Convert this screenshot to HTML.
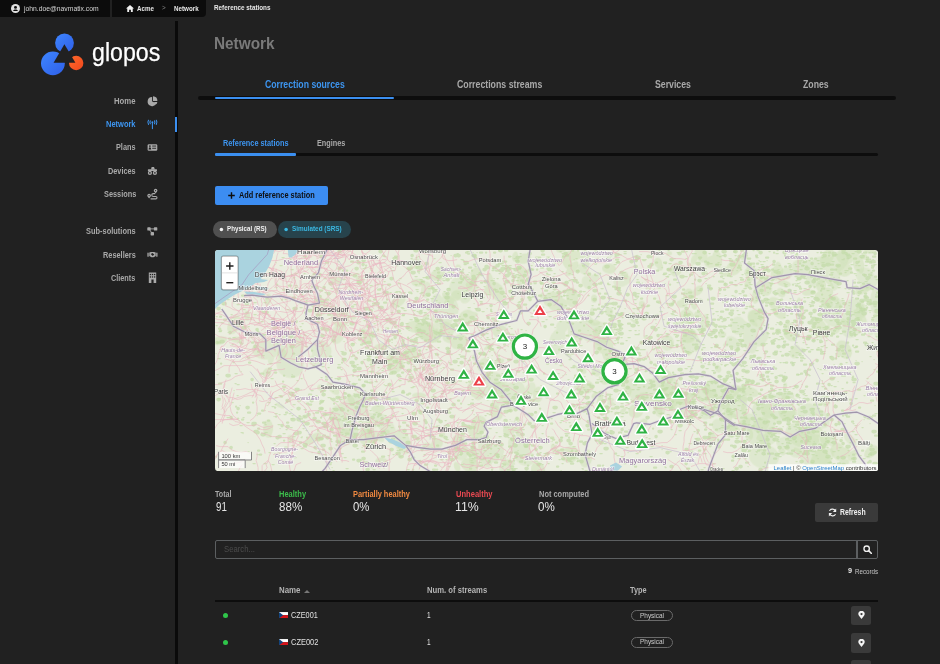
<!DOCTYPE html>
<html><head><meta charset="utf-8"><style>
html,body{margin:0;padding:0;}
body{width:940px;height:664px;overflow:hidden;position:relative;background:#212121;font-family:"Liberation Sans", sans-serif;}
.t{position:absolute;white-space:nowrap;line-height:1.2;}
.b{position:absolute;}
</style></head><body>
<div class="b" style="left:0px;top:0px;width:110px;height:17px;background:#0c0c0c;"></div>
<div class="b" style="left:112px;top:0px;width:94px;height:17px;background:#0c0c0c;border-radius:0 0 4px 0;"></div>
<svg class="b" style="left:11px;top:4px" width="9" height="9" viewBox="0 0 16 16"><circle cx="8" cy="8" r="8" fill="#e0e0e0"/><circle cx="8" cy="6" r="2.6" fill="#0c0c0c"/><path d="M3.6 12.6 C4.6 10.4 6.2 9.8 8 9.8 C9.8 9.8 11.4 10.4 12.4 12.6 Z" fill="#0c0c0c"/></svg>
<svg class="b" style="left:126px;top:4.5px" width="8" height="7" viewBox="0 0 16 14"><path d="M8 0 L16 7 L13.5 7 L13.5 14 L9.8 14 L9.8 9.5 L6.2 9.5 L6.2 14 L2.5 14 L2.5 7 L0 7 Z" fill="#f0f0f0"/></svg>
<div class="b" style="left:175px;top:21px;width:3px;height:643px;background:#0a0a0a;"></div>
<div class="b" style="left:175px;top:116.5px;width:2px;height:15.5px;background:#3b8ff0;"></div>
<svg class="b" style="left:30px;top:25px" width="140" height="60" viewBox="0 0 140 60">
<defs><linearGradient id="lg1" x1="0" y1="0" x2="1" y2="1"><stop offset="0" stop-color="#3e86ff"/><stop offset="1" stop-color="#2f5fe8"/></linearGradient>
<linearGradient id="lg2" x1="0" y1="0" x2="1" y2="1"><stop offset="0" stop-color="#ff6a2a"/><stop offset="1" stop-color="#f0481e"/></linearGradient></defs>
<circle cx="34.5" cy="18.0" r="9.4" fill="url(#lg1)"/>
<circle cx="22.9" cy="38.3" r="11.9" fill="url(#lg1)"/>
<circle cx="46.2" cy="38" r="7.2" fill="url(#lg2)"/>
<path d="M34.4 19.2 L23.6 37.8 L45.4 37.8 Z" fill="#212121"/>
</svg>
<svg class="b" style="left:140px;top:90px" width="25" height="200" viewBox="140 90 25 200">
<g fill="#a9a9a9">
<path d="M152.1 101.6 V96.9 A4.6 4.6 0 1 0 156.5 103.2 Z"/>
<path d="M153.0 96.2 A4.7 4.7 0 0 1 157.4 100.9 H153.0 Z"/>
<path d="M153.6 101.9 H157.3 A4.6 4.6 0 0 1 156.3 104.3 Z"/>
</g>
<g stroke="#3d95f0" stroke-width="1.05" fill="none" stroke-linecap="round">
<path d="M152.4 122.6 V128.6"/>
<path d="M150.3 120.9 Q149.4 122.3 150.3 123.7"/><path d="M154.5 120.9 Q155.4 122.3 154.5 123.7"/>
<path d="M148.5 120.2 Q147.1 122.3 148.5 124.4"/><path d="M156.3 120.2 Q157.7 122.3 156.3 124.4"/>
</g>
<circle cx="152.4" cy="122.3" r="0.95" fill="#3d95f0"/>
<rect x="147.6" y="144.2" width="9.7" height="6.6" rx="1.2" fill="#a9a9a9"/>
<g fill="#212121"><circle cx="149.9" cy="146.1" r="0.85"/><path d="M148.6 149.4 Q148.7 147.3 149.9 147.3 Q151.1 147.3 151.2 149.4 Z"/>
<rect x="152.2" y="145.6" width="3.9" height="0.9"/><rect x="152.2" y="147.8" width="3.9" height="0.9"/></g>
<g fill="#a9a9a9"><path d="M151.0 169.6 L151.6 167.0 H154.0 L154.9 169.6 Z"/><rect x="147.9" y="169.3" width="9.1" height="1.7" rx="0.5"/></g>
<g fill="#a9a9a9"><circle cx="149.9" cy="172.9" r="2.1"/><circle cx="154.9" cy="172.9" r="2.1"/></g><g fill="#212121"><circle cx="149.9" cy="172.9" r="0.8"/><circle cx="154.9" cy="172.9" r="0.8"/></g>
<g fill="#a9a9a9"><circle cx="155.6" cy="190.6" r="1.75"/><path d="M154.0 191.3 L155.6 193.5 L157.2 191.3 Z"/>
<circle cx="149.1" cy="195.6" r="1.75"/><path d="M147.5 196.3 L149.1 198.6 L150.7 196.3 Z"/></g>
<circle cx="155.6" cy="190.6" r="0.6" fill="#212121"/><circle cx="149.1" cy="195.6" r="0.6" fill="#212121"/>
<path d="M155.2 193.6 H153.2 A1.45 1.45 0 0 0 153.2 196.5 H155.8 A1.2 1.2 0 0 1 155.8 198.9 H150.6" fill="none" stroke="#a9a9a9" stroke-width="1.1"/>
<g fill="#a9a9a9"><rect x="147.3" y="227.2" width="3.4" height="3.4" rx="0.7"/><rect x="153.9" y="227.2" width="3.4" height="3.4" rx="0.7"/>
<rect x="150.6" y="232.0" width="3.4" height="3.4" rx="0.7"/></g>
<path d="M149 228.9 H155.6 M149 228.9 L152.3 233.7" stroke="#a9a9a9" stroke-width="0.9"/>
<g fill="#a9a9a9"><rect x="147.4" y="252.7" width="1.3" height="4.0"/><rect x="156.2" y="252.7" width="1.3" height="4.0"/>
<path d="M149.3 252.6 L151.0 251.9 H154.0 L155.7 252.6 V256.0 L153.6 257.3 H151.4 L149.3 256.0 Z"/></g>
<path d="M150.8 254.1 L152.5 253.1 L154.3 254.6 L152.6 255.9 Z" fill="#212121"/>
<path d="M148.8 272.5 H156.2 V283 H153.6 V279.6 H151.4 V283 H148.8 Z" fill="#a9a9a9"/>
<g fill="#212121"><rect x="149.8" y="273.9" width="1.3" height="1.3"/><rect x="151.9" y="273.9" width="1.3" height="1.3"/><rect x="154.0" y="273.9" width="1.3" height="1.3"/>
<rect x="149.8" y="276.3" width="1.3" height="1.3"/><rect x="151.9" y="276.3" width="1.3" height="1.3"/><rect x="154.0" y="276.3" width="1.3" height="1.3"/>
</g>
</svg>
<div class="b" style="left:198px;top:96px;width:697.5px;height:3.700000000000003px;background:#0d0d0d;border-radius:2px;"></div>
<div class="b" style="left:215px;top:96.5px;width:179px;height:2.5px;background:#3b8ff0;border-radius:1px;"></div>
<div class="b" style="left:215px;top:152.6px;width:663.3px;height:3.200000000000017px;background:#0d0d0d;border-radius:2px;"></div>
<div class="b" style="left:215px;top:153px;width:81px;height:2.5px;background:#3b8ff0;border-radius:1px;"></div>
<div class="b" style="left:215px;top:185.5px;width:113px;height:19.80000000000001px;background:#3c8df2;border-radius:2px;"></div>
<svg class="b" style="left:228px;top:192px" width="7" height="7" viewBox="0 0 10 10"><path d="M5 0.3 V9.7 M0.3 5 H9.7" stroke="#0e0e0e" stroke-width="2.0"/></svg>
<div class="b" style="left:213.2px;top:220.6px;width:63.80000000000001px;height:17.0px;background:#505050;border-radius:9px;"></div>
<div class="b" style="left:278.2px;top:220.6px;width:72.80000000000001px;height:17.0px;background:#27434c;border-radius:9px;"></div>
<svg class="b" style="left:210px;top:220px" width="90" height="20" viewBox="210 220 90 20"><circle cx="221.4" cy="229.4" r="1.75" fill="#f4f4f4"/><circle cx="286.1" cy="229.4" r="1.75" fill="#3bb8e2"/></svg>
<svg class="b" style="left:214.9px;top:250.4px" width="663.2" height="221.1" viewBox="214.9 250.4 663.2 221.1"><defs><clipPath id="mc"><rect x="214.9" y="250.4" width="663.2" height="221.1" rx="3"/></clipPath></defs><g clip-path="url(#mc)"><rect x="214.9" y="250.4" width="663.2" height="221.1" fill="#ebeee0"/><g fill="#cfe2b8" opacity="0.55"><ellipse cx="799" cy="311" rx="8" ry="3" transform="rotate(96 799 311)"/><ellipse cx="800" cy="305" rx="7" ry="3" transform="rotate(78 800 305)"/><ellipse cx="827" cy="304" rx="6" ry="5" transform="rotate(22 827 304)"/><ellipse cx="820" cy="329" rx="10" ry="7" transform="rotate(71 820 329)"/><ellipse cx="823" cy="299" rx="9" ry="5" transform="rotate(26 823 299)"/><ellipse cx="837" cy="312" rx="9" ry="4" transform="rotate(105 837 312)"/><ellipse cx="784" cy="284" rx="7" ry="3" transform="rotate(11 784 284)"/><ellipse cx="827" cy="331" rx="6" ry="3" transform="rotate(105 827 331)"/><ellipse cx="776" cy="305" rx="9" ry="6" transform="rotate(44 776 305)"/><ellipse cx="764" cy="288" rx="9" ry="7" transform="rotate(52 764 288)"/><ellipse cx="869" cy="249" rx="6" ry="5" transform="rotate(27 869 249)"/><ellipse cx="855" cy="250" rx="8" ry="6" transform="rotate(103 855 250)"/><ellipse cx="871" cy="241" rx="8" ry="5" transform="rotate(104 871 241)"/><ellipse cx="827" cy="258" rx="10" ry="6" transform="rotate(120 827 258)"/><ellipse cx="886" cy="259" rx="8" ry="7" transform="rotate(148 886 259)"/><ellipse cx="856" cy="264" rx="8" ry="3" transform="rotate(83 856 264)"/><ellipse cx="864" cy="257" rx="3" ry="3" transform="rotate(23 864 257)"/><ellipse cx="860" cy="265" rx="9" ry="4" transform="rotate(81 860 265)"/><ellipse cx="824" cy="240" rx="9" ry="7" transform="rotate(50 824 240)"/><ellipse cx="845" cy="257" rx="9" ry="8" transform="rotate(27 845 257)"/><ellipse cx="606" cy="410" rx="5" ry="3" transform="rotate(106 606 410)"/><ellipse cx="600" cy="401" rx="6" ry="3" transform="rotate(102 600 401)"/><ellipse cx="626" cy="393" rx="7" ry="5" transform="rotate(122 626 393)"/><ellipse cx="636" cy="411" rx="8" ry="7" transform="rotate(144 636 411)"/><ellipse cx="586" cy="409" rx="4" ry="3" transform="rotate(11 586 409)"/><ellipse cx="611" cy="404" rx="4" ry="2" transform="rotate(9 611 404)"/><ellipse cx="610" cy="400" rx="4" ry="2" transform="rotate(5 610 400)"/><ellipse cx="359" cy="282" rx="4" ry="2" transform="rotate(63 359 282)"/><ellipse cx="320" cy="307" rx="9" ry="8" transform="rotate(84 320 307)"/><ellipse cx="317" cy="301" rx="4" ry="2" transform="rotate(48 317 301)"/><ellipse cx="338" cy="291" rx="3" ry="3" transform="rotate(95 338 291)"/><ellipse cx="353" cy="318" rx="3" ry="2" transform="rotate(176 353 318)"/><ellipse cx="360" cy="279" rx="5" ry="3" transform="rotate(30 360 279)"/><ellipse cx="335" cy="278" rx="8" ry="5" transform="rotate(40 335 278)"/><ellipse cx="459" cy="236" rx="9" ry="7" transform="rotate(147 459 236)"/><ellipse cx="418" cy="283" rx="7" ry="4" transform="rotate(5 418 283)"/><ellipse cx="449" cy="303" rx="5" ry="4" transform="rotate(172 449 303)"/><ellipse cx="340" cy="318" rx="10" ry="9" transform="rotate(66 340 318)"/><ellipse cx="425" cy="317" rx="4" ry="2" transform="rotate(112 425 317)"/><ellipse cx="476" cy="273" rx="6" ry="5" transform="rotate(144 476 273)"/><ellipse cx="466" cy="318" rx="9" ry="7" transform="rotate(135 466 318)"/><ellipse cx="398" cy="302" rx="9" ry="5" transform="rotate(144 398 302)"/><ellipse cx="456" cy="296" rx="6" ry="5" transform="rotate(130 456 296)"/><ellipse cx="476" cy="277" rx="4" ry="3" transform="rotate(145 476 277)"/><ellipse cx="497" cy="292" rx="10" ry="7" transform="rotate(63 497 292)"/><ellipse cx="458" cy="268" rx="3" ry="3" transform="rotate(117 458 268)"/><ellipse cx="415" cy="264" rx="6" ry="5" transform="rotate(149 415 264)"/><ellipse cx="474" cy="281" rx="5" ry="3" transform="rotate(106 474 281)"/><ellipse cx="469" cy="286" rx="4" ry="3" transform="rotate(64 469 286)"/><ellipse cx="439" cy="275" rx="9" ry="6" transform="rotate(165 439 275)"/><ellipse cx="490" cy="280" rx="7" ry="3" transform="rotate(79 490 280)"/><ellipse cx="521" cy="281" rx="9" ry="4" transform="rotate(85 521 281)"/><ellipse cx="515" cy="257" rx="5" ry="3" transform="rotate(100 515 257)"/><ellipse cx="522" cy="272" rx="7" ry="4" transform="rotate(50 522 272)"/><ellipse cx="524" cy="259" rx="7" ry="5" transform="rotate(164 524 259)"/><ellipse cx="489" cy="289" rx="7" ry="4" transform="rotate(125 489 289)"/><ellipse cx="492" cy="287" rx="6" ry="6" transform="rotate(126 492 287)"/><ellipse cx="561" cy="250" rx="5" ry="3" transform="rotate(170 561 250)"/><ellipse cx="527" cy="272" rx="4" ry="2" transform="rotate(13 527 272)"/><ellipse cx="560" cy="305" rx="8" ry="6" transform="rotate(161 560 305)"/><ellipse cx="576" cy="316" rx="8" ry="4" transform="rotate(159 576 316)"/><ellipse cx="572" cy="298" rx="10" ry="6" transform="rotate(88 572 298)"/><ellipse cx="594" cy="299" rx="4" ry="3" transform="rotate(93 594 299)"/><ellipse cx="554" cy="307" rx="5" ry="4" transform="rotate(4 554 307)"/><ellipse cx="542" cy="296" rx="3" ry="2" transform="rotate(112 542 296)"/><ellipse cx="553" cy="300" rx="10" ry="8" transform="rotate(175 553 300)"/><ellipse cx="365" cy="432" rx="3" ry="3" transform="rotate(49 365 432)"/><ellipse cx="367" cy="438" rx="9" ry="8" transform="rotate(47 367 438)"/><ellipse cx="382" cy="463" rx="7" ry="5" transform="rotate(16 382 463)"/><ellipse cx="384" cy="433" rx="6" ry="3" transform="rotate(169 384 433)"/><ellipse cx="321" cy="388" rx="4" ry="3" transform="rotate(12 321 388)"/><ellipse cx="367" cy="400" rx="5" ry="4" transform="rotate(167 367 400)"/><ellipse cx="349" cy="433" rx="7" ry="3" transform="rotate(20 349 433)"/><ellipse cx="354" cy="427" rx="4" ry="2" transform="rotate(55 354 427)"/><ellipse cx="351" cy="400" rx="7" ry="3" transform="rotate(62 351 400)"/><ellipse cx="368" cy="422" rx="3" ry="2" transform="rotate(99 368 422)"/><ellipse cx="313" cy="439" rx="10" ry="4" transform="rotate(147 313 439)"/><ellipse cx="268" cy="429" rx="9" ry="5" transform="rotate(91 268 429)"/><ellipse cx="267" cy="373" rx="5" ry="4" transform="rotate(127 267 373)"/><ellipse cx="280" cy="406" rx="5" ry="2" transform="rotate(23 280 406)"/><ellipse cx="345" cy="433" rx="5" ry="2" transform="rotate(15 345 433)"/><ellipse cx="333" cy="389" rx="8" ry="4" transform="rotate(44 333 389)"/><ellipse cx="291" cy="439" rx="4" ry="3" transform="rotate(47 291 439)"/><ellipse cx="378" cy="409" rx="7" ry="4" transform="rotate(174 378 409)"/><ellipse cx="474" cy="358" rx="3" ry="2" transform="rotate(85 474 358)"/><ellipse cx="468" cy="345" rx="7" ry="3" transform="rotate(48 468 345)"/><ellipse cx="495" cy="353" rx="3" ry="1" transform="rotate(55 495 353)"/><ellipse cx="483" cy="365" rx="7" ry="5" transform="rotate(118 483 365)"/><ellipse cx="472" cy="315" rx="6" ry="3" transform="rotate(177 472 315)"/><ellipse cx="497" cy="364" rx="8" ry="3" transform="rotate(150 497 364)"/><ellipse cx="500" cy="332" rx="8" ry="7" transform="rotate(25 500 332)"/><ellipse cx="459" cy="342" rx="9" ry="7" transform="rotate(149 459 342)"/><ellipse cx="447" cy="329" rx="8" ry="6" transform="rotate(41 447 329)"/><ellipse cx="489" cy="347" rx="6" ry="2" transform="rotate(150 489 347)"/><ellipse cx="472" cy="389" rx="7" ry="5" transform="rotate(88 472 389)"/><ellipse cx="538" cy="395" rx="8" ry="5" transform="rotate(96 538 395)"/><ellipse cx="496" cy="391" rx="8" ry="4" transform="rotate(13 496 391)"/><ellipse cx="497" cy="414" rx="4" ry="3" transform="rotate(176 497 414)"/><ellipse cx="479" cy="395" rx="6" ry="5" transform="rotate(138 479 395)"/><ellipse cx="478" cy="383" rx="4" ry="2" transform="rotate(46 478 383)"/><ellipse cx="499" cy="385" rx="7" ry="3" transform="rotate(11 499 385)"/><ellipse cx="496" cy="413" rx="8" ry="6" transform="rotate(52 496 413)"/><ellipse cx="477" cy="394" rx="6" ry="3" transform="rotate(161 477 394)"/><ellipse cx="518" cy="427" rx="10" ry="4" transform="rotate(83 518 427)"/><ellipse cx="447" cy="297" rx="6" ry="3" transform="rotate(38 447 297)"/><ellipse cx="436" cy="336" rx="7" ry="3" transform="rotate(94 436 336)"/><ellipse cx="432" cy="337" rx="9" ry="6" transform="rotate(160 432 337)"/><ellipse cx="415" cy="327" rx="9" ry="6" transform="rotate(4 415 327)"/><ellipse cx="448" cy="340" rx="6" ry="3" transform="rotate(25 448 340)"/><ellipse cx="408" cy="353" rx="9" ry="4" transform="rotate(135 408 353)"/><ellipse cx="426" cy="332" rx="9" ry="7" transform="rotate(162 426 332)"/><ellipse cx="414" cy="357" rx="6" ry="5" transform="rotate(106 414 357)"/><ellipse cx="404" cy="355" rx="5" ry="2" transform="rotate(18 404 355)"/><ellipse cx="475" cy="434" rx="10" ry="5" transform="rotate(48 475 434)"/><ellipse cx="437" cy="444" rx="6" ry="5" transform="rotate(159 437 444)"/><ellipse cx="479" cy="425" rx="9" ry="8" transform="rotate(99 479 425)"/><ellipse cx="458" cy="440" rx="8" ry="5" transform="rotate(135 458 440)"/><ellipse cx="442" cy="435" rx="3" ry="3" transform="rotate(23 442 435)"/><ellipse cx="427" cy="447" rx="5" ry="4" transform="rotate(176 427 447)"/><ellipse cx="457" cy="467" rx="5" ry="3" transform="rotate(71 457 467)"/><ellipse cx="471" cy="453" rx="4" ry="4" transform="rotate(89 471 453)"/><ellipse cx="475" cy="477" rx="10" ry="6" transform="rotate(25 475 477)"/><ellipse cx="466" cy="451" rx="5" ry="2" transform="rotate(43 466 451)"/><ellipse cx="538" cy="471" rx="9" ry="7" transform="rotate(74 538 471)"/><ellipse cx="509" cy="463" rx="6" ry="3" transform="rotate(11 509 463)"/><ellipse cx="526" cy="486" rx="4" ry="3" transform="rotate(113 526 486)"/><ellipse cx="554" cy="449" rx="5" ry="3" transform="rotate(72 554 449)"/><ellipse cx="470" cy="465" rx="9" ry="7" transform="rotate(4 470 465)"/><ellipse cx="586" cy="459" rx="9" ry="6" transform="rotate(106 586 459)"/><ellipse cx="570" cy="455" rx="9" ry="8" transform="rotate(154 570 455)"/><ellipse cx="562" cy="453" rx="4" ry="2" transform="rotate(94 562 453)"/><ellipse cx="510" cy="429" rx="8" ry="6" transform="rotate(138 510 429)"/><ellipse cx="503" cy="459" rx="3" ry="3" transform="rotate(42 503 459)"/><ellipse cx="633" cy="320" rx="5" ry="2" transform="rotate(45 633 320)"/><ellipse cx="592" cy="312" rx="4" ry="2" transform="rotate(94 592 312)"/><ellipse cx="595" cy="323" rx="5" ry="3" transform="rotate(2 595 323)"/><ellipse cx="604" cy="346" rx="10" ry="7" transform="rotate(159 604 346)"/><ellipse cx="597" cy="332" rx="5" ry="4" transform="rotate(127 597 332)"/><ellipse cx="609" cy="333" rx="6" ry="5" transform="rotate(76 609 333)"/><ellipse cx="609" cy="352" rx="9" ry="5" transform="rotate(6 609 352)"/><ellipse cx="600" cy="343" rx="8" ry="4" transform="rotate(143 600 343)"/><ellipse cx="609" cy="312" rx="4" ry="4" transform="rotate(56 609 312)"/><ellipse cx="596" cy="372" rx="5" ry="4" transform="rotate(53 596 372)"/><ellipse cx="610" cy="376" rx="4" ry="2" transform="rotate(75 610 376)"/><ellipse cx="568" cy="355" rx="4" ry="2" transform="rotate(38 568 355)"/><ellipse cx="600" cy="379" rx="3" ry="1" transform="rotate(71 600 379)"/><ellipse cx="620" cy="365" rx="8" ry="7" transform="rotate(168 620 365)"/><ellipse cx="584" cy="387" rx="10" ry="7" transform="rotate(6 584 387)"/><ellipse cx="581" cy="370" rx="6" ry="3" transform="rotate(30 581 370)"/><ellipse cx="605" cy="380" rx="5" ry="5" transform="rotate(22 605 380)"/><ellipse cx="666" cy="393" rx="5" ry="4" transform="rotate(148 666 393)"/><ellipse cx="643" cy="397" rx="6" ry="4" transform="rotate(166 643 397)"/><ellipse cx="658" cy="406" rx="9" ry="4" transform="rotate(74 658 406)"/><ellipse cx="666" cy="376" rx="3" ry="1" transform="rotate(11 666 376)"/><ellipse cx="666" cy="391" rx="8" ry="7" transform="rotate(61 666 391)"/><ellipse cx="642" cy="425" rx="7" ry="4" transform="rotate(129 642 425)"/><ellipse cx="642" cy="404" rx="3" ry="2" transform="rotate(165 642 404)"/><ellipse cx="612" cy="374" rx="3" ry="2" transform="rotate(86 612 374)"/><ellipse cx="707" cy="387" rx="6" ry="3" transform="rotate(77 707 387)"/><ellipse cx="595" cy="396" rx="4" ry="3" transform="rotate(133 595 396)"/><ellipse cx="668" cy="376" rx="7" ry="4" transform="rotate(58 668 376)"/><ellipse cx="623" cy="411" rx="4" ry="2" transform="rotate(136 623 411)"/><ellipse cx="700" cy="399" rx="3" ry="2" transform="rotate(59 700 399)"/><ellipse cx="749" cy="392" rx="10" ry="5" transform="rotate(15 749 392)"/><ellipse cx="723" cy="403" rx="8" ry="5" transform="rotate(42 723 403)"/><ellipse cx="671" cy="403" rx="8" ry="6" transform="rotate(152 671 403)"/><ellipse cx="694" cy="390" rx="9" ry="5" transform="rotate(102 694 390)"/><ellipse cx="673" cy="409" rx="4" ry="2" transform="rotate(44 673 409)"/><ellipse cx="728" cy="415" rx="7" ry="4" transform="rotate(71 728 415)"/><ellipse cx="729" cy="394" rx="5" ry="4" transform="rotate(118 729 394)"/><ellipse cx="711" cy="395" rx="6" ry="5" transform="rotate(151 711 395)"/><ellipse cx="706" cy="393" rx="5" ry="2" transform="rotate(34 706 393)"/><ellipse cx="731" cy="392" rx="10" ry="6" transform="rotate(156 731 392)"/><ellipse cx="682" cy="398" rx="8" ry="7" transform="rotate(19 682 398)"/><ellipse cx="726" cy="386" rx="5" ry="3" transform="rotate(25 726 386)"/><ellipse cx="767" cy="413" rx="7" ry="5" transform="rotate(37 767 413)"/><ellipse cx="787" cy="401" rx="8" ry="4" transform="rotate(56 787 401)"/><ellipse cx="775" cy="431" rx="7" ry="3" transform="rotate(18 775 431)"/><ellipse cx="730" cy="414" rx="7" ry="3" transform="rotate(29 730 414)"/><ellipse cx="750" cy="383" rx="5" ry="3" transform="rotate(172 750 383)"/><ellipse cx="745" cy="422" rx="6" ry="3" transform="rotate(156 745 422)"/><ellipse cx="789" cy="400" rx="4" ry="3" transform="rotate(37 789 400)"/><ellipse cx="825" cy="401" rx="6" ry="5" transform="rotate(73 825 401)"/><ellipse cx="785" cy="387" rx="4" ry="2" transform="rotate(99 785 387)"/><ellipse cx="718" cy="369" rx="4" ry="3" transform="rotate(67 718 369)"/><ellipse cx="743" cy="400" rx="5" ry="3" transform="rotate(167 743 400)"/><ellipse cx="787" cy="413" rx="9" ry="8" transform="rotate(36 787 413)"/><ellipse cx="810" cy="431" rx="10" ry="6" transform="rotate(10 810 431)"/><ellipse cx="761" cy="425" rx="9" ry="7" transform="rotate(148 761 425)"/><ellipse cx="763" cy="448" rx="5" ry="3" transform="rotate(152 763 448)"/><ellipse cx="747" cy="423" rx="5" ry="3" transform="rotate(93 747 423)"/><ellipse cx="731" cy="434" rx="5" ry="4" transform="rotate(162 731 434)"/><ellipse cx="770" cy="434" rx="8" ry="3" transform="rotate(151 770 434)"/><ellipse cx="764" cy="441" rx="7" ry="5" transform="rotate(55 764 441)"/><ellipse cx="712" cy="438" rx="6" ry="4" transform="rotate(80 712 438)"/><ellipse cx="735" cy="431" rx="7" ry="5" transform="rotate(42 735 431)"/><ellipse cx="744" cy="409" rx="6" ry="3" transform="rotate(85 744 409)"/><ellipse cx="750" cy="434" rx="6" ry="3" transform="rotate(80 750 434)"/><ellipse cx="733" cy="430" rx="7" ry="3" transform="rotate(132 733 430)"/><ellipse cx="745" cy="416" rx="3" ry="2" transform="rotate(68 745 416)"/><ellipse cx="809" cy="439" rx="9" ry="8" transform="rotate(132 809 439)"/><ellipse cx="805" cy="435" rx="10" ry="6" transform="rotate(172 805 435)"/><ellipse cx="809" cy="437" rx="9" ry="7" transform="rotate(12 809 437)"/><ellipse cx="782" cy="452" rx="4" ry="3" transform="rotate(49 782 452)"/><ellipse cx="804" cy="435" rx="7" ry="6" transform="rotate(37 804 435)"/><ellipse cx="798" cy="451" rx="5" ry="2" transform="rotate(33 798 451)"/><ellipse cx="822" cy="458" rx="8" ry="7" transform="rotate(30 822 458)"/><ellipse cx="802" cy="436" rx="7" ry="5" transform="rotate(65 802 436)"/><ellipse cx="816" cy="432" rx="7" ry="6" transform="rotate(19 816 432)"/><ellipse cx="825" cy="439" rx="6" ry="5" transform="rotate(48 825 439)"/><ellipse cx="824" cy="439" rx="6" ry="4" transform="rotate(80 824 439)"/><ellipse cx="828" cy="462" rx="3" ry="3" transform="rotate(46 828 462)"/><ellipse cx="766" cy="407" rx="7" ry="5" transform="rotate(56 766 407)"/><ellipse cx="816" cy="440" rx="4" ry="3" transform="rotate(78 816 440)"/><ellipse cx="759" cy="437" rx="4" ry="2" transform="rotate(118 759 437)"/><ellipse cx="812" cy="440" rx="5" ry="2" transform="rotate(64 812 440)"/><ellipse cx="815" cy="460" rx="7" ry="4" transform="rotate(112 815 460)"/><ellipse cx="797" cy="441" rx="10" ry="5" transform="rotate(27 797 441)"/><ellipse cx="838" cy="452" rx="9" ry="7" transform="rotate(72 838 452)"/><ellipse cx="810" cy="442" rx="8" ry="5" transform="rotate(63 810 442)"/><ellipse cx="756" cy="319" rx="10" ry="7" transform="rotate(45 756 319)"/><ellipse cx="789" cy="336" rx="7" ry="4" transform="rotate(43 789 336)"/><ellipse cx="838" cy="355" rx="3" ry="2" transform="rotate(169 838 355)"/><ellipse cx="795" cy="352" rx="7" ry="5" transform="rotate(115 795 352)"/><ellipse cx="789" cy="326" rx="5" ry="3" transform="rotate(9 789 326)"/><ellipse cx="828" cy="313" rx="8" ry="3" transform="rotate(152 828 313)"/><ellipse cx="779" cy="313" rx="8" ry="5" transform="rotate(41 779 313)"/><ellipse cx="801" cy="351" rx="3" ry="2" transform="rotate(135 801 351)"/><ellipse cx="756" cy="296" rx="8" ry="4" transform="rotate(100 756 296)"/><ellipse cx="722" cy="357" rx="7" ry="4" transform="rotate(116 722 357)"/><ellipse cx="860" cy="317" rx="9" ry="4" transform="rotate(47 860 317)"/><ellipse cx="844" cy="350" rx="10" ry="7" transform="rotate(59 844 350)"/><ellipse cx="860" cy="309" rx="5" ry="4" transform="rotate(114 860 309)"/><ellipse cx="824" cy="295" rx="10" ry="6" transform="rotate(151 824 295)"/><ellipse cx="821" cy="286" rx="6" ry="5" transform="rotate(103 821 286)"/><ellipse cx="833" cy="332" rx="7" ry="3" transform="rotate(164 833 332)"/><ellipse cx="844" cy="323" rx="4" ry="3" transform="rotate(62 844 323)"/><ellipse cx="845" cy="323" rx="3" ry="2" transform="rotate(114 845 323)"/><ellipse cx="824" cy="292" rx="3" ry="2" transform="rotate(65 824 292)"/><ellipse cx="863" cy="290" rx="9" ry="4" transform="rotate(156 863 290)"/><ellipse cx="902" cy="298" rx="4" ry="2" transform="rotate(20 902 298)"/><ellipse cx="888" cy="276" rx="9" ry="6" transform="rotate(149 888 276)"/><ellipse cx="800" cy="261" rx="4" ry="2" transform="rotate(136 800 261)"/><ellipse cx="829" cy="283" rx="6" ry="2" transform="rotate(46 829 283)"/><ellipse cx="808" cy="293" rx="6" ry="3" transform="rotate(174 808 293)"/><ellipse cx="750" cy="269" rx="7" ry="3" transform="rotate(74 750 269)"/><ellipse cx="763" cy="280" rx="5" ry="4" transform="rotate(97 763 280)"/><ellipse cx="835" cy="299" rx="4" ry="3" transform="rotate(31 835 299)"/><ellipse cx="844" cy="270" rx="8" ry="7" transform="rotate(1 844 270)"/><ellipse cx="778" cy="271" rx="9" ry="4" transform="rotate(89 778 271)"/><ellipse cx="781" cy="293" rx="5" ry="4" transform="rotate(51 781 293)"/><ellipse cx="748" cy="283" rx="6" ry="3" transform="rotate(115 748 283)"/><ellipse cx="777" cy="273" rx="8" ry="6" transform="rotate(113 777 273)"/><ellipse cx="725" cy="272" rx="6" ry="5" transform="rotate(16 725 272)"/><ellipse cx="744" cy="258" rx="4" ry="2" transform="rotate(162 744 258)"/><ellipse cx="717" cy="260" rx="9" ry="5" transform="rotate(83 717 260)"/><ellipse cx="701" cy="255" rx="8" ry="6" transform="rotate(63 701 255)"/><ellipse cx="734" cy="268" rx="9" ry="7" transform="rotate(134 734 268)"/><ellipse cx="752" cy="274" rx="8" ry="6" transform="rotate(23 752 274)"/><ellipse cx="691" cy="267" rx="5" ry="2" transform="rotate(54 691 267)"/><ellipse cx="647" cy="287" rx="4" ry="2" transform="rotate(45 647 287)"/><ellipse cx="647" cy="339" rx="4" ry="2" transform="rotate(34 647 339)"/><ellipse cx="698" cy="315" rx="4" ry="3" transform="rotate(18 698 315)"/><ellipse cx="609" cy="354" rx="9" ry="7" transform="rotate(78 609 354)"/><ellipse cx="671" cy="344" rx="4" ry="2" transform="rotate(70 671 344)"/><ellipse cx="684" cy="324" rx="9" ry="6" transform="rotate(90 684 324)"/><ellipse cx="642" cy="305" rx="4" ry="3" transform="rotate(73 642 305)"/><ellipse cx="698" cy="291" rx="6" ry="4" transform="rotate(135 698 291)"/><ellipse cx="689" cy="336" rx="8" ry="7" transform="rotate(139 689 336)"/><ellipse cx="689" cy="297" rx="8" ry="6" transform="rotate(82 689 297)"/><ellipse cx="690" cy="353" rx="4" ry="2" transform="rotate(141 690 353)"/><ellipse cx="694" cy="305" rx="5" ry="3" transform="rotate(82 694 305)"/><ellipse cx="687" cy="317" rx="8" ry="7" transform="rotate(33 687 317)"/><ellipse cx="682" cy="304" rx="6" ry="4" transform="rotate(175 682 304)"/><ellipse cx="722" cy="335" rx="4" ry="3" transform="rotate(169 722 335)"/><ellipse cx="844" cy="454" rx="7" ry="5" transform="rotate(129 844 454)"/><ellipse cx="821" cy="454" rx="9" ry="6" transform="rotate(74 821 454)"/><ellipse cx="871" cy="452" rx="8" ry="5" transform="rotate(137 871 452)"/><ellipse cx="905" cy="479" rx="5" ry="2" transform="rotate(49 905 479)"/><ellipse cx="852" cy="456" rx="6" ry="4" transform="rotate(126 852 456)"/><ellipse cx="844" cy="463" rx="5" ry="4" transform="rotate(169 844 463)"/><ellipse cx="838" cy="454" rx="9" ry="5" transform="rotate(38 838 454)"/><ellipse cx="884" cy="470" rx="9" ry="6" transform="rotate(84 884 470)"/><ellipse cx="234" cy="325" rx="10" ry="6" transform="rotate(115 234 325)"/><ellipse cx="268" cy="300" rx="6" ry="3" transform="rotate(99 268 300)"/><ellipse cx="282" cy="354" rx="5" ry="5" transform="rotate(48 282 354)"/><ellipse cx="237" cy="340" rx="6" ry="3" transform="rotate(0 237 340)"/><ellipse cx="247" cy="316" rx="5" ry="3" transform="rotate(86 247 316)"/><ellipse cx="219" cy="341" rx="8" ry="4" transform="rotate(167 219 341)"/><ellipse cx="395" cy="365" rx="9" ry="8" transform="rotate(141 395 365)"/><ellipse cx="419" cy="396" rx="7" ry="3" transform="rotate(2 419 396)"/><ellipse cx="423" cy="362" rx="5" ry="2" transform="rotate(26 423 362)"/><ellipse cx="394" cy="401" rx="5" ry="3" transform="rotate(163 394 401)"/><ellipse cx="394" cy="359" rx="9" ry="7" transform="rotate(141 394 359)"/><ellipse cx="365" cy="337" rx="9" ry="7" transform="rotate(36 365 337)"/><ellipse cx="380" cy="349" rx="8" ry="5" transform="rotate(159 380 349)"/><ellipse cx="372" cy="365" rx="5" ry="2" transform="rotate(89 372 365)"/><ellipse cx="625" cy="276" rx="4" ry="3" transform="rotate(90 625 276)"/><ellipse cx="554" cy="263" rx="3" ry="2" transform="rotate(84 554 263)"/><ellipse cx="567" cy="261" rx="9" ry="5" transform="rotate(75 567 261)"/><ellipse cx="609" cy="269" rx="7" ry="5" transform="rotate(5 609 269)"/><ellipse cx="572" cy="256" rx="10" ry="5" transform="rotate(177 572 256)"/><ellipse cx="572" cy="269" rx="9" ry="4" transform="rotate(129 572 269)"/><ellipse cx="585" cy="260" rx="9" ry="5" transform="rotate(85 585 260)"/><ellipse cx="660" cy="267" rx="4" ry="3" transform="rotate(76 660 267)"/><ellipse cx="658" cy="263" rx="5" ry="4" transform="rotate(73 658 263)"/><ellipse cx="676" cy="270" rx="7" ry="6" transform="rotate(118 676 270)"/><ellipse cx="694" cy="260" rx="5" ry="3" transform="rotate(106 694 260)"/><ellipse cx="669" cy="254" rx="3" ry="2" transform="rotate(159 669 254)"/><ellipse cx="684" cy="269" rx="5" ry="2" transform="rotate(34 684 269)"/><ellipse cx="712" cy="262" rx="8" ry="6" transform="rotate(164 712 262)"/></g><g fill="#cbe0b2" opacity="0.38"><ellipse cx="639" cy="392" rx="12" ry="9" transform="rotate(107 639 392)"/><ellipse cx="654" cy="394" rx="13" ry="8" transform="rotate(137 654 394)"/><ellipse cx="670" cy="403" rx="6" ry="5" transform="rotate(165 670 403)"/><ellipse cx="649" cy="393" rx="14" ry="11" transform="rotate(101 649 393)"/><ellipse cx="659" cy="408" rx="10" ry="6" transform="rotate(78 659 408)"/><ellipse cx="631" cy="384" rx="7" ry="5" transform="rotate(7 631 384)"/><ellipse cx="687" cy="411" rx="12" ry="10" transform="rotate(80 687 411)"/><ellipse cx="680" cy="401" rx="12" ry="10" transform="rotate(177 680 401)"/><ellipse cx="640" cy="401" rx="7" ry="5" transform="rotate(38 640 401)"/><ellipse cx="662" cy="401" rx="6" ry="5" transform="rotate(22 662 401)"/><ellipse cx="668" cy="399" rx="15" ry="7" transform="rotate(3 668 399)"/><ellipse cx="657" cy="393" rx="13" ry="7" transform="rotate(9 657 393)"/><ellipse cx="665" cy="386" rx="15" ry="11" transform="rotate(15 665 386)"/><ellipse cx="638" cy="390" rx="11" ry="9" transform="rotate(46 638 390)"/><ellipse cx="691" cy="397" rx="6" ry="3" transform="rotate(117 691 397)"/><ellipse cx="765" cy="416" rx="9" ry="7" transform="rotate(30 765 416)"/><ellipse cx="782" cy="410" rx="7" ry="4" transform="rotate(103 782 410)"/><ellipse cx="718" cy="426" rx="7" ry="6" transform="rotate(65 718 426)"/><ellipse cx="734" cy="408" rx="10" ry="6" transform="rotate(142 734 408)"/><ellipse cx="809" cy="413" rx="12" ry="7" transform="rotate(11 809 413)"/><ellipse cx="806" cy="417" rx="14" ry="9" transform="rotate(109 806 417)"/><ellipse cx="816" cy="417" rx="12" ry="7" transform="rotate(77 816 417)"/><ellipse cx="782" cy="413" rx="13" ry="9" transform="rotate(161 782 413)"/><ellipse cx="769" cy="412" rx="6" ry="3" transform="rotate(76 769 412)"/><ellipse cx="713" cy="410" rx="15" ry="7" transform="rotate(150 713 410)"/><ellipse cx="783" cy="400" rx="12" ry="7" transform="rotate(153 783 400)"/><ellipse cx="776" cy="404" rx="15" ry="9" transform="rotate(15 776 404)"/><ellipse cx="709" cy="413" rx="8" ry="6" transform="rotate(168 709 413)"/><ellipse cx="764" cy="435" rx="13" ry="8" transform="rotate(37 764 435)"/><ellipse cx="759" cy="438" rx="14" ry="9" transform="rotate(16 759 438)"/><ellipse cx="778" cy="402" rx="8" ry="6" transform="rotate(161 778 402)"/><ellipse cx="787" cy="411" rx="11" ry="8" transform="rotate(34 787 411)"/><ellipse cx="767" cy="426" rx="13" ry="8" transform="rotate(102 767 426)"/><ellipse cx="730" cy="428" rx="7" ry="4" transform="rotate(179 730 428)"/><ellipse cx="750" cy="424" rx="12" ry="10" transform="rotate(28 750 424)"/><ellipse cx="737" cy="414" rx="11" ry="5" transform="rotate(6 737 414)"/><ellipse cx="820" cy="419" rx="11" ry="8" transform="rotate(47 820 419)"/><ellipse cx="766" cy="409" rx="15" ry="12" transform="rotate(147 766 409)"/><ellipse cx="782" cy="418" rx="6" ry="3" transform="rotate(33 782 418)"/><ellipse cx="796" cy="446" rx="12" ry="10" transform="rotate(82 796 446)"/><ellipse cx="831" cy="440" rx="7" ry="5" transform="rotate(72 831 440)"/><ellipse cx="827" cy="457" rx="9" ry="6" transform="rotate(115 827 457)"/><ellipse cx="819" cy="442" rx="10" ry="6" transform="rotate(29 819 442)"/><ellipse cx="850" cy="440" rx="8" ry="4" transform="rotate(46 850 440)"/><ellipse cx="764" cy="457" rx="15" ry="12" transform="rotate(8 764 457)"/><ellipse cx="797" cy="434" rx="12" ry="11" transform="rotate(10 797 434)"/><ellipse cx="811" cy="454" rx="15" ry="12" transform="rotate(54 811 454)"/><ellipse cx="762" cy="439" rx="7" ry="4" transform="rotate(46 762 439)"/><ellipse cx="806" cy="451" rx="8" ry="4" transform="rotate(26 806 451)"/><ellipse cx="789" cy="444" rx="13" ry="7" transform="rotate(6 789 444)"/><ellipse cx="803" cy="443" rx="15" ry="13" transform="rotate(160 803 443)"/><ellipse cx="727" cy="400" rx="7" ry="6" transform="rotate(152 727 400)"/><ellipse cx="712" cy="390" rx="9" ry="8" transform="rotate(86 712 390)"/><ellipse cx="716" cy="393" rx="8" ry="4" transform="rotate(128 716 393)"/><ellipse cx="715" cy="394" rx="15" ry="8" transform="rotate(74 715 394)"/><ellipse cx="724" cy="399" rx="14" ry="9" transform="rotate(30 724 399)"/><ellipse cx="711" cy="395" rx="15" ry="8" transform="rotate(176 711 395)"/><ellipse cx="740" cy="399" rx="13" ry="7" transform="rotate(86 740 399)"/><ellipse cx="718" cy="400" rx="8" ry="5" transform="rotate(178 718 400)"/><ellipse cx="888" cy="270" rx="7" ry="4" transform="rotate(161 888 270)"/><ellipse cx="865" cy="276" rx="9" ry="8" transform="rotate(3 865 276)"/><ellipse cx="830" cy="261" rx="7" ry="3" transform="rotate(150 830 261)"/><ellipse cx="801" cy="269" rx="10" ry="9" transform="rotate(39 801 269)"/><ellipse cx="805" cy="267" rx="8" ry="6" transform="rotate(128 805 267)"/><ellipse cx="824" cy="274" rx="7" ry="5" transform="rotate(89 824 274)"/><ellipse cx="817" cy="277" rx="12" ry="9" transform="rotate(146 817 277)"/><ellipse cx="803" cy="266" rx="7" ry="5" transform="rotate(73 803 266)"/><ellipse cx="818" cy="266" rx="14" ry="8" transform="rotate(152 818 266)"/><ellipse cx="843" cy="260" rx="6" ry="5" transform="rotate(86 843 260)"/><ellipse cx="836" cy="264" rx="8" ry="6" transform="rotate(66 836 264)"/><ellipse cx="835" cy="279" rx="12" ry="5" transform="rotate(94 835 279)"/><ellipse cx="786" cy="274" rx="7" ry="6" transform="rotate(147 786 274)"/><ellipse cx="838" cy="263" rx="13" ry="8" transform="rotate(135 838 263)"/><ellipse cx="883" cy="326" rx="16" ry="10" transform="rotate(92 883 326)"/><ellipse cx="829" cy="311" rx="6" ry="5" transform="rotate(40 829 311)"/><ellipse cx="853" cy="321" rx="9" ry="7" transform="rotate(5 853 321)"/><ellipse cx="872" cy="328" rx="8" ry="4" transform="rotate(108 872 328)"/><ellipse cx="831" cy="307" rx="13" ry="6" transform="rotate(157 831 307)"/><ellipse cx="849" cy="311" rx="7" ry="5" transform="rotate(90 849 311)"/><ellipse cx="848" cy="323" rx="10" ry="5" transform="rotate(107 848 323)"/><ellipse cx="856" cy="309" rx="12" ry="9" transform="rotate(30 856 309)"/><ellipse cx="869" cy="284" rx="10" ry="6" transform="rotate(151 869 284)"/><ellipse cx="833" cy="313" rx="15" ry="12" transform="rotate(61 833 313)"/><ellipse cx="851" cy="329" rx="10" ry="9" transform="rotate(145 851 329)"/><ellipse cx="877" cy="301" rx="14" ry="7" transform="rotate(93 877 301)"/><ellipse cx="530" cy="390" rx="8" ry="5" transform="rotate(114 530 390)"/><ellipse cx="496" cy="402" rx="7" ry="4" transform="rotate(91 496 402)"/><ellipse cx="511" cy="396" rx="16" ry="13" transform="rotate(169 511 396)"/><ellipse cx="492" cy="385" rx="15" ry="13" transform="rotate(6 492 385)"/><ellipse cx="500" cy="390" rx="13" ry="7" transform="rotate(98 500 390)"/><ellipse cx="519" cy="390" rx="9" ry="6" transform="rotate(78 519 390)"/><ellipse cx="514" cy="393" rx="9" ry="7" transform="rotate(22 514 393)"/><ellipse cx="482" cy="385" rx="11" ry="6" transform="rotate(84 482 385)"/><ellipse cx="477" cy="454" rx="7" ry="4" transform="rotate(53 477 454)"/><ellipse cx="473" cy="458" rx="8" ry="4" transform="rotate(98 473 458)"/><ellipse cx="519" cy="446" rx="12" ry="9" transform="rotate(36 519 446)"/><ellipse cx="486" cy="447" rx="11" ry="8" transform="rotate(84 486 447)"/><ellipse cx="486" cy="460" rx="8" ry="6" transform="rotate(69 486 460)"/><ellipse cx="491" cy="454" rx="10" ry="8" transform="rotate(43 491 454)"/><ellipse cx="460" cy="452" rx="9" ry="8" transform="rotate(53 460 452)"/><ellipse cx="498" cy="451" rx="7" ry="6" transform="rotate(79 498 451)"/><ellipse cx="525" cy="458" rx="10" ry="8" transform="rotate(20 525 458)"/><ellipse cx="508" cy="474" rx="13" ry="7" transform="rotate(61 508 474)"/><ellipse cx="347" cy="435" rx="12" ry="10" transform="rotate(148 347 435)"/><ellipse cx="340" cy="418" rx="13" ry="11" transform="rotate(86 340 418)"/><ellipse cx="358" cy="401" rx="15" ry="8" transform="rotate(157 358 401)"/><ellipse cx="370" cy="421" rx="12" ry="8" transform="rotate(173 370 421)"/><ellipse cx="347" cy="414" rx="14" ry="12" transform="rotate(109 347 414)"/><ellipse cx="348" cy="429" rx="11" ry="8" transform="rotate(53 348 429)"/><ellipse cx="346" cy="430" rx="10" ry="6" transform="rotate(142 346 430)"/><ellipse cx="361" cy="408" rx="10" ry="6" transform="rotate(55 361 408)"/><ellipse cx="319" cy="359" rx="12" ry="6" transform="rotate(166 319 359)"/><ellipse cx="290" cy="365" rx="14" ry="13" transform="rotate(37 290 365)"/><ellipse cx="271" cy="359" rx="6" ry="3" transform="rotate(102 271 359)"/><ellipse cx="266" cy="350" rx="14" ry="10" transform="rotate(180 266 350)"/><ellipse cx="284" cy="349" rx="13" ry="8" transform="rotate(64 284 349)"/><ellipse cx="292" cy="345" rx="15" ry="12" transform="rotate(95 292 345)"/><ellipse cx="319" cy="355" rx="10" ry="7" transform="rotate(103 319 355)"/><ellipse cx="338" cy="334" rx="11" ry="7" transform="rotate(112 338 334)"/><ellipse cx="321" cy="350" rx="11" ry="9" transform="rotate(31 321 350)"/><ellipse cx="428" cy="332" rx="14" ry="10" transform="rotate(20 428 332)"/><ellipse cx="463" cy="288" rx="14" ry="13" transform="rotate(160 463 288)"/><ellipse cx="437" cy="303" rx="9" ry="6" transform="rotate(91 437 303)"/><ellipse cx="449" cy="307" rx="12" ry="9" transform="rotate(64 449 307)"/><ellipse cx="466" cy="299" rx="6" ry="4" transform="rotate(142 466 299)"/><ellipse cx="437" cy="318" rx="6" ry="4" transform="rotate(152 437 318)"/><ellipse cx="426" cy="290" rx="8" ry="5" transform="rotate(100 426 290)"/><ellipse cx="443" cy="318" rx="11" ry="10" transform="rotate(103 443 318)"/><ellipse cx="439" cy="303" rx="8" ry="6" transform="rotate(19 439 303)"/><ellipse cx="577" cy="332" rx="11" ry="9" transform="rotate(110 577 332)"/><ellipse cx="572" cy="328" rx="6" ry="5" transform="rotate(58 572 328)"/><ellipse cx="567" cy="325" rx="8" ry="4" transform="rotate(18 567 325)"/><ellipse cx="586" cy="325" rx="9" ry="6" transform="rotate(69 586 325)"/><ellipse cx="600" cy="334" rx="12" ry="10" transform="rotate(79 600 334)"/><ellipse cx="562" cy="327" rx="6" ry="6" transform="rotate(154 562 327)"/><ellipse cx="557" cy="342" rx="14" ry="8" transform="rotate(108 557 342)"/><ellipse cx="587" cy="328" rx="15" ry="9" transform="rotate(70 587 328)"/><ellipse cx="738" cy="326" rx="9" ry="8" transform="rotate(87 738 326)"/><ellipse cx="743" cy="326" rx="8" ry="5" transform="rotate(34 743 326)"/><ellipse cx="752" cy="333" rx="12" ry="6" transform="rotate(96 752 333)"/><ellipse cx="729" cy="343" rx="7" ry="3" transform="rotate(149 729 343)"/><ellipse cx="733" cy="343" rx="8" ry="5" transform="rotate(43 733 343)"/><ellipse cx="762" cy="339" rx="9" ry="5" transform="rotate(127 762 339)"/><ellipse cx="750" cy="340" rx="14" ry="7" transform="rotate(80 750 340)"/><ellipse cx="754" cy="316" rx="8" ry="5" transform="rotate(130 754 316)"/><ellipse cx="667" cy="343" rx="8" ry="7" transform="rotate(91 667 343)"/><ellipse cx="692" cy="338" rx="7" ry="6" transform="rotate(47 692 338)"/><ellipse cx="703" cy="324" rx="10" ry="5" transform="rotate(109 703 324)"/><ellipse cx="696" cy="345" rx="7" ry="5" transform="rotate(98 696 345)"/><ellipse cx="687" cy="343" rx="10" ry="7" transform="rotate(102 687 343)"/><ellipse cx="593" cy="279" rx="7" ry="4" transform="rotate(153 593 279)"/><ellipse cx="587" cy="283" rx="7" ry="5" transform="rotate(65 587 283)"/><ellipse cx="583" cy="270" rx="7" ry="4" transform="rotate(41 583 270)"/><ellipse cx="622" cy="281" rx="9" ry="6" transform="rotate(164 622 281)"/><ellipse cx="385" cy="425" rx="15" ry="7" transform="rotate(50 385 425)"/><ellipse cx="402" cy="442" rx="13" ry="8" transform="rotate(74 402 442)"/><ellipse cx="367" cy="430" rx="8" ry="7" transform="rotate(63 367 430)"/><ellipse cx="373" cy="437" rx="7" ry="6" transform="rotate(132 373 437)"/><ellipse cx="379" cy="438" rx="6" ry="3" transform="rotate(36 379 438)"/></g><path d="M416 335h2M503 402h2M711 434h2M638 371h1M488 295h2M346 406h1M526 331h0M589 274h0M648 306h0M729 436h2M268 403h2M814 287h1M446 294h1M340 400h2M566 375h0M283 434h2M844 253h1M794 427h2M666 337h2M476 443h1M580 340h1M870 357h1M510 376h0M499 442h2M398 307h1M682 299h2M796 326h1M439 263h2M839 280h2M366 418h0M335 458h0M704 454h2M788 264h2M842 389h1M819 284h0M800 467h2M369 346h2M425 445h0M313 414h1M544 454h2M801 412h1M486 373h2M691 339h2M472 336h2M384 385h0M817 261h2M693 366h0M565 430h2M808 442h2M757 278h0M458 366h1M333 409h1M461 260h2M717 256h1M659 414h2M757 443h1M554 343h2M747 440h0M662 400h2M312 453h0M838 367h2M544 456h2M611 370h1M841 396h1M449 333h0M458 294h0M488 340h2M665 284h0M737 271h0M382 436h1M218 359h2M493 384h1M322 367h2M516 429h0M769 402h2M322 414h0M428 347h1M471 463h2M449 458h0M489 429h2M813 280h1M762 311h0M217 390h0M241 433h2M440 324h2M262 356h2M685 351h1M633 309h2M872 318h1M811 428h0M552 297h2M536 392h2M469 273h0M761 391h0M862 428h1M825 309h2M765 430h2M778 438h1M864 420h0M674 383h1M683 306h1M397 306h1M805 426h2M857 270h2M710 417h0M257 265h0M333 273h2M660 312h2M653 290h2M854 331h2M382 331h1M344 299h2M330 301h0M700 267h1M706 369h2M459 450h1M813 269h1M803 263h1M249 453h1M750 395h1M811 463h2M812 302h2M723 279h1M345 420h2M396 266h2M687 469h2M492 356h0M698 326h2M747 271h2M748 425h2M635 304h1M420 320h2M729 274h1M382 398h1M687 421h2M834 387h2M505 269h2M304 274h1M286 430h1M330 415h1M760 441h2M391 331h1M772 280h2M708 400h2M734 423h1M380 273h2M799 398h1M496 384h1M555 354h1M690 416h1M712 408h2M377 294h2M416 286h0M424 362h1M528 294h0M482 329h2M740 381h2M579 339h2M746 256h1M639 356h2M736 308h1M820 370h2M321 403h0M749 283h1M343 416h0M503 337h2M875 406h0M822 374h1M831 386h1M357 395h2M481 460h2M306 431h1M667 415h2M484 287h1M470 371h1M665 408h1M858 320h1M856 340h2M866 275h0M384 282h1M489 371h1M615 290h1M377 285h2M683 345h0M363 338h2M481 403h0M834 430h1M399 362h2M535 412h1M675 311h0M856 428h0M743 413h1M778 442h1M861 291h2M342 421h2M666 388h2M370 380h0M553 277h1M783 304h0M869 262h2M731 437h2M507 470h1M216 271h1M433 437h2M767 333h1M332 433h2M232 325h2M295 286h2M796 329h2M465 378h0M581 383h2M661 461h1M248 305h0M539 306h1M738 410h0M732 471h2M488 456h0M585 442h2M836 256h0M477 361h1M476 417h0M513 444h2M398 284h2M810 303h0M257 455h2M228 333h0M315 300h0M605 410h0M413 311h2M279 396h2M777 323h1M477 253h0M330 465h1M732 380h1M477 393h2M876 295h0M603 379h1M464 359h2M809 305h1M835 255h2M258 323h1M778 376h1M756 286h2M275 398h2M794 341h1M402 414h1M788 392h2M653 318h1M635 331h1M489 328h2M607 370h1M588 296h1M571 368h2M400 349h0M756 351h2M639 273h2M734 409h2M869 253h1M472 421h2M239 421h0M611 412h1M292 416h1M356 276h0M381 378h1M587 356h2M803 258h1M339 408h0M628 441h2M527 456h2M610 431h2M656 379h2M796 343h1M423 278h2M748 467h0M502 374h1M461 465h2M477 350h1M405 353h2M744 441h1M699 277h1M432 384h2M638 326h1M734 285h2M325 293h1M667 335h2M564 296h2M502 266h2M580 323h1M290 260h1M760 380h2M777 276h2M641 401h0M868 260h0M504 456h2M330 304h1M243 434h0M614 423h2M595 276h2M428 340h2M743 426h0M720 404h0M786 418h1M802 427h0M275 454h2M832 262h2M711 338h2M539 438h2M645 260h1M428 308h2M771 374h2M697 433h1M768 462h0M672 408h1M781 431h1M704 468h1M817 323h2M867 457h2M570 462h2M491 459h1M858 455h1M826 348h1M457 254h1M430 320h1M659 251h1M661 390h2M568 255h0M738 425h0M774 434h2M740 278h2M377 322h1M662 389h0M815 267h1M327 304h1M803 395h1M440 460h1M358 376h2M362 407h2M745 309h2M511 329h1M419 274h0M566 336h1M858 313h2M542 426h1M398 448h1M595 441h1M248 443h0M804 350h1M247 269h2M295 274h2M726 365h2M335 379h2M363 420h1M438 348h1M737 401h1M824 354h1M836 358h0M830 419h2M611 395h1M769 383h2M522 430h2M435 283h2M686 352h2M727 318h2M470 372h0M717 436h1M569 360h2M858 312h1M750 389h1M408 470h1M801 260h1M492 339h2M830 317h1M648 345h0M441 451h0M794 387h1M796 315h2M354 394h0M599 327h2M772 428h2M304 417h1M475 343h2M577 462h1M316 439h1M256 343h2M399 387h1M297 329h1M808 375h1M689 323h2M606 308h2M702 399h1M858 296h1M737 379h0M730 399h1M805 313h0M778 454h2M416 265h0M317 278h0M666 277h1M797 428h2M823 420h0M348 326h0M865 282h2M710 430h1M241 372h0M744 325h2M551 419h1M692 402h2M489 325h1M619 395h1M600 382h2M697 398h2M629 369h2M807 458h0M498 396h0M303 429h1M878 261h1M385 347h1M624 254h1M810 449h1M628 404h1M467 280h2M752 426h2M293 300h1M849 456h0M438 456h1M749 262h0M376 413h1M710 382h2M514 278h1M366 367h2M771 310h2M699 342h1M519 257h2M779 301h2M301 300h1M662 446h0M420 280h2M704 426h2M526 439h2M838 422h1M694 409h0M782 444h1M697 434h1M468 361h2M302 437h0M838 288h2M450 399h1M829 403h0M502 339h2M598 421h0M644 400h1M740 337h1M846 271h2M746 410h1M693 360h1M757 406h1M628 453h0M637 299h0M276 263h0M384 257h2M673 346h1M702 345h2M786 448h2M712 371h2M292 393h2M325 351h0M408 350h2M719 294h1M301 449h2M704 423h1M716 408h2M668 269h0M779 280h2M608 340h2M343 430h0M499 383h1M799 416h1M675 316h2M600 310h1M328 398h2M285 300h1M730 356h2M877 324h2M848 451h1M526 348h0M809 261h1M868 271h1M768 395h2M794 291h2M297 381h1M695 413h0M656 390h2M504 285h1M370 411h1M828 286h2M668 308h1M367 430h2M474 283h0M856 440h1M874 327h1M686 308h0M757 453h0M746 419h1M766 344h1M768 454h2M494 279h0M685 374h2M823 328h1M574 260h0M580 346h2M363 462h1M580 395h2M790 270h2M824 346h1M758 400h0M390 293h1M797 332h1M235 374h2M859 332h2M402 316h2M555 328h0M710 332h2M426 269h1M626 448h2M604 339h1M757 251h2M703 400h2M582 318h1M686 294h1M683 349h2M722 337h2M300 304h2M704 272h2M499 338h2M441 394h2M522 428h1M747 382h1M354 403h1M515 469h2M693 352h0M528 392h0M433 331h1M588 276h0M469 339h2M787 312h0M818 450h2M365 406h1M365 317h2M752 336h0M462 391h2M338 262h1M583 292h2M702 401h1M476 454h2M555 364h2M855 399h2M216 326h1M301 390h0M567 290h2M267 406h0M804 341h0M798 256h0M508 438h1M842 260h2M336 420h2M716 265h2M254 303h2M837 325h2M370 360h2M388 426h2M362 397h0M567 286h0M768 293h0M361 296h2M789 441h2M567 323h2M806 328h1M744 351h2M496 433h1M682 385h2M735 381h0M776 254h2M395 305h0M725 296h1M480 349h0M748 278h1M416 338h2M768 447h2M349 287h1M469 352h1M507 266h0M830 295h1M392 343h0M218 399h2M622 318h1M251 285h1M777 437h2M780 304h2M686 252h1M500 310h2M787 453h0M822 381h0M400 377h1M495 394h2M849 306h0M441 460h2M761 265h1M462 325h2M859 456h2M317 265h2M504 284h1M777 251h1M646 398h2M858 270h1M649 439h1M232 345h1M800 283h0M599 341h0M670 348h1M570 359h1M811 447h1M847 281h1M520 254h1M416 262h0M575 427h0M551 439h1M625 309h0M423 296h1M424 313h2M487 414h1M814 288h1M838 357h1M702 390h1M616 374h2M803 455h1M858 299h0M624 273h1M386 434h0M545 313h1M563 292h1M855 313h2M674 259h1M585 391h0M360 292h2M413 367h2M511 257h0M409 331h0M868 348h1M596 330h0M798 319h1M463 337h0M792 323h2M521 295h1M862 254h0M240 406h0M435 354h1M784 318h1M731 316h1M314 421h0M874 265h2M349 404h1M495 290h2M673 273h2M795 284h0M672 315h2M280 266h2M708 322h1M754 422h2M498 301h1M357 408h2M481 338h0M713 362h1M657 390h2M536 372h0M743 424h2M562 272h1M692 417h2M856 266h0M817 253h1M346 469h2M824 423h1M516 281h2M523 373h1M525 415h0M347 292h2M414 318h2M779 300h1M537 442h0M784 447h2M581 382h2M682 339h0M346 287h0M750 285h2M376 449h2M614 265h2M767 334h2M624 252h2M493 404h0M617 468h1M370 286h2M776 355h0M530 394h1M382 380h2M668 399h1M662 340h1M489 415h2M529 445h2M716 328h0M677 394h0M742 334h1M314 322h1M254 342h1M507 403h2M374 439h0M597 317h2M677 283h2M237 396h1M301 330h1M385 296h2M743 300h2M730 375h1M446 460h1M502 264h1M818 459h0M275 405h1M776 471h0M762 335h1M826 467h1M433 304h1M874 317h1M629 314h1M341 417h2M852 321h2M786 323h0M689 269h2M800 270h2M550 271h2M754 364h0M280 429h0M722 469h2M854 348h2M577 459h1M713 314h1M589 440h1M674 335h2M416 290h2M573 447h2M741 300h2M676 330h1M273 319h1M811 438h0M724 269h1M427 302h0M518 451h0M370 327h1M744 367h1M341 352h2M649 384h2M831 443h1M857 271h2M854 274h2M349 382h1M333 392h0M391 269h0M431 351h0M491 312h1M722 256h2M324 455h2M853 383h2M376 317h1M290 428h2M325 411h1M291 410h1M301 352h0M301 438h1M338 380h1M812 335h2M450 364h0M569 281h1M582 435h0M364 321h1M497 279h1M371 427h2M722 433h0M411 259h1M487 295h0M608 285h2M836 351h2M229 273h1M341 370h1M331 289h2M506 377h0M481 276h2M712 417h0M411 375h0M798 375h2M339 387h0M675 435h1M400 279h1M444 428h2M336 446h1M719 288h0M503 279h2M602 367h0M762 428h0M628 338h2M751 345h2M403 294h1M705 411h1M489 352h1M420 324h1M707 322h1M617 289h2M388 456h1M661 308h0M491 441h1M685 277h2M807 426h1M722 322h1M512 269h2M491 260h1M525 395h2M584 390h1M742 414h1M431 299h2M875 414h2M728 424h2M501 445h0M586 321h2M759 301h0M730 388h1M475 309h2M676 325h2M328 368h1M785 373h0M388 346h2M683 352h1M406 359h1M603 418h1M831 459h1M767 277h1M548 437h1M584 274h1M767 300h2M870 276h2M478 296h0M617 262h2M865 386h1M237 326h2M585 471h2M776 325h0M418 324h2M741 397h1M495 361h1M714 407h1M345 436h1M574 278h1M826 336h2M763 262h2M704 408h1M495 313h1M756 257h1M868 284h2M634 364h1M491 281h2M487 377h1M733 285h2M548 271h1M754 332h1M737 346h2M657 426h1M747 307h1M761 294h1M492 376h0M824 425h2M364 341h1M233 303h1M399 281h0M682 323h1M597 424h1M737 360h2M596 254h0M760 318h2M324 279h2M432 448h0M698 455h2M561 471h0M788 309h1M787 316h1M720 380h1M428 289h0M771 305h1M761 265h2M786 312h1M424 388h1M846 285h1M437 333h2M877 466h1M487 309h0M867 302h2M789 352h1M861 258h1M439 361h1M795 277h2M690 330h2M486 334h2M561 438h1M866 288h2M472 466h1M714 374h0M272 465h2M802 274h0M575 351h1M581 338h0M821 302h2M336 297h0M415 277h2M743 329h0M758 270h1M810 366h2M393 366h1M804 431h0M694 254h2M669 343h1M789 302h2M618 288h2M567 411h0M499 274h1M338 428h1M665 468h1M741 266h0M540 453h1M630 350h1M242 321h1M398 332h2M402 409h1M479 331h0M710 264h2M404 311h2M342 442h2M729 435h2M622 397h0M576 259h1M833 464h2M384 433h1M448 467h2M480 394h1M699 377h0M761 408h2M442 318h1M397 330h2M683 341h2M770 394h1M816 456h1M431 424h1M463 292h1M652 350h2M774 391h2M745 274h0M701 470h2M814 392h1M571 314h1M507 395h1M453 307h0M610 328h2M781 453h2M680 412h1M615 445h0M740 285h2M685 387h1M388 361h1M672 423h1M622 325h1M783 400h2M420 337h2M766 318h1M435 290h0M810 330h2M568 380h1M706 390h2M857 318h2M516 433h2M805 465h2M825 370h2M399 292h1M855 280h0M645 280h2M713 464h1M620 361h2M265 433h2M338 365h2M333 412h0M597 380h2M502 467h1M876 280h2M291 275h2M502 295h0M521 330h1M416 328h1M408 382h1M582 469h1M769 252h1M743 405h0M615 341h0M706 390h1M877 316h2M417 344h1M624 421h1M386 362h1M666 379h1M794 440h1M713 390h2M645 372h1M583 388h1M839 278h0M860 283h1M585 251h0M662 450h0M702 416h0M795 336h1M783 280h1M445 443h2M371 271h1M751 384h2M856 454h1M542 322h2M864 396h1M658 426h0M719 257h2M865 309h0M391 428h2M621 314h1M763 467h1M507 470h2M599 334h2M472 340h2M764 354h2M748 452h1M728 422h1M780 337h2M626 375h2M863 256h1M264 464h2M362 448h0M762 381h1M802 385h0M386 321h2M658 398h1M293 437h2M765 468h1M427 380h0M661 401h1M848 315h2M784 385h1M523 455h2M289 414h2M528 298h2M739 424h1M554 413h0M603 346h0M638 402h2M605 372h1M593 392h2M738 315h2M584 377h1M555 288h2M866 306h0M492 281h2M259 311h2M582 408h1M528 290h1M767 446h1M812 455h2M800 452h1M485 441h2M646 336h1M720 445h0M461 280h2M633 356h0M723 253h0M855 451h2M848 330h1M312 323h2M627 341h0M867 262h1M457 423h1M321 378h1M680 403h2M572 295h2M359 405h2M567 296h1M316 450h0M531 266h1M824 370h1M343 359h2M237 305h2M704 269h2M591 406h1M330 386h0M823 423h2M783 427h0M824 253h2M271 379h2M604 444h2M469 350h1M513 459h2M796 281h1M601 289h2M560 322h1M408 347h1M426 335h1M842 367h0M282 258h2M689 377h2M816 321h1M504 424h1M784 416h1M365 268h1M612 308h1M614 330h2M404 363h1M643 261h2M651 447h2M790 299h1M642 260h2M705 364h0M472 358h2M804 359h1M247 423h2M733 388h2M411 388h2M809 332h2M569 423h1M338 320h1M407 453h1M842 357h1M452 283h2M758 339h1M466 340h1M637 379h2M541 386h0M607 315h0M304 299h1M610 316h1M711 417h2M704 389h2M844 259h0M759 268h1M421 334h1M747 353h2M315 396h2M514 259h0M400 457h1M568 317h2M342 435h1M576 398h0M236 288h1M518 273h0M336 445h1M491 468h0M451 256h0M701 377h2M525 447h2M654 349h1M487 260h2M409 450h1M706 428h0M839 448h2M553 292h0M340 449h1M739 390h1M766 385h2M479 459h1M609 297h2M818 264h1M770 284h1M736 378h0M856 361h0M582 319h1M823 299h1M803 343h1M800 292h1M850 332h2M707 385h1M695 326h0M429 289h1M577 385h2M708 325h2M765 455h0M732 296h1M788 398h0M227 418h2M476 386h0M626 378h2M554 319h2M822 317h1M807 259h0M322 391h2M850 312h2M233 282h1M826 368h0M801 441h1M495 394h1M791 265h0M569 274h1M813 313h2M845 305h0M801 277h0M825 405h2M560 423h1M833 452h2M874 360h0M400 368h0M728 404h1M757 298h2M779 457h2M835 405h0M852 254h2M277 344h1M869 311h2M802 314h2M838 451h1M794 331h2M701 329h0M499 437h2M420 311h2M475 293h1M563 283h0M468 264h0M505 372h0M468 365h1M254 315h2M807 298h2M774 406h2M472 459h2M785 287h2M300 422h2M685 423h1M773 368h1M872 253h1M505 350h0M402 347h1M669 264h2M736 389h1M513 385h1M410 320h2M364 360h1M226 262h1M385 416h1M318 411h1M486 345h2M773 407h2M481 275h1M794 293h2M735 281h1M814 292h0M238 321h1M232 403h1M755 385h2M464 431h0M763 402h1M722 392h2M643 350h2M605 326h0M762 287h1M771 303h2M531 298h1M577 342h0M437 292h0M339 416h0M692 284h1M872 343h1M842 301h2M507 424h0M745 379h1M572 275h1M382 371h1M823 282h1M826 341h1M760 262h1M307 288h0M505 294h1M561 364h1M650 284h0M363 446h2M853 321h1M434 271h1M779 266h1M604 312h2M729 404h1M776 427h1M511 469h1M804 298h1M469 436h1M480 328h1M829 296h1M237 276h2M603 400h2M334 307h2M486 340h1M461 295h1M666 334h2M734 401h1M300 308h2M499 391h0M240 426h2M590 335h1M690 323h1M827 448h1M616 339h1M360 393h2M449 269h1M466 334h2M820 343h1M483 382h0M765 386h1M519 302h2M248 327h1M269 273h2M322 364h1M454 430h0M454 329h0M333 471h1M822 258h1M274 370h2M730 383h0M839 311h1M496 384h2M646 307h2M500 342h1M582 403h2M301 379h1M802 332h0M735 360h1M451 355h1M514 259h1M357 261h1M274 417h0M787 390h1M835 280h0M299 417h2M515 394h1M753 275h2M878 251h1M544 296h2M604 350h2M670 452h1M610 434h1M822 384h2M690 353h1M705 331h0M506 390h1M621 404h2M401 347h1M436 290h1M627 394h1M423 309h0M737 311h1M629 331h2M428 435h0M446 440h2M438 334h1M873 260h0M571 332h1M621 417h2M549 317h2M418 376h0M235 384h1M809 437h2M344 393h1M741 367h0M571 280h2M343 280h2M637 280h1M728 415h1M308 310h0M565 434h2M420 294h1M318 430h0M537 405h2M457 359h2M736 332h2M299 416h1M644 448h0M853 424h1M444 292h1M427 334h1M459 438h2M603 407h1M636 353h0M505 396h1M216 317h1M367 383h2M676 355h2M348 439h0M661 376h0M857 305h0M479 311h1M747 385h2M598 273h0M233 363h1M698 358h2M216 354h0M832 465h1M516 458h1M849 414h2M711 348h1M738 329h1M762 267h2M492 271h2M491 395h1M777 331h1M819 272h2M780 322h1M698 357h2M355 391h1M330 378h2M223 305h0M445 421h1M842 438h0M736 323h1M326 467h1M442 392h2M516 275h2M476 298h1M488 358h0M265 425h1M639 334h0M376 278h1M780 352h1M372 306h2M780 405h1M793 407h0M760 420h2M810 421h2M830 321h2M566 423h0M596 259h2M448 349h2M340 408h2M562 464h1M608 421h0M562 254h1M448 352h0M774 436h1M310 276h1M448 450h2M850 443h2M514 395h2M331 442h1M709 404h0M798 432h2M639 331h0M709 254h1M629 430h0M625 460h1M876 337h1M402 367h1M775 339h2M509 343h0M466 383h1M340 433h2M363 269h2M650 457h2M595 393h2M859 333h1M632 390h2M730 404h2M690 405h1M549 349h2M845 289h1M582 368h1M756 301h1M305 347h2M639 308h2M734 405h0M474 304h0M475 291h1M392 304h2M772 284h2M721 365h1M742 377h1M289 442h1M458 456h0M805 435h1M553 413h2M270 364h2M701 363h1M528 393h1M831 303h1M231 419h1M638 388h2M454 321h2M390 406h0M769 338h1M781 414h1M421 363h1M775 402h1M309 435h2M826 458h2M681 319h1M347 423h1M323 427h2M836 329h1M562 460h2M677 381h0M572 399h1M870 424h0M841 367h1M768 325h0M646 393h1M370 269h2M375 401h2M370 275h2M476 285h0M692 254h1M567 414h1M640 350h2M434 297h1M562 284h1M831 329h1M840 334h2M407 269h1M449 457h2M794 410h0M796 267h2M404 358h0M588 262h0M392 271h2M484 451h2M565 306h1M472 443h2M804 394h1M351 303h0M726 358h2M519 276h2M724 329h1M657 303h1M468 308h2M745 386h0M785 285h2M509 291h2M291 419h2M509 394h1M796 462h1M847 259h2M756 420h0M689 381h2M842 322h2M506 303h2M862 250h1M742 262h1M787 278h0M482 312h2M422 339h0M809 376h1M265 411h0M468 405h2M694 328h2M441 369h0M306 301h1M541 461h1M765 432h1M371 468h2M642 359h0M862 362h0M825 465h0M677 253h2M856 347h1M756 415h0M418 369h2M431 288h0M735 419h1M760 320h1M761 312h1M818 369h0M790 387h0M587 367h0M444 412h2M755 314h2M555 297h2M566 430h2M669 275h1M778 270h1M822 305h1M653 275h0M826 454h1M744 289h2M414 349h1M677 341h2M775 291h1M285 449h2M721 428h2M376 364h2M472 411h1M694 270h1M795 427h1M738 326h0M418 257h1M720 377h2M818 409h1M761 311h2M641 343h2M497 331h2M518 405h1M689 444h2M681 411h0M671 314h2M620 331h1M459 455h2M336 418h1M624 254h2M373 470h2M403 293h2M855 435h2M392 392h2M600 454h2M266 299h2M341 454h2M705 279h2M430 429h2M319 300h0M621 313h2M616 263h1M822 263h2M707 382h2M318 337h0M870 313h0M402 309h2M374 387h1M624 397h0M668 395h1M810 364h1M827 291h2M874 307h2M643 426h2M347 313h1M785 313h0M628 318h1M559 460h1M415 341h0M842 299h1M279 403h0M401 334h0M399 381h2M785 419h1M868 337h2M725 366h1M653 406h1M722 354h2M720 265h1M734 425h0M844 470h1M757 403h0M727 288h2M343 285h1M461 450h0M826 253h1M699 418h2M698 383h0M280 328h2M292 375h0M804 279h2M253 464h2M830 357h1M738 459h2M615 257h1M789 444h2M713 277h1M767 278h1M502 464h1M803 275h2M858 266h2M429 254h1M616 386h2M595 331h2M763 312h0M243 310h2M851 443h2M583 397h1M822 287h1M645 398h1M812 409h2M617 456h2M599 362h1M711 434h2M497 348h1M822 253h2M606 338h2M434 259h1M753 413h1M386 346h0M338 428h2M812 452h0M525 413h0M719 415h0M415 285h2M708 365h2M431 374h2M575 377h1M851 265h2M243 418h1M694 432h1M385 386h2M685 369h2M654 286h2M290 325h2M813 452h2M569 383h0M388 365h2M356 384h1M459 366h0M578 428h2M411 294h1M806 350h1M464 299h2M756 452h1M764 326h1M412 352h2M803 266h1M618 413h2M799 406h0M786 439h2M812 301h0M755 276h0M404 452h1M807 338h2M784 392h2M411 447h1M796 430h0M566 355h2M637 335h2M375 382h2M836 440h0M764 365h2M834 278h0M348 425h2M732 350h0M735 286h2M329 319h1M399 451h1M802 356h1M304 335h1M716 399h1M428 255h2M818 348h1M685 298h1M652 397h2M443 368h1M335 383h0M694 328h2M221 323h2M816 277h0M509 266h2M456 317h1M485 416h1M262 296h2M738 340h2M773 397h2M834 365h0M721 383h1M395 310h0M369 406h1M661 404h1M289 402h1M270 298h1M534 295h2M688 367h2M291 396h1M662 358h2M618 321h2M767 261h0M339 378h1M710 289h2M822 387h2M570 300h2M821 347h2M518 278h1M641 255h0M801 307h1M742 275h1M836 354h0M396 292h2M815 338h2M648 389h0M796 386h0M762 413h2M763 312h0M805 390h0M396 369h0M227 300h2M327 465h2M286 326h0M628 409h1M856 276h0M833 435h1M217 375h1M272 407h2M427 384h2M797 267h2M330 439h1M548 294h2M305 336h1M561 421h2M483 335h2M686 259h1M745 459h1M490 346h2M733 323h2M323 401h1M783 363h2M665 467h0M585 454h1M811 430h0M491 390h2M383 277h1M805 263h0M558 374h1M338 398h2M855 252h1M466 291h1M773 367h1M411 365h1M615 383h1M611 325h1M786 454h1M286 335h2M475 267h1M756 258h2M560 366h2M809 467h2M873 318h1M408 339h1M825 435h2M851 375h0M568 434h1M633 257h0M490 454h1M542 465h1M292 446h2M522 461h0M837 313h2M554 345h2M802 438h2M592 306h1M560 252h1M817 350h1M325 423h1M446 268h0M721 397h2M470 360h0M406 324h2M421 293h2M732 412h2M276 288h1M274 444h1M852 432h2M689 460h0M380 289h1M383 369h1M605 397h1M505 317h1M719 429h1M867 379h1M855 335h2M399 432h0M706 389h1M533 263h2M233 338h2M678 418h0M399 445h2M498 449h1M838 382h0M382 286h1M842 433h1M706 284h0M295 290h2M785 286h1M615 405h0M715 384h1M378 368h1M784 284h1M794 452h0M254 348h1M267 352h0M815 282h0M665 264h1M668 251h1M745 358h1M528 399h2M804 313h1M714 396h1M660 392h1M804 289h2M618 332h1M656 405h0M480 421h1M497 455h2M625 375h2M818 399h1M357 377h1M722 426h1M769 283h1M614 419h2M698 291h2M691 369h1M711 309h2M751 368h2M409 375h1M656 324h0M743 396h1M820 269h2M658 357h0M464 265h2M872 290h1M365 284h2M407 470h2M396 363h2M357 365h1M287 310h2M490 330h2M786 305h0M846 363h1M831 273h2M436 278h1M232 456h2M354 305h2M459 317h1M518 303h2M692 395h2M471 447h0M449 363h1M793 301h2M403 438h2M730 377h2M370 365h2M556 363h1M664 329h1M655 354h1M461 282h1M489 346h1M845 271h0M703 334h1M863 459h2M758 375h0M482 298h2M681 396h1M472 400h1M503 405h1M548 464h1M553 445h0M714 470h0M696 318h2M790 404h2M565 283h0M452 317h1M849 391h0M777 273h0M338 255h0M393 455h1M378 308h1M695 411h1M686 301h0M362 423h0M567 458h1M799 316h2M845 273h1M365 391h0M546 320h1M312 427h0M305 309h1M246 313h2M718 348h2M710 391h2M389 406h1M805 396h2M791 328h1M374 324h1M420 375h2M784 394h2M626 341h1M538 267h1M796 331h0M539 447h1M269 453h1M875 263h0M542 314h2M709 278h0M395 333h2M453 393h0M463 261h1M539 300h1M450 365h2M830 297h2M852 470h0M807 290h2M745 372h2M448 454h2M658 328h1M371 258h1M622 414h2M480 302h2M776 294h2M549 359h0M534 284h2M467 341h2M516 455h2M707 315h1M351 404h2M746 366h1M736 439h2M293 405h2M416 258h1M716 312h2M400 289h0M509 327h1M435 401h2M369 372h1M637 294h2M847 293h0M849 303h2M459 355h1M515 320h1M668 324h1M762 286h2M554 274h1M689 411h1M566 291h2M476 468h1M424 455h1M511 399h0M743 379h1M563 376h0M449 388h1M425 278h2M767 357h1M683 342h2M448 289h1M392 390h1M728 387h1M475 383h2M718 316h0M730 277h2M525 455h2M561 297h1M823 352h2M477 434h2M392 332h1M852 378h1M640 368h2M843 392h1M760 378h1M717 358h0M811 350h2M407 380h0M822 301h1M723 431h0M621 338h1M517 395h0M801 424h2M730 353h1M614 344h2M689 462h2M716 367h2M471 451h1M554 279h2M479 463h2M802 251h0M723 409h1M436 301h1M587 390h2M351 357h1M718 263h1M646 438h1M523 444h1M864 470h0M743 448h1M459 355h1M344 342h0M714 408h2M666 304h2M660 335h2M356 274h2M304 410h2M530 262h2M796 358h2M695 402h1M690 372h1M410 361h1M616 333h1M866 260h2M332 468h0M469 344h2M584 366h2M617 469h2M850 314h0M350 418h1M813 341h1M758 406h1M753 361h1M625 398h2M637 390h2M740 411h1M695 439h2M763 296h1M875 252h0M794 271h2M588 402h2M665 389h2M626 403h2M663 275h2M682 331h2M844 424h1M834 378h1M339 422h0M809 471h1M746 437h1M436 335h1M426 350h1M264 335h2M698 325h0M759 261h0M758 319h2M526 414h1M878 434h0M352 344h2M336 402h2M689 424h2M867 284h0M778 340h2M729 259h2M816 272h2M713 353h2M321 402h2M317 397h1M593 374h2M814 442h0M467 275h1M739 294h2M778 310h1M458 320h2M477 288h1M270 437h1M582 381h1M275 414h2M369 395h2M635 335h2M400 320h0M487 338h1M636 454h2M718 299h1M299 345h0M357 449h1M602 396h1M588 331h0M656 400h0M732 410h2M865 266h2M453 328h1M284 415h2M850 309h0M451 431h2M666 296h2M637 314h2M311 391h2M683 399h2M342 430h2M871 273h1M695 335h1M303 426h1M237 385h2M278 425h2M836 440h1M549 298h1M587 459h2M359 313h1M793 363h2M539 464h2M820 419h2M735 256h1M679 431h2M806 345h1M618 316h2M583 470h0M738 406h2M417 292h1M403 360h1M669 341h2M789 427h1M457 448h0M626 408h1M802 319h1M471 461h1M824 330h2M477 275h1M621 457h2M782 290h0M662 268h0M810 307h1M692 273h2M294 458h2M451 335h1M291 270h2M500 377h1M353 334h1M469 345h1M467 252h2M541 289h2M727 379h1M378 394h0M577 389h0M360 422h1M833 299h0M703 348h2M874 370h1M726 327h1M433 427h2M839 469h2M344 458h2M696 322h2M817 340h1M264 303h2M655 320h1M771 281h2M634 300h2M713 315h0M702 321h1M807 348h2M671 430h1M787 257h2M729 357h1M730 395h1M768 357h2M391 313h2M471 335h2M357 430h2M587 314h1M318 300h1M465 315h1M550 385h2M508 347h0M578 426h2M797 284h2M695 299h2M738 329h1M640 425h1M765 301h0M311 344h0M736 429h1M257 416h0M622 427h2M753 393h0M504 434h1M417 312h1M755 455h1M219 332h2M793 440h1M713 332h1M531 317h2M816 270h1M708 386h1M473 253h0M495 261h0M619 255h2M731 271h2M509 360h2M760 395h1M847 293h2M860 309h2M413 387h2M825 418h0M365 338h1M601 403h0M852 315h2M647 396h0M530 368h1M735 419h2M440 361h2M852 298h1M715 252h0M510 420h0M619 391h2M248 452h1M762 284h2M474 415h0M736 379h0M261 322h2M392 419h0M479 354h1M659 381h1M746 307h1M513 274h1M506 386h2M836 304h1M376 332h0M624 464h2M401 308h2M815 397h2M429 379h2M675 384h2M319 319h0M302 324h1M811 297h2M412 455h0M828 463h2M413 357h1M477 327h2M713 391h1M300 447h0M509 461h1M780 363h1M797 454h2M400 293h1M787 425h2M485 259h1M650 394h2M522 362h2M753 322h1M300 327h1M759 402h1M793 389h1M338 322h0M421 282h2M383 401h1M443 281h2M504 266h2M663 320h1M746 278h1M262 351h1M837 266h1M492 349h1M466 352h2M796 353h2M784 325h1M323 427h1M545 458h2M618 334h2M529 292h1M779 390h2M446 448h2M395 346h1M870 444h0M611 299h2M279 415h1M361 424h2M395 293h2M867 419h2M548 275h2M429 369h2M606 342h1M637 261h0M234 391h0M855 426h2M552 442h0M228 251h2M795 265h1M766 270h1M486 395h1M412 345h2M631 400h0M677 359h0M847 322h1M496 328h0M753 251h1M716 445h1M231 315h1M542 434h1M593 332h0M397 451h1M456 433h2M431 289h2" stroke="#c3dba9" stroke-width="1.4" stroke-linecap="round" opacity="0.7" fill="none"/><path d="M334 436h1M821 416h1M300 419h2M659 303h1M579 419h1M873 416h2M766 303h2M737 344h1M494 325h2M753 264h1M595 275h0M372 333h1M326 415h2M762 278h2M869 260h1M396 361h1M850 470h2M793 422h1M837 401h2M415 319h2M788 394h2M870 263h1M277 285h0M755 344h1M651 383h1M286 413h1M503 302h2M413 470h0M787 443h2M668 383h2M468 254h0M584 262h1M670 285h0M769 315h1M475 258h1M577 271h1M261 374h2M610 352h0M293 354h1M593 403h0M867 260h2M713 391h2M409 270h1M653 429h0M509 462h2M673 312h2M741 327h2M731 320h1M338 443h2M771 284h1M798 279h2M603 339h1M682 294h2M569 266h2M684 348h0M339 429h0M760 361h2M408 338h0M770 409h2M803 454h2M571 464h2M871 289h2M607 395h1M743 313h1M528 443h2M583 266h1M618 307h2M384 303h2M331 357h0M769 392h2M605 294h2M858 283h1M587 262h1M590 281h0M388 285h2M521 294h1M818 279h1M767 288h1M616 314h2M716 430h1M366 266h0M873 346h2M349 317h0M456 448h2M252 278h2M289 286h2M448 413h2M508 411h2M840 471h2M853 455h1M393 332h1M833 310h1M746 286h1M437 420h2M777 394h0M551 325h2M874 324h1M598 466h2M290 322h2M505 251h2M690 276h0M844 376h1M439 333h1M338 368h2M464 315h2M418 330h1M370 424h2M466 253h1M557 467h1M460 276h1M454 339h2M386 393h0M621 441h1M709 434h1M551 424h1M754 271h1M418 411h2M461 357h2M653 374h1M864 253h2M527 279h2M577 429h0M510 453h2M544 301h1M840 307h1M706 394h1M771 304h2M659 288h1M438 273h1M383 256h1M580 430h1M461 273h2M731 349h1M746 383h2M720 387h2M873 257h2M566 384h2M732 461h1M444 428h2M323 436h2M763 272h2M768 454h2M418 272h1M464 278h2M463 434h1M759 317h2M610 395h0M837 313h1M768 328h0M735 410h1M849 269h2M699 418h1M650 381h1M770 304h2M812 364h1M742 341h1M788 454h2M440 321h2M854 259h1M734 401h1M606 433h2M390 374h2M278 454h1M785 256h0M499 251h0M800 289h1M865 297h0M515 453h2M461 279h1M496 292h2M475 458h2M547 258h2M287 423h1M218 343h2M830 463h1M438 342h2M700 387h2M833 288h0M566 256h2M268 421h1M450 409h1M293 298h2M588 385h2M633 314h1M682 252h2M625 444h0M836 359h0M730 261h1M656 366h0M473 344h2M528 466h0M587 414h2M472 439h1M520 462h1M448 410h1M685 315h2M788 333h1M635 257h1M773 334h1M237 413h0M359 340h1M808 433h1M449 272h2M784 292h2M370 383h2M618 291h2M238 419h0M764 270h2M373 404h1M776 405h1M514 461h0M850 400h1M304 447h2M551 438h2M618 338h1M716 368h1M692 297h1M490 328h2M648 341h1M797 315h0M779 406h0M810 330h2M483 447h1M640 452h0M563 257h1M852 422h1M754 413h0M730 283h2M346 425h2M829 253h1M494 253h1M352 307h1M248 358h1M731 446h1M397 334h1M226 279h1M802 266h1M589 403h2M856 467h0M677 419h0M498 348h2M567 336h1M831 265h2M862 451h1M586 392h2M581 379h2M695 280h0M415 358h1M728 276h1M794 321h1M320 439h2M832 334h2M343 271h0M657 271h1M836 312h2M772 416h2M293 396h2M677 269h1M347 389h0M822 289h2M566 436h1M733 332h2M491 449h0M328 315h2M721 312h2M685 313h1M258 451h1M715 337h1M821 286h2M524 425h1M258 429h1M509 257h1M814 273h1M389 368h1M458 401h1M727 400h1M229 339h1M569 323h0M713 320h2M766 373h2M725 366h0M592 374h2M376 422h1M377 318h0M459 381h2M826 398h2M646 371h1M618 343h0M307 404h1M317 301h2M421 305h1M727 302h0M780 376h2M675 331h1M326 300h2M796 272h2M448 302h0M520 456h2M616 260h2M567 309h2M656 263h1M744 313h0M750 301h0M653 382h1M469 268h2M866 298h2M287 402h0M599 396h1M853 346h0M242 420h1M693 345h0M691 304h1M868 470h0M815 280h2M645 359h1M500 289h1M547 274h0M636 259h2M301 295h1M784 411h2M858 304h2M635 373h2M821 415h1M745 413h0M815 259h1M697 391h1M542 255h2M572 354h1M654 316h2M365 343h1M283 387h2M512 297h1M810 331h2M622 443h2M800 469h1M729 326h2M821 354h2M687 469h2M739 266h0M843 354h2M606 407h1M847 255h2M424 448h0M719 282h2M743 303h1M598 309h1M443 276h1M478 367h1M493 322h2M725 284h0M723 327h2M672 319h1M447 354h2M497 376h2M806 387h1M684 333h1M615 335h1M507 334h2M344 394h2M480 253h2M875 277h1M320 404h0M741 270h0M775 314h2M819 450h2M792 451h2M521 458h1M366 348h2M790 394h2M241 344h1M656 395h1M706 376h2M856 347h1M269 369h2M602 307h2M284 390h0M877 372h2M724 381h2M352 301h2M315 274h1M524 395h0M793 356h0M674 280h2M875 436h2M811 317h0M637 283h2M433 293h0M322 346h1M636 297h2M500 363h0M700 333h2M426 428h0M742 366h1M607 254h1M632 402h2M702 331h1M677 347h0M796 425h0M644 387h0M519 269h1M353 460h1M850 316h1M804 302h1M484 379h0M740 344h1M469 254h0M577 405h1M221 364h0M220 317h1M484 355h2M242 296h2M765 352h2M741 251h2M862 467h1M494 290h1M417 321h1M848 323h1M754 356h1M491 350h2M708 263h0M724 271h2M484 459h1M482 423h2M731 391h2M345 442h2M876 297h2M757 264h1M216 457h0M698 312h1M612 409h2M843 416h0M284 441h0M303 422h1M709 469h2M766 306h1M837 323h1M378 330h0M615 309h0M304 257h2M739 380h1M731 361h2M727 399h2M777 334h1M744 418h2M870 325h2M561 438h1M357 389h2M872 320h1M849 373h1M843 332h2M421 360h2M759 419h1M849 351h1M830 298h2M744 296h2M238 282h1M395 327h1M378 417h0M740 335h1M386 435h0M473 455h2M252 343h1M847 383h0M599 284h2M763 414h1M710 425h2M774 459h2M641 299h1M638 284h2M812 292h2M249 363h1M849 289h1M558 451h1M694 404h1M758 446h0M853 294h1M695 345h2M714 453h1M392 340h0M688 321h0M436 322h1M220 331h1M388 369h2M669 421h1M326 377h2M595 252h2M535 461h2M837 466h2M699 258h2M428 316h0M809 337h1M855 336h0M643 360h1M771 437h1M626 413h1M258 352h1M749 387h0M727 345h0M662 400h0M824 433h1M818 328h2M806 374h1M365 382h2M840 312h1M673 373h0M747 273h2M415 360h2M521 462h1M368 427h2M832 345h2M649 318h1M749 451h1M796 326h1M562 306h0M532 456h1M779 308h0M342 314h2M392 350h2M557 333h0M718 387h2M541 284h2M504 297h1M874 305h2M371 350h2M621 407h2M863 275h1M783 380h2M605 471h2M855 259h1M619 433h2M620 437h1M805 311h2M726 310h2M668 323h1M548 281h1M600 274h0M720 419h2M870 304h2M425 465h2M545 291h2M801 374h1M806 441h2M588 275h2M480 466h2M351 435h0M612 385h1M392 439h2M727 440h2M493 269h0M476 439h1M411 305h0M796 286h1M339 449h1M734 401h2M402 373h1M686 317h0M433 439h2M848 325h1M872 268h1M459 329h0M391 373h1M830 281h1M869 275h2M466 351h2M860 308h1M625 432h2M236 407h0M859 262h0M815 419h1M757 384h2M331 307h2M596 441h2M774 369h2M345 426h2M804 262h2M609 399h1M559 350h1M791 314h1M658 287h2M868 463h0M837 337h1M692 322h2M862 302h1M369 356h0M240 343h1M251 337h2M435 466h1M774 277h1M463 444h2M668 277h0M648 357h0M462 357h2M731 376h2M730 347h2M604 324h2M478 364h2M331 399h0M469 322h2M564 296h0M602 375h2M272 320h2M721 282h2M795 307h0M718 320h1M746 463h2M874 316h2M801 358h2M794 334h2M259 333h0M617 263h2M760 404h2M471 404h2M625 392h1M806 267h1M323 450h1M772 270h1M470 469h1M578 390h2M393 416h0M587 255h1M705 262h1M801 449h2M609 316h2M776 437h0M283 462h2M720 273h2M675 327h1M463 270h0M833 281h0M810 272h1M617 340h1M258 332h0M768 380h1M312 287h1M575 376h1M799 287h1M438 281h0M387 300h0M865 334h0M283 290h2M705 424h1M621 358h2M770 289h0M368 301h2M664 263h2M305 313h0M451 278h0M534 282h2M437 364h2M623 384h1M366 407h1M474 364h2M797 302h0M684 321h2M486 378h1M333 419h2M877 293h2M664 274h2M774 424h1M761 390h1M723 414h1M804 365h2M654 299h1M867 258h1M267 373h2M619 326h1M721 277h1M695 396h1M817 336h2M566 320h0M400 364h1M323 302h1M497 321h1M661 414h2M545 443h2M489 329h1M609 304h2M439 304h1M849 328h2M821 350h0M784 390h1M572 324h1M380 356h2M672 304h1M491 406h0M316 413h2M702 350h0M771 389h1M809 451h2M540 409h0M694 394h1M369 467h1M719 333h0M579 380h1M553 341h1M495 380h2M432 366h2M811 277h1M451 370h2M251 319h0M872 266h2M371 318h2M420 284h1M408 359h1M791 336h0M785 267h1M351 405h2M866 262h2M789 429h1M492 470h0M697 341h1M547 364h1M657 302h2M367 289h0M414 315h0M826 439h0M681 343h0M803 338h1M675 392h1M622 386h2M321 409h1M853 462h2M419 351h1M446 314h1M371 372h2M644 405h0M785 334h1M819 405h2M489 442h0M748 259h2M704 407h1M281 397h1M496 271h2M428 326h2M362 427h0M348 411h0M618 357h0M362 452h2M444 334h0M376 358h2M525 272h1M493 389h1M565 419h1M345 277h0M312 306h1M740 442h1M793 285h0M378 374h2M407 395h1M347 271h0M569 438h0M541 268h2M767 437h0M530 284h1M722 333h1M795 256h2M589 274h1M576 350h2M829 256h0M536 258h2M808 370h2M811 306h2M686 334h0M557 394h1M309 405h2M842 376h2M731 261h1M668 270h1M743 392h1M309 395h2M871 401h2M350 430h0M820 445h1M389 365h2M486 253h0M677 336h1M697 301h1M453 315h0M707 318h0M615 454h1M465 375h1M725 351h0M814 279h1M461 455h0M738 268h2M696 317h2M856 299h2M475 293h0M423 368h1M359 380h1M610 397h0M721 386h2M371 391h2M807 427h2M412 458h2M711 304h2M831 270h2M858 390h2M539 296h2M772 391h2M419 405h0M644 403h1M852 459h2M774 401h1M351 262h2M686 298h0M525 463h0M561 450h2M800 306h1M596 383h2M488 443h1M716 265h2M763 399h2M772 435h2M382 349h0M760 364h2M331 440h0M620 315h1M751 264h1M867 308h0M499 264h2M771 329h2M781 300h1M752 403h2M375 400h2M806 375h1M830 275h2M837 318h1M788 439h0M791 314h1M400 450h2M283 382h0M399 331h1M219 329h1M704 423h2M523 283h1M797 254h0M499 356h0M698 311h0M334 404h0M319 302h2M670 406h1M440 436h2M461 404h0M847 358h0M410 404h1M684 336h2M860 311h2M346 434h2M811 259h1M583 320h1M822 334h2M649 388h2M607 360h2M409 352h2M436 355h2M526 281h2M410 381h1M624 377h1M819 445h2M451 315h2M812 400h2M560 305h2M634 347h0M771 386h2M531 270h2M599 305h0M676 337h1M625 399h2M382 457h2M469 382h1M415 348h0M549 286h1M613 287h2M714 373h1M275 373h1M737 350h1M423 370h1M508 267h0M835 270h1M313 397h0M734 252h1M334 337h1M570 290h2M432 287h0M702 336h2M555 301h2M609 299h0M504 262h2M859 305h0M749 288h1M321 392h2M326 380h1M473 422h2M820 307h1M437 446h1M481 304h1M479 365h1M821 352h1M747 449h0M699 451h1M812 303h2M732 426h1M865 294h1M354 385h1M593 262h2M848 320h1M544 374h0M599 294h1M801 361h1M733 355h2M753 307h0M599 429h2M543 417h0M781 431h1M503 311h0M562 459h2M292 377h2M615 288h2M504 465h1M487 376h1M422 325h1M580 292h1M767 325h1M654 390h1M809 352h1M459 283h2M724 290h1M404 297h0M786 440h2M847 417h2M535 413h1M461 454h1M538 307h0M801 402h2M782 339h1M353 356h1M406 435h1M517 372h2M743 389h1M542 308h1M796 442h0M407 426h1M805 429h1M728 276h2M690 323h1M516 261h2M462 434h0M762 268h2M797 402h1M738 396h2M628 324h2M705 430h1M799 303h0M842 411h1M785 330h1M783 420h2M766 313h0M330 357h1M427 300h1M294 339h0M710 361h1M239 269h1M776 333h2M633 465h1M611 312h0M769 448h1M438 284h2M774 310h0M598 418h1M260 455h1M691 414h2M576 452h2M370 398h2M511 439h0M374 425h1M338 420h2M856 352h2M859 408h1M689 293h2M820 341h1M621 344h2M348 396h0M634 385h2M307 438h0M495 446h1M758 451h1M771 415h2M307 267h0M473 256h2M764 422h0M681 374h2M762 277h2M578 251h0M750 307h2M764 451h1M414 302h2M783 310h2M366 463h2M672 402h1M807 339h1M853 377h0M403 315h1M635 467h1M544 278h2M809 274h2M508 360h2M403 423h2M298 401h2M765 463h0M577 394h0M253 403h0M808 418h0M772 344h2M361 289h2M751 321h2M494 262h1M572 343h2M787 345h1M515 355h2M284 376h0M737 350h2M580 442h2M362 395h0M526 292h2M449 315h1M587 464h0M838 464h2M355 312h2M804 365h1M670 410h2M490 373h2M799 425h2M310 291h0M503 262h1M367 322h0M677 403h2M756 256h1M709 363h0M336 436h0M521 281h2M609 470h0M764 397h2M790 420h1M282 300h0M395 257h2M662 382h2M402 338h0M374 353h0M642 306h1M774 468h2M484 448h0M654 365h2M263 423h2M791 363h1M532 446h2M759 310h2M584 326h0M786 363h1M616 357h1M406 357h2M460 452h2M657 372h1M864 343h2M300 443h1M782 400h0M579 408h2M495 463h2M797 395h0M321 418h0M456 326h2M427 363h1M724 382h1M693 381h2M553 440h1M373 304h1M657 348h2M525 447h2M378 426h1M828 307h2M783 377h1M435 338h0M472 447h1M826 442h2M729 426h2M796 422h2M767 422h2M525 272h1M658 341h1M572 251h1M568 299h0M801 447h1M731 388h2M724 440h1M784 342h1M398 348h0M648 306h1M797 375h1M784 327h2M766 258h2M329 463h2M248 413h2M603 466h0M620 329h2M513 436h1M666 395h1M708 286h2M402 393h2M723 302h1M534 311h0M594 310h2M481 283h1M834 331h1M754 267h0M426 319h2M481 439h0M622 379h2M707 274h0M787 446h1M730 340h1M665 389h2M739 365h1M420 330h0M611 388h1M775 418h2M246 295h2M389 360h2M556 443h1M265 342h1M491 311h0M821 253h0M820 342h2M801 442h1M427 324h2M461 320h2M807 339h2M497 457h1M833 256h2M399 427h1M437 427h2M523 342h0M811 423h2M338 379h2M825 389h1M864 310h2M595 264h1M491 361h0M318 431h0M862 335h2M464 444h2M546 454h1M538 258h2M813 415h1M800 264h0M601 283h1M762 318h1M624 301h2M570 453h2M731 311h2M715 347h2M511 467h2M693 402h1M726 357h2M689 332h2M352 366h2M610 370h1M817 350h2M435 378h2M577 283h1M771 286h0M708 288h1M719 327h2M741 280h2M750 359h2M547 359h2M452 273h1M427 408h1M361 345h1M258 414h2M472 271h0M276 417h0M775 352h2M374 415h1M771 454h2M744 389h1M863 284h1M433 470h2M379 395h2M797 425h2M363 386h1M581 371h1M502 318h1M482 329h1M624 436h2M537 270h0M588 430h1M376 374h1M840 274h1M559 262h2M491 310h0M842 351h1M509 447h2M262 411h1M326 263h2M608 284h0M332 413h0M617 330h2M425 341h1M422 282h2M784 345h2M504 345h1M821 291h0M344 419h2M294 278h0M424 252h2M662 386h1M460 278h1M773 265h1M363 406h0M651 398h2M704 450h1M556 454h2M787 293h1M850 333h0M826 317h0M873 271h1M727 412h2M492 444h1M750 289h1M502 406h2M654 468h2M325 391h0M782 356h1M268 255h0M723 441h0M374 300h1M817 384h2M683 290h1M482 364h1M774 310h1M724 390h2M219 384h2M606 355h1M822 295h0M549 288h2M816 319h2M784 379h2M741 418h1M775 310h0M590 404h2M708 300h0M270 252h0M639 318h2M350 351h1M349 422h1M320 291h2M506 267h2M732 392h1M353 376h0M690 275h2M664 285h0M517 454h1M312 351h0M458 348h1M790 454h2M667 396h1M831 336h1M358 353h0M693 400h2M814 405h2M393 353h2M572 451h0M492 319h2M224 320h2M386 329h2M748 280h1M428 296h1M663 285h0M474 265h1M524 305h2M700 259h0M816 432h2M820 412h2M463 280h0M838 303h0M774 253h0M784 469h2M487 440h1M854 283h1M521 293h1M342 363h0M661 418h2M778 333h2M363 344h2M808 426h2M415 362h1M409 394h1M562 313h1M847 343h1M810 365h1M820 350h0M285 448h2M355 389h1M641 284h1M767 377h1M409 293h2M437 470h0M509 372h0M578 461h1M691 452h1M765 447h2M718 440h0M869 455h2M378 290h2M823 335h2M529 405h2M759 394h1M636 320h1M275 408h0M851 273h1M579 331h1" stroke="#c3dba9" stroke-width="2.4" stroke-linecap="round" opacity="0.7" fill="none"/><path d="M730 314h2M246 304h1M836 328h0M776 455h2M707 323h1M341 410h2M644 317h0M805 372h1M486 267h1M689 418h2M588 422h0M384 293h1M290 255h0M447 280h1M385 353h1M402 324h0M354 446h2M412 256h0M668 270h2M363 386h1M515 270h2M768 271h1M411 341h1M772 342h1M293 299h0M389 320h1M590 322h1M516 457h0M503 392h0M430 436h2M807 437h0M379 415h1M839 324h1M374 443h0M747 381h2M568 460h2M669 407h2M484 270h1M761 291h1M808 338h1M817 361h0M238 322h2M408 371h2M749 400h2M853 292h0M387 421h1M707 326h1M811 449h2M453 405h1M257 296h2M317 422h2M505 412h2M603 334h2M674 355h1M832 299h2M352 345h1M501 445h1M572 458h2M673 297h2M510 411h1M363 265h0M356 269h1M655 330h1M369 356h1M873 388h1M878 351h1M230 333h0M306 304h0M685 394h2M494 268h1M439 278h0M526 469h1M848 319h1M812 413h1M851 404h0M500 271h2M587 426h1M719 442h1M812 462h1M508 269h2M698 329h1M794 417h0M613 325h2M736 364h1M814 426h2M389 385h1M397 454h2M314 419h1M498 457h0M311 401h1M237 356h2M692 412h0M529 424h1M726 390h1M322 446h2M351 363h2M224 295h0M372 418h1M502 397h0M344 398h1M736 442h2M733 365h1M780 324h1M620 315h2M456 450h1M743 430h1M461 441h1M511 340h1M594 300h1M714 331h2M568 441h1M507 426h2M700 301h1M736 351h1M553 283h1M531 290h1M300 399h1M491 306h0M692 333h1M671 260h1M768 445h1M422 332h2M786 333h1M549 305h1M871 446h0M869 418h2M843 253h0M739 257h1M680 379h1M838 350h1M725 285h1M734 447h1M719 377h1M728 410h2M314 367h0M712 383h0M470 428h1M394 259h2M217 343h0M541 283h0M695 415h1M335 410h2M715 326h1M412 273h2M651 363h0M447 383h1M843 444h0M774 341h0M349 440h1M626 370h0M295 322h1M726 428h2M255 347h1M477 310h2M415 370h1M542 251h1M370 335h0M460 339h1M463 393h1M865 276h0M452 430h1M736 292h0M496 455h1M784 253h1M390 442h2M743 371h1M459 346h2M828 442h0M651 265h1M320 439h2M616 414h1M721 331h0M775 440h2M809 323h2M649 267h1M745 346h0M507 271h1M350 291h1M539 440h1M279 437h1M789 291h1M554 289h1M393 373h2M802 318h2M262 435h2M744 442h1M218 309h1M800 403h2M368 356h2M673 388h2M702 332h0M825 425h0M710 446h0M790 267h0M512 440h2M857 306h2M330 449h1M714 365h0M777 273h2M748 325h0M827 457h2M796 387h1M667 453h1M716 337h0M631 262h1M410 378h2M833 254h2M661 358h2M703 413h1M876 312h1M415 340h1M575 379h1M796 322h0M806 283h2M778 347h1M671 394h2M829 385h0M500 251h1M844 304h1M426 264h1M800 429h0M481 368h0M591 387h2M743 256h2M315 448h0M298 409h1M610 422h1M372 398h1M788 331h1M574 281h2M577 382h2M742 448h1M448 338h1M674 376h1M420 462h0M814 311h1M795 308h1M415 251h2M515 388h2M473 256h2M657 316h0M385 293h2M764 403h0M440 334h2M413 414h2M591 314h2M856 364h2M614 327h1M833 436h2M565 254h1M701 384h0M874 464h2M373 336h2M513 379h2M471 297h2M614 466h2M433 398h2M339 269h1M401 367h2M752 419h2M637 257h0M306 424h2M859 293h1M403 344h0M787 398h1M519 308h1M318 440h1M686 450h1M408 269h1M363 261h1M801 462h1M838 328h2M636 261h0M375 440h1M856 324h2M770 397h2M538 455h1M226 352h0M636 370h1M802 408h2M337 398h2M730 398h2M304 445h2M836 425h0M576 336h2M354 438h1M506 276h2M447 426h1M373 445h1M600 443h2M438 277h2M225 443h0M800 355h0M319 453h0M593 429h2M711 410h2M724 404h0M661 354h2M606 305h1M325 427h2M513 281h0M471 318h2M794 401h1M537 261h2M226 293h2M806 454h2M489 379h0M638 309h0M752 382h1M636 349h2M376 304h2M871 450h2M852 322h2M786 448h2M530 270h1M330 284h2M423 321h1M774 354h2M626 382h1M658 336h0M866 345h1M449 453h0M438 320h2M308 253h2M317 323h1M394 335h2M826 336h1M670 305h2M363 459h1M848 257h2M594 285h2M802 418h1M416 321h2M309 311h2M485 437h2M435 312h1M455 256h1M701 360h2M498 360h1M803 351h1M759 312h1M691 377h2M680 404h0M743 363h2M788 424h1M601 414h2M716 346h1M788 419h0M787 258h1M333 341h1M767 371h2M510 292h1M836 321h2M613 304h1M461 363h1M783 412h2M825 445h0M337 442h1M446 298h2M732 403h2M298 433h2M740 467h1M558 311h1M548 454h0M811 410h2M321 257h2M776 382h1M363 406h0M432 391h2M363 400h1M499 261h0M324 415h1M709 335h2M522 300h0M489 361h2M368 317h0M231 418h0M284 325h1M698 431h0M832 393h1M686 330h2M838 284h2M417 439h1M606 412h2M460 272h1M687 321h2M774 418h1M409 269h2M580 393h2M854 459h1M290 394h2M728 373h1M677 346h0M723 252h2M294 309h2M731 363h0M545 327h0M433 289h0M416 299h1M712 324h1M797 396h1M806 269h2M853 380h2M743 425h2M584 444h1M637 354h2M659 432h2M343 360h2M504 426h2M601 313h1M598 434h2M801 392h2M815 273h1M420 267h1M473 277h1M702 367h1M620 334h2M624 373h2M367 315h1M699 327h2M422 306h1M602 402h2M328 294h1M798 279h2M374 394h2M816 320h2M514 446h2M635 267h1M856 320h2M737 374h0M615 304h1M813 327h1M607 408h1M704 253h1M265 313h2M517 258h1M505 436h2M703 274h1M736 469h1M370 311h1M724 320h1M414 424h2M437 269h1M356 408h1M471 283h0M853 326h1M751 357h0M846 415h0M686 309h1M217 257h2M874 303h2M358 369h2M853 288h0M727 397h1M356 440h0M566 283h1M454 325h2M310 361h1M497 266h1M706 399h1M518 268h2M593 368h2M546 420h2M481 433h1M287 427h1M690 424h0M810 314h1M367 470h1M835 282h2M417 268h2M807 441h0M732 265h2M407 328h1M296 390h2M807 339h2M445 438h1M872 262h2M502 269h2M696 348h2M391 279h1M708 264h0M832 359h1M784 331h0M532 427h2M735 298h0M377 405h2M570 444h1M456 458h0M787 322h1M318 275h2M619 322h0M666 362h1M470 456h0M669 422h2M760 470h1M571 427h2M380 252h1M638 360h2M296 289h0M263 312h2M608 259h1M317 316h2M763 380h1M465 316h1M492 405h0M420 313h1M725 256h0M531 401h2M533 296h2M823 266h1M744 422h0M813 324h2M368 327h1M540 448h1M675 324h1M620 327h0M354 367h1M618 294h2M473 279h2M398 312h1M434 291h1M846 254h0M587 254h2M777 331h2M652 328h2M424 323h2M757 294h1M729 306h2M253 424h2M724 380h2M826 328h1M382 433h2M580 286h1M724 421h1M710 434h0M354 276h1M403 392h0M729 356h2M815 333h2M643 319h2M664 390h1M812 293h2M812 264h0M835 407h1M291 337h0M827 265h2M554 408h2M414 342h2M512 286h2M761 302h2M738 363h0M802 277h2M518 306h1M464 371h1M731 414h0M656 437h0M606 330h1M662 383h1M359 397h0M518 268h2M487 445h2M381 424h1M572 406h2M699 281h1M577 272h1M221 342h2M343 354h2M813 282h1M839 424h0M804 412h2M696 349h0M480 354h2M262 336h1M816 270h1M435 333h1M488 329h0M801 420h2M596 353h1M617 289h2M600 393h2M634 295h1M466 324h2M733 457h1M744 445h0M610 320h2M610 351h1M828 415h0M658 354h1M637 397h1M448 290h1M690 403h2M763 454h1M807 400h1M841 365h0M531 366h0M740 341h2M855 288h2M392 334h2M651 373h1M722 391h1M752 428h1M611 255h0M474 428h0M822 447h2M581 462h1M757 298h2M505 421h1M466 427h1M868 304h2M427 295h2M761 376h2M870 462h0M323 424h2M430 375h1M801 308h1M824 256h1M529 254h1M452 326h2M298 419h0M528 415h2M762 312h2M668 405h2M709 412h0M316 288h1M351 324h2M392 408h1M715 382h2M792 403h1M601 332h1M808 439h2M743 386h2M292 420h2M745 254h1M274 328h2M583 411h2M686 464h0M786 355h2M418 331h2M687 353h1M794 339h0M837 266h2M827 314h1M252 380h0M319 297h1M831 420h1M611 433h2M504 304h2M703 354h2M368 360h1M388 341h1M614 384h2M731 265h2M843 465h1M697 440h2M355 435h2M737 381h2M854 330h1M569 311h2M793 438h2M488 375h1M331 419h2M868 301h2M831 358h1M322 329h2M646 314h1M488 318h0M381 437h1M788 309h2M801 323h1M703 389h2M720 290h0M833 443h2M394 323h1M511 336h2M456 331h1M671 467h1M847 314h0M422 403h1M800 316h2M620 399h1M654 413h0M716 396h0M784 331h1M642 398h1M779 394h1M781 394h0M612 317h2M810 287h0M498 444h0M679 426h2M463 426h2M483 354h1M763 333h0M650 338h1M405 353h2M287 401h1M815 299h2M413 437h2M763 314h0M853 324h2M515 410h1M465 263h2M391 450h1M716 251h1M416 401h1M354 428h2M492 393h1M517 262h1M797 336h1M404 346h1M605 449h2M447 349h1M320 409h2M577 345h1M223 304h2M365 446h2M680 263h1M627 388h1M369 432h2M536 450h0M362 332h1M627 295h1M411 360h0M416 321h2M358 461h2M687 420h0M594 291h2M764 423h2M843 251h1M357 403h1M574 303h2M453 307h1M795 257h1M704 438h2M782 293h2M863 313h1M743 451h2M291 334h2M422 450h0M468 454h0M616 408h2M721 420h2M867 279h1M401 355h2M530 300h0M389 366h2M523 381h2M425 421h0M295 434h2M697 264h2M647 418h1M579 371h2M803 351h1M401 325h1M522 435h1M243 328h2M864 310h0M394 362h2M291 347h2M488 448h0M743 292h0M398 376h1M819 320h2M426 423h0M257 433h1M462 349h2M752 331h2M663 379h0M802 432h0M748 265h2M574 367h0M800 419h2M321 402h1M489 462h0M350 275h0M358 283h2M626 379h0M482 335h1M472 448h2M758 359h2M408 363h1M713 333h1M708 438h1M679 370h2M218 400h1M775 272h2M674 302h0M779 430h2M695 389h2M831 379h2M791 252h2M804 400h1M632 326h2M742 346h1M665 378h2M605 419h2M428 309h1M458 256h1M876 311h1M542 458h1M778 423h2M767 440h1M869 302h1M622 430h0M506 282h2M792 348h0M546 397h2M733 425h1M863 314h2M282 426h0M761 278h0M463 424h0M420 413h2M331 430h1M487 399h1M857 263h0M703 373h1M774 262h0M404 431h1M725 301h2M865 300h1M480 274h0M811 422h0M238 409h0M454 362h2M506 390h2M362 363h0M448 338h2M818 332h2M779 448h1M506 403h2M349 396h0M606 267h2M558 293h2M854 334h0M788 421h1M689 315h0M448 352h1M317 439h2M467 427h2M429 347h2M420 269h1M308 415h1M634 294h1M851 335h1M515 405h2M529 298h0M702 330h2M776 378h0M755 292h1M517 419h0M395 338h0M602 298h2M865 417h0M742 390h1M795 306h1M710 289h1M656 409h0M365 426h2M758 432h0M858 252h2M875 453h0M471 284h1M861 257h2M774 293h0M617 353h2M396 335h1M775 294h1M638 258h1M721 318h0M515 362h2M574 292h1M512 405h1M440 422h1M632 356h0M846 393h0M842 430h1M739 390h1M247 408h1M766 280h1M861 301h2M409 460h1M651 257h0M668 324h0M396 334h1M387 399h2M655 285h2M528 324h1M531 415h1M539 311h0M641 402h2M327 438h1M701 290h0M545 299h1M621 273h1M358 263h1M537 307h1M816 300h2M525 446h2M656 375h1M875 254h0M474 320h2M356 359h0M442 268h0M277 438h1M453 383h1M469 394h1M751 300h1M838 458h0M419 355h1M865 297h1M489 348h1M862 310h1M760 329h1M619 325h2M451 460h2M518 287h2M510 299h2M513 398h1M538 465h1M833 438h1M847 447h2M705 392h2M255 432h2M391 323h2M620 395h2M868 278h1M767 268h0M784 378h2M400 457h2M813 432h1M227 376h2M841 347h2M813 319h2M355 396h1M253 425h1M680 360h2M520 313h1M765 300h2M564 292h1M738 349h0M681 277h2M473 444h1M579 296h0M447 294h1M333 400h1M685 316h2M783 347h1M786 308h0M842 458h2M513 470h1M485 282h2M760 253h1M599 349h1M696 378h1M746 372h2M769 433h1M714 404h1M354 371h1M805 452h2M574 303h1M339 252h1M875 384h2M587 404h1M679 254h1M403 341h0M783 381h1M753 357h1M586 398h2M440 336h0M560 441h1M548 269h2M615 391h2M813 341h1M392 358h0M565 285h1M806 443h0M808 337h2M368 343h2M589 288h0M609 325h1M353 295h0M455 321h2M231 448h0M353 385h1M524 276h1M322 336h1M624 376h2M324 288h0M757 404h2M690 297h1M359 296h2M530 380h2M652 386h2M506 324h0M691 322h2M304 417h2M380 308h2M648 257h1M774 440h1M323 395h1M382 419h0M413 350h2M819 315h2M737 436h2M793 365h0M731 399h1M804 402h0M798 404h0M298 420h1M876 312h2M513 277h2M407 443h2M314 275h2M486 268h2M735 252h1M749 399h2M830 280h1M365 309h2M441 331h0M718 447h1M847 313h2M364 464h2M762 345h2M824 452h2M641 343h2M501 293h2M326 330h2M871 454h2M509 274h1M812 321h0M494 284h0M748 326h1M737 260h1M735 401h0M427 278h2M257 330h0M815 421h0M758 409h1M706 414h2M841 441h0M738 398h1M387 320h0M827 305h1M814 445h1M445 427h1M637 323h0M712 299h2M727 377h1M451 417h2M247 288h1M873 432h2M616 255h2" stroke="#c3dba9" stroke-width="3.6" stroke-linecap="round" opacity="0.7" fill="none"/><path d="M311 253l3 2 3 2 0 4M311 253l-4 1 -3 2 -2 2 -3 2M311 253l-3 4 -2 4 -2 5 -3 5 -4 3 -3 1 -3 2 -3 5 -2 2M311 253l4 0 4 1 4 1 4 1 4 0 3 0 4 1M311 253l-4 -3 -4 -2 -3 -2M364 257l-1 -3 -1 -3 -2 -4 0 -5 0 -4 2 -4 1 -6 0 -6M364 257l-2 -4 -1 -4 0 -3 0 -4 0 -4 -1 -4M364 257l-5 0 -5 -1 -5 -1 -5 1 -3 2 -4 1 -4 0M270 275l3 -4 1 -5 2 -5 1 -5 1 -3M270 275l-3 1 -4 0 -4 1 -5 -1 -3 -1 -4 -1M270 275l3 0 3 1 4 0 6 1 6 -1 5 0 4 3M270 275l1 -4 2 -4 3 -3M310 277l-5 2 -3 -1 -4 -1 -4 -3M310 277l6 1 6 -1 4 1 5 1 3 -1M340 274l4 1 3 -1 4 0M340 274l-3 -2 -4 1 -2 2M340 274l-3 2 -2 5 0 4 2 4 3 3 3 5 1 3M340 274l4 3 3 1 4 1 3 1 4 1 3 -1 4 0M376 276l-1 5 0 4 0 4 0 6 1 5 2 4 1 4 -1 3M376 276l-3 -3 -2 -3 -1 -4 -1 -4M376 276l2 -3 2 -2 0 -3 -1 -6 1 -3 2 -3 3 -4 2 -3 4 -3M253 288l-1 -5 0 -4 0 -6 -2 -5 -1 -3 -2 -4 -1 -3M253 288l-2 -4 -3 -4 -4 -2 -4 -3 -3 -4 -5 -2 -5 1M299 291l2 -5 0 -5 2 -6M299 291l-1 -3 -2 -3 -1 -5M299 291l1 -3 0 -5 0 -3 -1 -6 -1 -6 -2 -4 -3 -5 -2 -2 -3 -2M299 291l2 -5 3 -2 5 0M299 291l4 -3 3 -3 3 -2 3 -4M242 300l0 4 -1 5 -3 4 -4 4 -4 2M242 300l1 3 0 4 -1 3 1 3 -1 4 2 4 1 4 0 4M242 300l3 -2 4 -1 3 -3 0 -5 2 -3M332 309l-1 -3 -2 -3 -5 -3 -5 0 -4 -1 -5 0 -4 0 -6 2M332 309l1 4 1 4 0 3M332 309l1 -5 3 -4 3 -3 2 -3 2 -3 2 -3 1 -6M332 309l2 5 2 4 1 4 -3 2 -3 2 -3 1M363 314l-1 -3 -1 -4 0 -5 -2 -5 -1 -6M363 314l2 4 3 3 1 3 0 3 0 4 -2 5 -2 4M363 314l1 3 2 4 1 4 5 2 4 1M363 314l4 3 3 1 3 -1 3 0 4 -4 4 -4M314 318l3 -4 2 -3 3 -2 3 -2 4 -2 3 -4 3 -3 3 -1M314 318l3 0 3 2 3 3 4 3 3 2M314 318l-1 -3 1 -6 0 -5 1 -4 0 -6 0 -3 -1 -4 -3 -5M314 318l5 3 3 1 4 2 4 4 3 3 5 3 4 2 3 1 5 1M340 319l-3 -1 -5 0 -5 2 -3 1 -4 2 -6 0M340 319l-3 1 -4 3 -1 3 -2 3 -1 6 -1 3 -1 3 0 5M340 319l2 4 2 2 3 4 3 4 2 4 5 2 4 1 4 4M340 319l6 1 3 1 4 2 5 1 3 2 3 0M340 319l-2 4 -1 6 -1 6 -1 5 -3 2 -3 4 -3 1M340 319l4 0 4 -1 3 -1 5 -2 4 -1M238 322l3 -4 4 -1 4 1 4 0 5 1 5 1M238 322l2 5 2 4 -1 4 1 4M238 322l4 -3 3 -3 3 -3 1 -4 2 -5M238 322l3 5 1 4 1 5 0 4 0 4 -4 4 -3 2M238 322l-3 2 -4 2 -3 -1 -5 -1 -3 -1 -4 0 -4 -1 -4 -2M432 251l-2 2 -2 5 0 3 0 6 1 3 1 4 1 5 0 5M432 251l0 4 1 5 -1 3 -2 5 -1 4M406 263l-3 -1 -4 -1 -5 2 -5 -1 -2 -3 -3 -4 -2 -4 -2 -5 -4 -5M406 263l-4 -2 -5 0 -4 3 -5 2 -4 1 -4 1M490 260l0 -6 -1 -5 -1 -6 -1 -3 -1 -4 -1 -3M490 260l0 6 -1 5 -1 4 0 6 2 5 3 4 1 5 -1 5M551 279l-3 2 -4 3 -2 5 1 5 2 3M551 279l5 -2 3 -1 5 -2 3 -1M551 286l3 -2 4 0 4 -1 4 3 4 3 5 2 5 3 3 2M551 286l-3 -3 -3 -2 -4 0 -5 1 -4 0 -4 3 -4 4 -2 3 -1 5M551 286l5 3 3 2 0 4 0 4 -2 4 -3 3M522 287l1 5 -1 4 0 3 0 5 0 5 0 4 1 6 2 4 4 3M522 287l-3 -2 -5 0 -5 -2 -3 -3 -3 -4M522 287l-1 3 -4 5 -3 2 -4 3 -2 4 0 5M524 293l3 -3 2 -4 0 -5 4 -4 4 -1 4 -3 6 -1M524 293l0 6 -1 3 -2 3 -1 3 -3 2 -3 2 -5 1 -6 0 -4 0M400 296l-3 3 -3 3 -1 4 0 4 -1 5M400 296l-5 2 -3 5 -1 4 -2 2 -4 2 -3 0 -4 0 -4 1M400 296l-3 4 -4 3 -4 4 -4 4 -3 3 -2 3M400 296l-3 -1 -4 -1 -6 1 -3 2 -2 4M400 296l-5 -1 -6 -1 -5 3 -4 0 -5 0M472 294l2 4 2 3 2 3 0 4M472 294l-4 -4 -3 -2 -4 -1 -3 1M472 294l2 -4 1 -4 0 -5 2 -3 2 -3 3 -1 4 1 4 -1M486 324l-3 4 -3 5 -2 3 -4 3 -4 4M486 324l4 4 2 5 0 4 1 3M486 324l-4 -2 -5 -1 -5 1 -5 2 -5 0M657 254l5 -1 4 1 4 3 4 2 6 0 6 1M657 254l-4 -2 -2 -3 -2 -4 -2 -5 -1 -3M657 254l-3 0 -1 5 0 3 -2 5 -1 5 1 5 2 5 2 4 2 3M657 254l-5 -1 -5 -1 -5 0 -3 0M689 268l4 4 3 2 4 4 4 -1 3 -2 4 -3 3 -1 4 0M689 268l-3 -1 -5 -1 -5 -2 -4 2 -3 5M689 268l-1 -3 0 -6 -1 -3 -2 -4 -2 -3 -2 -3 -3 -3 0 -5M616 278l-4 -1 -3 -1 -3 -1 -4 2 -4 3 -3 3 -3 2M616 278l3 0 3 0 5 1M616 278l4 -5 5 -3 5 -2 4 -1M694 301l-4 3 -1 4 -3 3 1 4M694 301l1 -4 0 -5 0 -3 0 -5M694 301l3 5 3 5 3 4 3 4 -1 4 3 5 4 4M642 316l-3 1 -4 -2 -3 -3 -3 -5 -4 -5M642 316l0 -5 3 -4 2 -2M642 316l-3 -5 -3 -5 -5 -2 -2 -2 -5 -1 -4 0 -4 -1 -3 -1 -6 -1M642 316l0 -4 1 -5 1 -4M642 316l1 -5 2 -6 2 -2 0 -5 2 -5 1 -4 2 -4 4 -2M722 270l-4 2 -4 3 -2 2 -3 2 -5 4 -3 4M757 274l2 -3 4 -2 3 -1 3 -1 4 -3M757 274l5 0 5 2 5 1 4 1 5 2 5 -1 4 -1M798 328l-1 -4 0 -4 -1 -5 1 -3 3 -4 1 -5 1 -4M822 333l1 4 2 5 0 5 0 4 -1 5 -1 4M822 333l3 4 3 3 3 2 3 3 3 3 0 5 -1 6M822 333l-3 0 -5 -2 -6 -1 -6 -2 -5 -1 -4 -3M882 348l-1 -4 -2 -3 -4 -1 -3 -2 -3 -2 -3 -1M882 348l-2 5 0 6 0 4 -2 3 -3 4 -2 4 -3 2 -3 3M882 348l-5 4 0 3 2 5 2 5 2 5 0 6 1 5 0 5M251 334l3 4 2 3 2 4 0 3 1 5 3 2 2 4M251 334l4 -1 3 0 5 1 5 -2 3 -2 3 -3 2 -3M251 334l-2 4 -1 5 -2 5 -3 2 -4 1 -4 -1M352 334l2 -4 1 -4 1 -4 3 -5 -1 -4M352 334l-4 0 -4 1 -5 0 -3 0 -3 1 -5 2 -5 1M352 334l2 -3 2 -5 1 -5M352 334l4 1 5 -1 4 0 6 0 4 1 5 2 5 3 2 2M380 353l-6 0 -3 -2 -2 -2 -2 -3 -2 -3 -3 -3 -2 -4 -1 -4M380 353l-1 -5 0 -4 -2 -4 -2 -4 -2 -3M380 353l-5 -2 -3 -4 0 -4 -2 -5 -4 -5 -4 -1 -3 -1 -5 -2 -5 -1M380 353l0 5 -2 5 -4 3 -5 2 -2 3 -3 0 -4 1 -3 0 -4 1M380 353l-2 6 -3 5 -1 3 0 5 1 5 1 3 1 3M380 362l4 -3 5 1 3 -2 4 -2 2 -2 1 -6 0 -4 -2 -2M380 362l2 -6 1 -5 0 -3 2 -5 0 -5 -2 -6 -1 -5M374 376l5 -2 3 -1 4 -2 5 -1 4 -2 2 -3 3 -4 4 -5 4 -3M262 385l1 -5 -3 -4 -1 -3 -2 -4M262 385l-4 2 -3 2 -1 5 -2 4M262 385l4 2 4 0 3 0 5 -2 4 -1 5 2 3 2 5 3 2 3M262 385l2 -3 2 -5 2 -3 3 -3 4 0 3 -1 4 0 3 -1M337 387l3 4 3 4 1 6 1 3 2 4M337 387l-5 -1 -3 2 -5 2 -4 3M337 387l-3 0 -4 -3 -3 -2 -5 -1M221 392l1 4 1 4 0 3 -1 4 2 4 1 4 -2 5 -1 4M221 392l4 3 4 3 4 0 4 2 4 -1 3 -2 5 -1 5 0M221 392l2 -2 1 -5 2 -5M221 392l-4 3 -5 2 -5 3 -5 -1 -4 -1 -3 -1 -4 -1 -6 -1 -4 -2M373 394l2 -5 2 -3 4 -4 3 -4 2 -3M426 361l3 -5 1 -3 0 -5 0 -5 0 -5 0 -6 -1 -3 1 -4M426 361l-3 4 -2 3 -4 1M426 361l-1 3 1 4 0 4 0 6 1 4 2 3 -1 6M426 361l-2 -4 -2 -5 2 -4 1 -3 3 -3 2 -3 0 -4M426 361l2 2 2 4 3 5 0 4 0 5 -1 3 -1 3 -2 5 -3 4M440 379l-5 0 -3 1 -4 3 -3 5 -2 4M440 379l2 3 1 4 2 4 1 4 1 5 3 1 5 -2 3 -2M440 379l-3 4 -4 4 -2 3 -2 2 -1 4 0 3 -2 5 -1 3M434 400l0 4 -2 3 -2 5M434 400l3 5 2 5 0 5 -3 5 -1 3 -2 6 -2 3M434 400l-4 1 -3 0 -4 0M434 400l4 -2 3 -3 3 -2 3 -2 3 -1 4 1 3 1M656 342l2 3 3 4 2 5M656 342l3 2 5 1 4 2 3 1 3 0 5 -1 4 -2M656 342l4 -4 4 -1 5 -2 3 -3 3 -2 5 2 5 1 4 2M656 342l-3 3 -1 5 -3 4 -3 3 -5 2 -5 2M656 342l4 -4 4 -4 2 -3M574 351l2 -3 4 -4 0 -4M574 351l3 5 3 4 1 3 2 5 3 1 3 2 3 5M622 354l-6 0 -5 0 -3 0M622 354l2 4 4 3 3 1 5 0M622 354l1 3 3 4 2 3M622 354l-5 2 -5 2 -3 2M622 354l-3 1 -4 2 -4 3 -4 2 -4 1 -4 -1 -3 -1M504 367l-4 -3 -2 -4 -2 -4 -2 -4M504 367l-5 3 -4 1 -6 -1 -6 -1 -3 -4 -3 -3M504 367l5 3 4 0 5 -2 5 0 4 -2 3 -2 4 -4 5 -3M504 367l2 3 3 1 5 -1 3 1 3 0 4 -2 3 -2M504 367l-2 -2 -2 -2 -2 -4 -1 -5 2 -4 5 -3 5 -2M830 393l-4 -4 -3 -5 -1 -3M830 393l4 3 -1 3 0 6 0 6 1 3 3 4 2 4M830 393l6 -1 3 0 3 0 5 -1 5 1 5 -2 4 -3 5 -1 3 -4M830 399l-2 5 -2 3 -1 6M723 402l1 -5 4 -4 1 -3M723 402l-6 1 -4 2 -5 1 -4 -2 -4 -2 -3 -2 -1 -3M359 418l1 -6 0 -5 2 -3 4 -3 4 -2 5 -1 5 -1 5 0 4 1M359 418l-4 -2 -1 -3 -1 -3 -3 -1 -4 -4M359 425l3 1 3 0 4 1M359 425l3 4 3 4 1 6 0 4 -1 4 0 5M359 425l5 -1 3 0 3 1 5 0 5 -1 4 -2M359 425l-3 -2 -4 3 -4 1 -4 1 -3 1 -6 0 -3 -2 -3 -2 -3 -1M352 442l2 -2 5 -1 3 -3 4 -2 5 -1 3 -1 3 0 4 0 4 0M376 447l-1 -4 -2 -5 -2 -5 0 -3 0 -3M376 447l0 -4 1 -4 1 -5 3 -4 3 -2 3 -3 2 -4 3 -3M327 458l0 6 -1 5 1 4 1 4M435 412l4 0 4 1 4 2M435 412l4 2 3 -1 5 -2 3 -3 5 0 4 1 3 -1M435 412l1 -6 2 -5 4 -3 1 -4 2 -5 0 -6 -2 -3 -3 -5M412 418l2 4 4 3 3 1 2 3 1 5 1 3M412 418l-1 4 -1 5 1 4 0 4 0 6 0 6 1 5M412 418l-2 -3 -2 -4 -2 -2 -5 -1 -5 0 -4 1 -4 0 -4 2 -4 4M452 429l-4 1 -3 2 -6 0 -5 0 -5 -1 -4 -2 -4 -2 -3 0M452 429l1 -5 4 -3 2 -3M452 429l-5 0 -4 -1 -5 0 -4 0 -5 2 -4 1 -4 1 -5 -1 -3 -1M452 429l4 -1 5 -1 6 0 3 2M489 442l-5 1 -3 -1 -3 -1 -6 -2 -4 -3 -4 -3M489 442l4 2 5 1 5 4 3 2 4 4M489 442l-3 2 -4 3 -1 4 0 5 -1 4 -1 4 -1 3M524 398l-4 -2 -3 -3 -3 -2 -3 -2 -3 -2 -6 -1M524 398l4 2 4 2 4 -3 5 -1 3 -1 4 1 3 1 4 2M524 398l0 5 -2 5 1 4 2 5 3 4 2 3M524 404l-1 5 0 6 -1 4 0 4 -2 3 0 3 2 3 1 4M524 404l0 6 -3 4 -1 6 0 5 1 3 0 3M524 404l-4 0 -6 1 -4 -1 -3 -1 -5 0 -5 0 -3 -4 -3 -5M574 416l-4 3 -3 2 -4 1M574 416l0 -5 2 -3 2 -3 4 -4 3 -4 1 -4 4 -3 3 -1M574 416l1 4 -1 3 1 3 0 3 0 3 -1 5 -1 5M696 407l-5 1 -4 1 -5 0 -4 1 -4 0 -6 1 -5 -2 -5 0 -5 -1M610 424l-5 3 -5 1 -4 3 -3 4 2 5 3 5M610 424l-3 2 -3 2 -3 2 -1 5 0 3 -1 4M610 424l-4 -3 -4 -1 -4 -2 -3 -1 -2 -2M610 424l-3 5 -2 4 0 4 -2 3 -3 5 -3 3 -2 5M684 421l0 -3 1 -6 2 -5 2 -3 2 -4 4 -4 4 -4M607 437l2 6 2 5 3 4 0 6 1 5 -1 4 -2 3M607 437l-3 -3 -3 -2 -4 -3 -2 -2 -6 -2M641 442l5 2 4 1 6 -1 6 -1 5 0 4 -3 3 -4 2 -5 1 -5M641 442l3 -5 3 -3 2 -5 2 -3M704 443l-1 5 1 3 -1 5 1 4 2 5 4 1M704 443l-3 -5 -2 -4 -3 -5 -4 -4 -2 -2 -5 -3 -4 -3M704 443l3 -3 5 -2 4 0M704 443l1 4 2 4 3 4 2 5 0 4 1 5 4 4 3 3M580 454l-1 -4 -1 -5 0 -4 2 -6M580 454l5 2 3 1 3 1 4 2M580 454l-6 -1 -3 0 -5 0 -6 0 -6 1 -3 -1 -3 1M736 433l-6 0 -5 3 -2 2 0 5 -2 4 -2 3 -3 3 -2 3 -2 4M832 434l-1 -3 -1 -4 2 -6 -2 -5 -2 -4 0 -5 -2 -5 0 -4M832 434l3 4 1 4 1 3 0 5M832 434l2 -2 5 0 3 0 4 1 3 0 4 -2 3 -4 2 -3 4 -4M864 443l-3 -5 -3 -4 -2 -4 1 -3 3 -3M741 456l2 2 2 2 3 3 2 3M741 456l-1 3 -2 3 -2 4 -3 2M716 469l0 5 0 4 1 3 1 4 0 3 0 6M716 469l-4 -3 -4 -4 -2 -4 -1 -5 -2 -5 -2 -5M716 469l0 4 -1 4 -3 2 -3 3 -3 4 -4 4M406 314l6 1 5 1 5 1 4 -2 4 -3 3 -3 2 -3 4 -2M406 314l-4 0 -6 0 -4 1 -6 1 -3 2 -2 3 -1 6M647 339l-5 3 -3 3 -2 3 -4 4 -1 3 0 4 1 5 1 5M647 339l4 3 3 2 2 5 2 5 3 5M647 339l3 -3 2 -3 3 -5 3 -4 2 -4 2 -4 3 -2M573 294l0 -5 0 -3 -1 -4 -4 -4 -4 -4 -5 -4M512 384l2 -5 2 -4 1 -3 2 -4 4 0M503 280l1 -5 2 -4 0 -3 0 -3 -2 -5 0 -4M503 280l2 5 1 5 0 4 3 4 2 5 4 2 4 2M731 276l1 -5 3 -4 2 -4 2 -5 1 -3 2 -4 1 -3M877 402l-1 -5 -1 -4 -1 -4 -2 -3 -3 -2 -3 -3M669 281l-1 5 1 4 0 4 2 5 3 2 3 5 2 3 1 6 1 4M449 400l-5 -3 -5 0 -5 2 -5 3 -3 1 -3 2M449 400l3 2 3 4 3 4M555 451l5 2 3 4 3 3 1 3M555 451l5 3 3 1 4 -1M735 263l-5 -2 -5 0 -4 -1M300 274l-3 -4 -1 -5 -1 -5 0 -3 1 -5 2 -5 2 -3 -3 -4M300 274l3 -2 3 0 3 -3M300 274l1 -3 3 -5 1 -3 0 -6 -1 -4 -3 -4 -3 -2 -4 -3M369 435l1 -4 2 -5 -1 -4 -3 -5 -2 -5 0 -4 2 -3 3 -4 2 -4M515 265l5 0 4 3 3 4 1 5 2 4 -1 3 -2 3 -3 3 -2 4M515 265l1 3 2 4 4 4 3 4 1 4 -1 6 -1 4M291 392l3 4 4 3 4 2 2 2 4 3 3 5 3 3 0 3M358 292l0 4 4 4 3 3 4 3M358 292l-3 -2 -5 -3 -2 -4 -3 -4 -3 -1 -5 -1M358 292l-4 3 -5 1 -3 -1 -3 -1 -5 -3 -5 -3 -3 -3 -2 -3M587 343l3 -3 4 -2 6 0 3 1 3 1 5 -1 6 -1M672 470l1 -3 4 -4 3 -2M672 470l-5 3 -3 0 -4 0 -5 0 -4 3 -5 4M777 387l-4 -1 -5 -2 -3 -2 -3 -5 -1 -4 -2 -3 -4 -1M571 320l2 -3 1 -3 1 -3 2 -5 0 -3 3 -5M258 429l4 1 4 0 3 -1 4 -2M841 318l2 -5 1 -4 1 -4 2 -4 1 -3 1 -4M680 463l3 2 4 4 3 4 4 5 2 3 5 2 3 1 4 2 1 3M589 294l-3 4 -3 4 -4 3 -5 3 -4 2 -4 2 -3 3 -5 1 -5 2M283 359l4 0 3 0 5 1 5 -1 6 1 4 3 3 3 1 3M281 458l2 4 4 2 5 -2M566 373l-3 -2 -4 -1 -3 0M566 373l-3 4 -5 3 -2 3M312 272l0 -5 1 -3 4 -4 2 -2M312 272l5 2 4 1 3 2 4 4 4 1 3 2 5 1 4 0 5 -1M312 272l-3 -5 -1 -5 1 -3 3 -5 1 -5M397 353l4 -3 5 -3 5 -1 6 0M606 401l-4 1 -2 2 -3 2 -2 4 -3 3M319 428l4 -1 3 -3 3 -1 4 -3 4 -2M488 398l-3 -3 -4 -4 -6 0 -3 0 -5 0 -3 1 -4 -2 -4 0 -5 0M488 398l4 -2 5 0 5 2 6 -1M488 398l-3 -2 -2 -3 -3 -3 -3 -5 -2 -5 -2 -2 -2 -5 -3 -3M752 308l3 2 5 3 4 1 4 0 4 0 4 -2 4 -2 5 -1M752 308l-1 -4 2 -6 -3 -4M570 372l-3 -4 -3 -1 -2 -4 -2 -3 -5 -3 -5 0 -3 1M835 431l3 1 5 0 4 1 3 2 3 4 2 4M685 401l0 -5 -2 -3 -2 -4M685 401l-4 -4 -3 -3 -2 -3 -1 -4 1 -3 1 -4 5 -4M685 401l1 5 0 3 4 5 4 2 3 2 4 1M345 419l0 -3 -1 -3 -4 -4 -2 -3 -4 -4M844 411l4 -1 4 1 4 -1M844 411l4 -1 4 -3 4 -2 3 -2 4 0 4 1 5 -1M258 285l-4 -1 -4 1 -6 -1M258 285l-2 -5 -1 -5 0 -5 3 -4M258 285l-1 -4 -2 -5 1 -5M840 457l5 -2 4 -3 4 -4 4 -1M527 420l-2 4 -1 3 -4 3 -4 1 -4 -1 -4 0M220 260l-3 4 -1 4 -3 5M220 260l5 0 5 -1 6 2M383 438l4 -3 3 -1 4 -1 4 -2 4 -1 5 0 5 0M693 434l-2 5 -1 5 -1 3 0 3 0 4 1 4M594 414l3 -1 3 -3 3 -5 3 -4 0 -5 0 -4M641 277l3 2 3 1 4 2 4 2 2 2 5 1 4 3 2 6M641 277l4 3 3 3 3 3 3 2 2 4 3 5 1 4 1 4 3 4M228 439l-2 3 -3 5 -2 4 -4 4 -1 3 -3 4 -1 5 0 4M352 255l-6 2 -5 1 -3 1 -3 -1M352 255l1 -6 -1 -3 -4 -2 -4 -4 -3 -5M352 255l3 2 3 4 2 3 0 4 3 3 2 3M816 414l4 4 3 2 2 5 5 2 3 1 2 2 4 1 5 0 4 0M667 278l-4 3 -3 1 -4 2 -3 0 -5 1 -3 -1M503 444l-5 -2 -5 -1 -5 1 -6 1 -6 0 -4 1 -3 0M358 311l2 -3 2 -5 2 -6 1 -4 -1 -5 0 -4 -2 -5 1 -3M358 311l-1 -3 -1 -5 -5 -3 -5 -1M358 311l3 -2 4 -1 6 -1 4 -1 5 1 3 3 4 0M688 425l0 -4 -1 -5 -1 -6 0 -3 1 -4 -1 -6 0 -5 3 -5 2 -2M243 375l-5 1 -3 1 -4 3 -3 1 -3 1 -3 1 -4 2 -4 0 -5 -1M243 375l-3 -3 -1 -3 -3 -4 -3 -4 -3 -3M544 458l-3 -2 -3 -2 -2 -4 -2 -3 -2 -5 0 -4 1 -5 3 -5 2 -4M544 458l2 -4 3 -2 3 -2 4 -2 3 -2 1 -3M220 422l2 -4 2 -5 1 -5 3 -5 2 -5 0 -3 1 -3 1 -4M220 422l-3 3 -3 5 -3 4 -4 2 -2 4 -2 3 -2 2M220 422l5 -2 6 0 4 0 3 0M555 421l3 5 4 4 3 2 6 1 5 1 5 2 5 0 4 1M271 452l-2 5 -1 5 -2 3 1 3 -2 3 -4 4 -3 2M512 360l0 -3 0 -6 2 -5 2 -5 2 -3 0 -5 0 -4M512 360l-5 -1 -3 -1 -4 -2M512 360l-4 2 -3 2 -4 1 -4 2 -4 1M408 465l3 -1 4 0 5 0 4 -1 4 -2 5 -2 4 -2M763 345l0 5 2 4 0 4 -2 3 -1 3 -2 5 -2 5 -1 3M312 431l0 3 -2 3 -4 4 -4 2 -5 3 -2 2 -3 0 -4 3M774 466l5 3 5 2 3 2 3 1 5 1M774 466l-3 2 -4 0 -5 2 -5 2 -5 0 -3 1 -5 2 -2 2 -4 3M855 386l-2 4 0 5 -1 4 -1 4 -1 4 -4 3M290 464l1 -4 1 -5 0 -3 1 -5 0 -5 -1 -3 2 -6M317 325l-2 -4 -3 -5 1 -5 2 -3 1 -3 2 -5 1 -6 3 -3M317 325l-5 0 -3 -1 -2 -2 -3 -1 -5 1M420 373l3 3 3 4 4 3 3 1 5 3 4 2 3 4M420 373l-2 5 1 5 0 4M420 373l2 3 1 5 2 5M807 376l0 -3 1 -3 2 -4 3 -4 3 -3M807 376l-2 4 -2 3 -2 5 -2 3M436 380l4 3 3 2 4 1 4 -1 3 -1 5 1 5 3 4 0 4 -1M436 380l-3 -1 -3 -2 -3 -5 1 -6 -4 -4 -1 -4 -3 -5 -1 -3M436 380l5 1 5 0 4 -1M283 254l2 -5 2 -5 3 -3 0 -5 1 -5 2 -3 1 -5 1 -3 1 -4M283 254l3 0 4 1 5 -2 6 -2 4 -2 4 -1 4 1M639 365l-1 3 0 4 -1 4M639 365l-2 -4 -3 -2 -4 -1 -6 2 -3 0M242 465l-2 3 -2 4 -2 2 -1 4 -2 3 -2 3M377 350l3 4 3 4 0 5 3 5M285 340l3 3 3 2 5 1M285 340l1 4 1 5 0 4 -3 5 -5 3 -3 2 -4 1 -5 1M496 319l-2 3 -2 3 -2 5 -4 3 -4 3M496 319l0 3 -1 4 3 4M496 319l0 -4 2 -4 1 -3 1 -5 3 -3 6 -1 5 0M711 361l4 -4 4 -3 3 -3 3 -5 1 -5M711 361l-5 0 -3 0 -6 0 -6 -1 -5 0M522 459l4 -4 3 -1 3 -3 3 -2 4 -4M522 459l5 -2 4 -4 4 -4 1 -5 1 -4 -1 -4 -1 -5 0 -6 1 -4M524 440l-2 -3 -2 -4 -3 -1M798 273l-5 1 -4 3 -3 2 -5 2 -3 2 -4 1M798 273l0 -4 0 -4 0 -3 0 -3M238 420l-5 -4 -2 -4 -1 -5 0 -4 -2 -4 -3 -4 -2 -3 1 -4 1 -4M238 420l4 4 5 2 5 0 5 -1 4 2 3 1 3 -1 3 0 3 -1M238 420l-5 -1 -6 1 -5 0 -4 0 -4 0 -4 1 -6 2 -2 3M692 252l0 -4 1 -3 1 -3M692 252l-2 3 -2 4 -1 3 1 4 4 4 2 5 1 3 0 3 -1 4M478 457l4 2 3 0 6 0 4 1 5 0 3 1 3 0M478 457l3 0 4 1 6 0 4 -2M802 329l1 6 1 3 1 3 1 4M802 329l-1 -5 0 -5 2 -5 0 -5M875 364l5 2 3 -1 6 -1 4 0M683 451l0 -4 1 -5 0 -4 1 -6 3 -4 2 -4M683 451l5 0 3 -1 4 -1 4 -2 4 -1M500 449l-2 3 -4 4 -3 3 -3 5 -3 1 -2 3 -4 2M515 456l-1 3 -3 5 -2 3 -4 3 -3 4 0 6 2 5M515 456l3 1 5 1 6 1 4 3 5 3 2 3 2 4 4 3M250 454l-4 -2 -5 1 -5 -1 -5 -2 -3 -3 -5 0 -3 0 -4 -1M746 428l-3 -1 -4 -4 -2 -6 0 -4 -1 -4M746 428l-3 1 -1 6 0 4 0 4M769 392l-4 2 -3 2 -4 2 -3 2 -4 3 -2 4 -1 6 -5 3M769 392l5 -2 3 -2 6 0 5 0 4 -1 4 -2 2 -2 4 -2M529 337l-2 4 -3 4 -2 4 -1 5 -1 4 -1 4 0 5M529 337l3 -2 1 -5 3 -4 2 -3 0 -5 -2 -3 -6 -2 -3 -3 -1 -3M569 399l2 -4 2 -3 5 -4 2 -3 1 -3M638 453l4 -3 3 -2 4 -2 6 0 5 1 4 0 5 1 5 1 3 0M638 453l-3 -2 -4 0 -4 0 -4 0M512 288l-2 -4 -3 -4 -3 -5 -3 -2 -3 -3 -3 -2 -4 -2 -5 -4 -3 -1M512 288l1 -4 1 -5 -1 -3 -2 -5 -3 -4M614 273l3 4 0 4 0 4 0 5 3 4 4 4 2 5 1 4 3 3M559 266l-3 -5 -2 -4 -2 -4 -1 -3M559 266l2 -2 3 -5 2 -3 4 -2 2 -5 1 -4 1 -3M335 453l3 -2 3 -3 4 -2 4 -2 3 -3 4 -2 3 -1 3 -4M335 453l1 4 2 2 4 2 4 0 3 1M608 262l4 -2 3 -2 5 0M608 262l-4 1 -5 0 -5 -1M333 340l-2 -4 -1 -4 1 -4 1 -5 2 -5 1 -3 1 -5M667 294l5 0 3 -2 4 -4 5 -2 3 -4 2 -4 2 -3 0 -5 -1 -6M667 294l-1 3 0 4 2 6 3 2 3 2 4 3M624 313l-1 3 -4 2 -4 2 -5 2 -2 2 -4 4 -1 3M364 428l-4 4 -3 4 -1 4M432 389l-3 -2 -3 -5 -4 -3 -1 -3M750 441l-2 2 -4 2 -4 3 -3 3 -5 2 -5 0 -4 -1M576 281l-2 -3 -1 -6 -2 -3 0 -5 -1 -4 0 -4M367 410l1 4 1 5 3 5 1 3 0 4 1 3 -1 5 -3 5M367 410l-4 4 -4 2 -5 1 -5 -1 -4 -3M340 436l-3 -1 -3 -1 -4 -2 -5 -2 -4 -1 -5 -2 -3 -1 -4 1M340 436l-4 -3 0 -4 -2 -4 -2 -4M574 418l-5 -3 -3 -3 -3 -4 -2 -5 -3 -2 -3 0 -6 -1M745 282l-5 1 -3 2 -6 0 -3 2 -4 1 -3 0 -2 2 -1 4 0 5M745 282l1 -3 4 -3 5 1 3 2 2 2 3 2 2 5 0 4M704 334l-5 1 -5 -1 -6 -1 -3 0 -5 0 -6 0 -5 -2M615 346l-3 -4 -4 -4 -3 -2M305 305l-1 -4 -3 -5 -1 -3 1 -5M305 305l-1 4 -2 5 -4 4 -3 2 -4 3 -4 1 -4 0 -6 0 -5 1M667 362l0 4 -2 3 -2 4M368 375l-1 -6 -2 -4 -2 -4M368 375l-4 0 -3 1 -6 0 -3 -1 -5 1 -4 1 -6 0M671 429l0 -5 -1 -6 0 -3M671 429l2 -4 3 -5 3 -3 4 0 4 0 4 -1 4 -2 5 -3M681 293l4 3 4 3 3 3 4 3M323 325l-1 -3 -2 -4 -2 -4 0 -4M323 325l5 2 3 2 2 3 2 5M774 413l-2 -5 -2 -5 -3 -3 -3 -3 -3 -3M345 291l3 -4 2 -3 4 -3 5 0 3 0M345 291l-4 3 -3 2 -4 4 -2 4M345 291l5 2 6 -1 4 -2 5 -2 2 -2 3 -2 2 -4 3 -3M290 392l-5 3 -4 2 -4 1 -3 1 -6 0M640 259l1 4 2 5 1 3 2 3 1 3 1 4 0 4 -2 4M640 259l-3 1 -5 0 -5 -1 -5 -3 -5 -2 -4 -2 -3 -4 1 -4M640 259l-4 -2 -4 1 -5 2 -5 2 -2 2 -3 4 -2 2M650 361l-1 -3 -2 -3 0 -3M718 436l-3 -2 -3 -3 -5 -3 -3 -5 -4 -2 -3 -2 -4 -3 -3 -3 -3 -3M718 436l3 -1 4 -2 5 0 4 0 3 -2M718 436l-3 4 -4 3 -4 3 -2 4 -2 3 -2 3 -2 3 -1 5M356 295l0 3 1 4 1 5 0 5M236 390l4 0 5 -1 4 1 4 0 3 0 3 1 5 1 4 1M624 450l1 5 -2 4 -3 3 -2 4 -1 4 -1 5 0 5 1 5M305 347l1 -5 1 -5 4 -3 3 -3 3 -2 5 -3 2 -2 4 -2M305 347l-4 -4 -6 -2 -5 -2M431 376l-4 2 -4 1 -2 5 2 3 3 5 2 4M431 376l-3 -5 0 -3 2 -4 2 -4 0 -5 -1 -6 0 -4M537 471l4 -1 3 -1 3 -5 0 -5 1 -5 3 -4 4 -3 2 -2M633 273l-2 4 -1 3 0 4 0 6 2 4 1 6 1 4M639 396l-2 4 -1 6 -2 4 0 6 -2 5 0 4 -1 5 -2 5 -1 4M639 396l-4 3 -3 3 -3 3 -4 1M639 396l5 -1 4 0 3 1 5 2 3 1 6 1 5 -1 4 -2M225 313l-4 -1 -5 2 -2 3M784 291l4 2 5 1 4 1 4 -2 3 -2 6 -2M668 313l-5 2 -5 2 -4 2 -2 4 -4 2 -3 3 -1 3 0 6M279 297l3 4 3 3 4 4 2 3 2 3 2 2M366 397l-5 3 -5 3 -3 2 -6 -1 -4 -1M366 397l-5 -3 -4 -2 -4 -4 -3 -2 -1 -4 -2 -4 -3 -4M797 436l-5 -1 -6 -2 -4 -2 -5 -2 -5 0M340 458l1 -3 -1 -4 1 -5 2 -3 2 -3 4 -1 4 -3M340 458l-1 -5 -3 -3 -2 -2M295 314l-3 4 -2 4 -1 3 -3 5 -3 3 -4 3 -3 5M295 314l1 -4 1 -3 -1 -3 -1 -3 -1 -6 -2 -5 2 -5 1 -3 -1 -6M295 314l-5 -3 -5 -2 -4 -3 -4 -3 -4 -3 -3 -2 -4 -4 -4 -2 -3 -2M525 354l4 0 3 -2 3 -2 4 -2 4 0 4 1 5 2M525 354l2 4 3 5 2 2 3 1 4 4 3 2 5 3 3 1M586 273l3 4 3 4 3 3 2 5 1 5 2 4 0 4 0 3M586 273l3 -5 3 -3 3 -2 3 -5M586 324l2 2 4 3 4 4M569 404l6 1 5 0 5 -1 3 0 5 2 2 4 5 3 2 3M569 404l-3 -4 -3 -4 -2 -3 -3 -3M429 389l-5 -2 -5 -2 -4 -4 -2 -5 -2 -3 -4 -2 -4 -2 -4 -1M429 389l2 -4 0 -3 2 -4 3 -2 4 -3 3 -3 4 -4 2 -5M845 470l-5 3 -3 2 -2 3 -3 3M613 254l1 -5 2 -4 2 -2 4 -2 3 -2 6 -1M613 254l4 -2 5 -4 3 -1M413 403l-4 -1 -3 0 -5 -1 -4 1 -3 3 -6 0 -5 -2 -1 -5M370 273l-2 3 -1 6 0 5 2 4 1 3 0 3 -2 3 -4 3M370 273l2 5 2 3 4 3M441 452l-1 5 2 4 4 4M441 452l3 0 3 0 4 0 5 0 3 -1 5 1 5 -1M521 357l1 6 0 5 2 4 3 4 1 5 1 6 -2 4 -4 3M521 357l-2 -4 -2 -3 -4 -4 -4 -4 -2 -3M521 357l5 0 5 1 3 1 2 3 2 3 1 3 3 4 4 3M684 354l-2 -6 -1 -6 0 -5 1 -4 3 -4 4 -2 5 -3 5 -3 3 -3M270 374l-3 4 -1 3 -4 4 -4 4 -1 3 -1 3 -1 3M589 458l-4 -3 -6 -2 -3 -4 -5 0 -3 -1 -4 0 -5 -2 -4 2 -5 2M515 331l2 5 1 5 1 5 2 5 2 5 1 3 1 3 2 3 1 3M447 424l4 -1 4 -1 4 -2 6 0 3 1 5 1M447 424l-4 4 -4 3 -3 2M702 463l-1 -4 -2 -3 -1 -4M305 256l-5 0 -4 1 -3 1 -3 1 -5 0 -4 1 -4 1 -6 0 -5 -2M305 256l3 -1 4 -3 4 -2 4 -2 5 -3M305 256l1 3 2 4 3 4 4 4 2 4 -1 4 1 6 2 6M617 378l6 0 4 0 5 -2 3 -2 3 -3 4 -1 4 0 5 -2 5 1M617 378l-3 -5 0 -4 1 -6 0 -3 1 -4M580 404l-2 -4 0 -4 1 -3 2 -4 2 -5 3 -4M580 404l-1 5 1 6 2 4 3 2 4 3 4 4 2 3M346 306l-1 -3 -2 -3 -2 -4 -2 -3 -3 -2 -3 -5 -3 -5M572 309l-5 1 -5 0 -4 1 -3 0 -4 1 -6 1 -4 3 -3 0 -3 -1M572 309l3 -3 4 -2 3 -4 2 -4 4 -4 5 -4 3 -1M607 339l-3 0 -5 0 -4 -2 -4 -1 -6 -1 -4 -1 -3 2 -3 -1M584 366l5 -2 3 0 3 0M584 366l5 -4 2 -4 3 -4 0 -3 0 -6 0 -3M584 366l-1 -3 -4 -4 -3 -3 -4 -4M338 269l5 -1 3 -1 4 -1 4 -3 3 -2 4 -2M463 262l5 0 5 -2 6 -1 4 0 3 1 4 0 3 0M430 344l3 3 4 3 3 2 3 1 5 2 5 -1 4 -2 3 -3M430 344l-1 4 2 5 1 6 2 3 2 4M430 344l1 -3 1 -5 0 -3 -1 -3 1 -4 0 -4 -1 -4 -1 -6M764 321l0 -3 0 -5 -1 -5M764 321l-2 3 -1 3 -2 3 -1 3 -1 3 -2 4 -4 4 -2 3M268 461l-4 3 -2 2 0 5 0 5 1 4M268 461l2 3 1 4 1 5 1 4 1 3 4 2 3 1 3 1 4 2M838 294l-5 2 -5 4 -3 4M395 271l-3 0 -4 1 -4 -3M395 271l1 -5 1 -3 1 -4 0 -5 1 -4 1 -4 2 -3 1 -3 -2 -4M843 326l6 1 4 1 3 2 5 2M405 360l4 -1 3 -1 4 -1 4 -1 5 -2 5 -2 4 -2 4 0M405 360l-5 0 -3 -1 -4 -1M426 382l3 -3 2 -5 -1 -4 -2 -4M426 382l-4 -4 -2 -4 0 -4 0 -4 0 -3 -1 -4M426 382l2 -4 3 -3 3 -1 3 -2 0 -4 1 -5 3 -5 3 -2 5 -2M500 467l3 2 3 3 3 3 3 2M500 467l-4 1 -5 0 -4 1 -3 -1 -4 -1 -6 -1 -5 -1 -3 0 -3 -1M735 358l3 0 3 -1 3 -3 3 -3 2 -4 1 -4M735 358l-4 -2 -2 -2 -5 -2 -3 -2 -3 -2 -2 -2 -3 -2M472 388l3 -4 2 -5 2 -3 3 -2 3 -2M472 388l5 -3 5 -2 3 -2 3 -4 1 -3 3 -5M472 388l-3 2 -4 2 -2 2 -2 3M493 385l3 5 0 5 -1 4 -1 5 -2 6 -1 4 1 3 -1 5 0 3M673 386l-5 -3 -2 -5 0 -5 -2 -3 -1 -4 0 -4 -1 -6 -2 -4 -3 -3M601 469l-3 1 -5 3 -3 2 -2 6M834 379l-4 0 -3 2 -3 2M452 447l-1 3 -1 4 -1 3 0 5 -1 5 -1 4M452 447l0 5 2 3 3 4M374 274l-2 -4 -2 -3 -2 -5 0 -3 -2 -4 -5 -3M374 274l1 5 1 4 -1 5 0 5 1 5 1 5M229 258l1 3 1 5 0 4M229 258l-1 3 -3 4 -2 2 -3 -1 -3 -3M229 258l1 5 1 4 2 4M744 386l4 -1 3 0 4 1 5 1 5 -1 5 -3M778 399l5 1 4 2 4 2 3 3 2 4M609 425l-3 -5 0 -6 2 -4 3 -4 -1 -6M570 288l-3 1 -3 3 -4 2 -4 3M570 288l-4 -3 -4 -1 -5 -2 -5 -3 -4 -2 -3 -1 -3 -2 -3 -2M419 406l-2 4 -1 4 -1 3M419 406l0 4 3 2 2 6 0 4 0 3 -1 5 -2 5 1 6 1 3M433 453l-4 3 -2 3 -5 2 -3 3 -5 2M433 453l6 -2 6 0 3 2 5 2 3 4 2 4 4 4 6 1 5 -2M433 453l2 -4 -1 -3 0 -4 0 -5 -3 -5 -1 -4 -2 -4M689 412l3 -1 6 0 5 0 5 0 4 -1 3 2 3 4 5 3M406 452l3 -2 4 -3 2 -5 -2 -5 -1 -4 0 -5 -2 -5 0 -3 1 -5M406 452l5 2 2 4 3 3 3 0 5 2 3 3 1 4M406 452l4 -3 2 -2 3 -1 6 0M342 463l0 -5 -2 -4 0 -5 -2 -4 -1 -3 0 -6M511 447l-3 4 -2 4 -2 3 -3 5 -1 5M511 447l1 5 -1 3 -1 4 0 5 0 3 0 4M808 463l0 -3 -1 -5 0 -4 -1 -4 -1 -5 -3 -4 -4 -4M808 463l-2 -3 -3 -3 -3 -1 -3 -2 -3 -2M399 256l-2 -3 -2 -3 0 -4 0 -5 -1 -6 -2 -5 1 -4 1 -5M399 256l0 4 1 4 4 3 4 3 2 4 1 3 2 4M507 329l-3 3 -3 4 -3 3 -4 4 -3 2 -2 5 -3 5 -1 3M507 329l1 3 2 3 1 4M594 339l5 -3 4 -2 3 -1M281 354l2 -4 2 -2 2 -4 2 -5 0 -5 0 -5 0 -3 0 -5M797 419l3 4 2 3 2 4 2 6 1 5 -1 4 -1 5 -2 5 -5 4M363 307l2 4 1 5 3 4 1 3 0 3 1 3 0 4M363 307l1 5 1 4 1 3M363 307l0 -4 0 -4 0 -5 0 -3M348 308l3 1 5 0 5 3 5 1M423 457l3 -3 5 -2 4 -1 6 -1 5 -2 4 -1 4 -1 6 -1 3 1M423 457l4 -2 4 0 5 1 4 0M547 416l-2 3 -4 5 -3 3 -3 4 -3 4 -2 3 0 6 -1 4 2 5M547 416l1 5 0 5 -2 5 0 4 1 3 3 4M547 416l1 -6 1 -5 1 -4 4 -2 4 -3 1 -3 2 -3 3 -4M510 432l3 5 1 3 -1 5 -1 3 -1 3 -2 4 -2 3M510 432l2 -3 4 -2 3 -1 3 -3M815 339l-5 -1 -3 -1 -4 0 -4 0 -5 -3 -3 -1 -6 -2M815 339l4 -4 4 -3 4 0 5 -3 3 -1 5 -2M541 327l-1 -4 -4 -3 -4 0 -3 0M716 464l-5 1 -6 -1 -6 0 -3 1 -5 2M552 429l2 2 2 4 3 4 1 4 0 3 -5 4 -2 3M668 460l3 2 3 2 4 2 3 5 1 3 4 3 5 1M410 379l3 4 3 3 2 4 0 6 1 4M486 316l4 4 3 4 3 2 4 3 3 3 2 3 1 5M486 316l5 -2 5 -1 5 0 5 2 3 2M486 316l6 0 4 -1 3 0 4 0 5 1M706 389l0 4 1 3 2 5 1 3 2 5 -1 5 -1 5M706 389l-5 1 -6 0 -4 0 -3 0 -6 -1 -5 -1 -3 2M443 259l5 2 4 0 5 -1M443 259l-1 -6 -2 -3 -4 -4M362 446l5 2 4 3 3 3 3 3 2 4 2 5 3 3M259 401l3 1 5 -1 4 -4 2 -4 4 -2 4 -2 4 -1 3 1M243 366l4 -1 5 1 4 4 2 2 3 4 3 2 4 1 4 -3 2 -4M243 366l-4 0 -6 0 -4 0 -5 0 -5 3 -4 2 -5 1M328 254l4 -1 2 -3 1 -4M328 254l0 -6 -2 -4 -1 -3 0 -4 -1 -3 -2 -3M476 399l3 -3 4 -3 2 -4 3 -3M480 404l-3 0 -3 1 -3 2M480 404l-4 2 -4 2 -6 2 -5 1 -3 -1M480 404l6 2 6 2 4 1 4 4 5 1M248 359l-1 -3 -3 -2 -4 -4 -4 -5 -3 -1 -4 -1M248 359l3 -1 4 -1 4 -1 4 -2M297 302l-3 -2 -3 -2 -5 -1 -4 -2 -4 -1 -4 -2 -3 -1 -4 0 -3 1M297 302l4 0 5 0 3 0 4 1 3 4 4 3 4 0 6 1 5 2M297 302l1 -4 3 -5 4 -4 3 -3M342 256l3 -1 4 -3 2 -2 1 -3 0 -5 -1 -4 2 -4 2 -4M342 256l-4 -2 -5 -2 -5 -2 -3 -3 -4 -5 -5 -2 -5 -1 -4 -2 -5 1M342 256l4 -4 4 -3 3 -2 4 -2 4 -1 5 2 3 1 5 3M409 456l4 -3 4 -2 6 0 4 0 6 -1M409 456l0 6 -2 5 -1 6 -3 5 -5 2 -5 -2 -3 -1M255 391l1 3 1 4 -1 4 1 5 0 5 -1 3 -2 3 -4 3M255 391l-5 2 -4 2 -5 2 -3 1 -3 1 -3 1M326 357l-2 -5 -1 -4 -3 -5 -3 -5 -3 -3 0 -6 -2 -5 -2 -3M326 357l0 6 -1 4 2 4 2 3M392 410l-3 -5 -2 -3 0 -4 1 -3 3 -4 2 -3 -1 -5 -1 -3M392 410l0 4 -1 3 -2 4 -1 3 -1 4 -2 2 -3 3 -4 3 -2 4M346 351l-1 -3 0 -4 4 -2 3 -2 3 -2 3 -4 3 -4 3 -3 4 -4M383 322l3 0 5 1 3 -1 3 -2M383 322l5 -3 5 -3 2 -3 1 -4 1 -4 1 -5 3 -5 2 -4M383 322l-5 3 -5 2 -3 2 -3 2 -1 4M285 404l5 -3 3 -1 6 0M285 404l2 -3 4 -3 2 -3 3 -3 3 -1 6 -1 3 -3 5 -2M298 431l0 6 -2 4 -2 5 -1 4 -1 4 -2 4 -1 6 1 6 2 4M298 431l-4 0 -3 -1 -3 -1 -4 -3 -2 -4 -3 -3 -2 -3 -3 -3 -6 -1M424 300l-3 1 -3 1 -5 -1 -4 0 -3 2M424 300l-3 2 -5 1 -5 -3 -3 -1 -2 -3 -2 -3 -3 -5 -1 -4M424 300l3 2 4 2 3 1 6 1 6 -1 6 0 3 2 4 3M373 266l-3 1 -5 2 -3 4 -1 4 -3 2M373 266l5 -2 4 -4 4 0M373 266l5 -2 3 0 4 -1M441 411l-2 -4 0 -5 1 -3 1 -3 1 -3 4 -4 5 -3 3 -2M301 463l-5 2 -1 3 -1 3 -2 2 -2 6 -5 2 -5 2 -3 -2 -4 -2M449 451l6 -2 3 0 5 0 5 2 4 2 5 3 3 3M449 451l1 -3 2 -4 2 -4 2 -5 0 -5 2 -5 3 -4 6 0 6 2M449 451l-1 4 1 4 -1 3 -1 4 -1 5 1 3 4 4M458 451l5 -3 2 -2 5 -1M458 451l-1 -5 0 -5 1 -4 0 -4 -3 -4 -1 -3 0 -4 0 -3 1 -4M430 436l-5 1 -3 2 -3 3 -3 4 -2 4 -3 5 -3 2M430 436l2 3 1 4 1 3 0 4 -1 4 -1 4 -2 4 -3 2M380 469l-3 -2 -4 -3 -4 1 -3 -1 -4 -2M372 256l-5 3 -3 0 -4 -1 -5 -3 -4 -3 -4 -1M372 256l-1 5 1 4 -1 5 1 5 2 6 4 3 5 1 4 0 3 2M372 256l1 3 1 5 -1 4 -1 5 -2 5 -1 3 -4 3 -3 3 -1 3M464 367l1 -5 0 -3 1 -5 0 -4 1 -5 2 -5 2 -3M464 367l3 -3 2 -4 2 -4M463 421l5 -3 4 -4 2 -5M463 421l5 1 5 1 5 0 3 -1 3 0M463 421l5 1 4 -2 3 -2 4 -4M429 445l-4 3 -5 0 -3 -1 -6 -1 -3 3 -3 3 -2 4M429 445l-3 -4 -4 -4 -3 -2 -3 -2 -4 -4M429 445l-5 0 -5 0 -3 -1M325 428l-3 0 -6 2 -4 2 -3 5 -2 3M325 428l2 -3 3 -3 3 -3 2 -4M417 271l5 -1 5 -2 4 -2 4 -2 3 -3 3 -3 3 -5 1 -3M443 326l1 3 1 3 2 3 3 5 1 5 -1 5 0 6 1 4 0 5M221 410l3 -3 2 -4 -2 -5M430 405l0 -6 -3 -4 -3 -5 -3 -3 -3 -5 -1 -3 -1 -4 -2 -4M430 405l-3 -5 -3 -2 -5 -1 -5 1 -4 1M374 375l4 -3 4 -4 4 -2 3 -1 5 -1M299 263l4 2 5 2 5 1 3 0 4 0 4 1 5 2 5 1M299 263l4 0 4 0 4 1 3 1 6 -2 3 -1 5 -2 4 -1M299 263l-2 -3 -1 -4 -1 -5 -2 -4 1 -4 2 -5 2 -4M384 292l4 3 1 4 1 4 1 5 0 4 1 4M384 292l-3 2 -6 1 -3 1 -3 1 -4 3M384 292l3 -2 5 -3 5 -2M412 379l-2 -2 -3 -4 -3 -2 -3 -5 -1 -4 0 -5 0 -6M412 379l-6 1 -4 -1 -4 -1M318 434l-2 5 2 5 4 4 3 3 1 4 0 4 0 4M222 451l4 2 5 2 3 1M222 451l-4 3 -2 3 -3 2 -4 4M373 420l-3 -2 -5 -2 -3 -1 -5 -3 -6 -2 -3 -2 -3 -3 -4 -2 -2 -4M373 420l3 2 5 2 4 0 4 -1 4 0M477 380l4 -1 3 -2 2 -3 4 -4 6 -1 6 0 5 1 5 2M273 295l3 0 3 -1 5 2 5 1 4 1 4 1 4 2M273 295l-2 5 -3 4 -2 4 0 6 -2 5 -2 3 -3 2 -5 2M333 312l4 4 4 4 3 5M333 312l-3 -2 -4 0 -4 -1 -5 -2 -2 -2 -2 -2M271 391l-1 4 0 5 -4 4 -1 4 -1 4M464 444l-4 3 -3 5 -3 2 -2 3 -4 3 -3 3 -1 4 -2 2 -3 5M464 444l2 3 3 3 5 1 4 -1 3 0 4 -2 5 -3M464 444l-4 1 -6 0 -4 -2 -3 1M338 254l-2 4 -4 2 -2 5 -4 5 -3 4 -3 4 -1 4 -2 3 -4 4M338 254l5 -3 3 -1 3 -4M382 466l2 -3 3 -2 5 -2 3 -3 3 -2M418 382l2 -3 1 -3 1 -3 1 -4 3 -4 2 -4 2 -5M418 382l2 -6 1 -3 4 -3 2 -3 4 -4 3 -3M418 382l-3 1 -4 -1 -5 -2 -5 -1 -3 1 -4 5 -4 3 -1 3M440 332l4 -1 5 -2 5 1 3 1 5 3 6 0 4 0 4 -2M400 336l0 4 2 6 1 3M400 336l-1 4 -1 3 -3 5M400 336l3 5 2 5 2 3 3 2 3 5M258 349l3 2 4 0 5 2 3 4M258 349l-5 0 -3 1 -5 3 -4 3 -4 1 -3 3 -3 4 -2 4 0 5M258 349l-5 2 -5 2 -4 0 -6 0 -6 -1 -5 -2 -4 -1 -4 1M326 255l2 -4 1 -6 -1 -5 -2 -3 1 -3 -2 -5M326 255l-1 4 -3 4 -1 5M265 365l-3 -1 -5 -2 -4 -1 -6 -1 -6 2 -5 0 -3 0 -5 -2 -4 -1M426 434l-5 -3 -4 -2 -5 0 -4 -2 -2 -3M426 434l5 -1 4 -1 5 -2 4 0M363 461l0 5 0 3 1 4M246 338l-6 0 -4 1 -4 1 -5 2 -3 4 -4 2M246 338l-5 1 -3 1 -3 0 -6 -1 -5 -1 -5 -1 -5 -3M246 338l-5 -1 -4 -4 -2 -2 -3 -3M291 328l3 -4 0 -3 -2 -3M339 438l1 -5 0 -4 -1 -4 -1 -3 -2 -5 -3 -3 -4 -1 -5 2 -3 2M339 438l0 -3 -1 -4 -2 -2 -4 -1 -3 -1 -2 -4 -3 -5 -2 -2 -2 -4M419 252l5 2 5 1 4 2M419 252l0 4 1 3 4 4 1 3 1 3 2 4 1 3 1 3M310 390l1 -3 4 -3 4 -4 4 0M310 390l-3 -5 -1 -3 -2 -3 -1 -5M310 390l6 -1 5 -1 4 0 4 -1M234 289l-4 4 -4 4 -1 5 1 4M234 289l0 6 -1 5 -1 3 0 4 4 3 4 3M234 289l0 -3 -3 -5 -4 -4 -4 0 -5 -1 -5 0 -3 1 -4 4 -4 2M251 384l1 5 2 3 3 3 4 1 3 5M461 443l-5 2 -2 4 -3 5 -2 4M461 443l-3 1 -5 2 -4 3 -3 3M461 443l-3 -1 -6 0 -5 1 -4 -1 -4 -2 -3 -1M348 341l-1 -3 -3 -3 -2 -3 -2 -5 -2 -3 -1 -3 -2 -2M348 341l0 3 0 4 3 5 3 3 4 3M241 423l2 2 4 3 3 2 5 3 3 4 2 3 2 5 2 4 1 5M241 423l-6 -1 -3 -3 -2 -3 -5 0 -5 -1 -5 -1 -4 3 -5 2 -3 1M241 423l-3 2 -5 1 -4 -2M451 370l5 1 5 1 4 -1 6 2 4 1 4 1 3 2 3 4M451 370l-3 -2 -2 -5 -5 -3 -3 -3 -1 -4M339 300l4 -4 5 -3 6 -1 4 -1 4 -2M339 300l0 4 0 5 2 4 2 4 0 6 -2 4 -2 3 -2 6 -2 3M354 301l3 1 1 3 3 5 2 3M354 301l1 -5 0 -3 -2 -5 -3 -3 -2 -5 -2 -3 -1 -3M354 301l-3 4 -4 3 -2 5 -1 5 -1 4 0 4 -1 4 -2 5M273 393l-2 5 -1 4 -2 4M369 293l-1 6 -1 6 2 4 2 4 2 4 0 4M369 293l1 -5 5 -2 3 -1 2 -2 3 -4 5 -3M369 293l-3 -2 -4 -1 -4 0 -3 -1 -4 -3 -2 -3 0 -6 2 -5 2 -3M441 334l3 0 5 1 3 1 3 1M281 321l0 3 -2 4 -3 2 -3 2 -3 3 -3 2M281 321l-5 0 -3 -2 -5 -2M281 321l4 5 5 3 3 0 3 3 3 3 2 4M305 413l1 -3 -2 -3 -4 -3 -4 -4 -3 -4 -4 -2 -1 -3M305 413l3 -1 4 -1 4 0 5 1 5 1 6 0 4 1 4 1M234 393l-1 4 -1 3 -1 5 -4 4 -2 4M328 432l-1 -4 -4 -4 -5 -2 -4 -1 -3 -1 -3 -3M328 432l5 0 5 2 4 2 5 2 3 0M328 432l-1 -5 0 -5 3 -5 0 -5 0 -4M417 349l3 -2 5 0 3 0 3 1 2 3M417 349l0 3 1 5 2 3 4 2 3 2 4 4 2 3 1 4 -2 5M279 337l5 -2 5 -1 3 0 3 0 4 4 4 0 5 1 4 0M279 337l3 -3 1 -5 2 -4 3 -3 3 -1 3 -4 2 -3M279 337l-1 -3 -1 -3 1 -5 0 -3 -2 -3 -2 -2 -3 0 -4 -4 -3 -4M446 432l-5 1 -3 1 -5 2 -6 0 -6 0 -5 3 -4 2M446 432l4 -1 4 2 5 2 3 1 4 1 4 2 5 2M446 432l-4 -1 -4 0 -4 4 -4 0 -3 1 -4 2 -5 1 -3 1M284 394l2 -2 3 -2 4 -3 3 -3 3 -4 1 -4 2 -4M272 310l4 1 5 1 5 1 5 -1 5 -2M257 453l0 4 -1 4 1 3 1 4 0 4M442 468l-4 -3 -5 -2 -3 -1 -6 0 -6 0 -4 3 -1 4 -2 4 -2 5M442 468l3 -2 5 -3 5 -3 2 -4 2 -4 0 -3 1 -5 1 -5 0 -3M216 269l-5 0 -5 1 -4 2 -5 2 -3 2 -4 1 -4 0M216 269l-5 1 -3 1 -3 1M216 269l3 4 4 2 5 3 4 4 5 3 4 -1M478 306l5 -1 4 -2 3 -4 0 -5 -1 -5 -1 -4 -1 -5 0 -4 1 -5M478 306l4 -2 3 0 5 0 5 1 2 -2 4 -1 3 -2 3 -3M478 306l0 -3 -3 -4 -1 -5 2 -3 3 -1 5 0M477 461l4 -4 3 -4 3 -3 4 -3 1 -3 0 -3 3 -5M477 461l0 5 0 4 0 5 1 6 0 6 0 4 -1 4 -3 4M477 461l0 -5 -1 -3 -1 -3 -1 -4 1 -5 -1 -5 0 -5 1 -5 3 -5M361 295l6 -1 4 -1 3 -2 4 -4M361 295l2 4 4 4 3 3 4 3M384 382l-3 3 -5 4 -2 4 0 5 2 4M433 395l4 -2 5 -2 5 -1 3 1 5 2 4 0M433 395l2 3 2 5 -2 3 0 6 1 4M392 320l2 3 3 3 3 2 4 2M392 320l-4 0 -4 0 -3 0 -5 1 -4 2 -5 2 -3 4M289 344l5 1 3 -1 5 -2 5 1 3 1 4 0 5 0 4 -2 5 -2M289 344l4 -4 2 -3 3 -2 3 -1 3 -1 5 -2 5 0 5 1 5 -3M289 344l3 4 1 6 -2 4M476 326l2 3 3 4 3 5 3 4 2 2M476 326l-5 0 -3 0 -4 0 -3 0 -3 -3M476 326l1 -3 1 -5 -2 -3M345 301l-4 -3 -4 -4 -4 -2 -5 -1 -3 -1 -4 -2 -4 -2 -4 -1 -3 -1M345 301l-1 -4 1 -6 2 -5 0 -6 -1 -4 -2 -4 0 -3M345 301l3 -1 5 -2 4 -2 2 -4 3 -3M405 385l-3 0 -4 2 -5 2 -3 0M405 385l0 -4 1 -4 2 -3 3 -5 0 -5 -1 -4 -4 -4 -4 -2 -3 -3M386 418l4 -2 5 -3 4 -1M386 418l3 0 5 -1 4 0 5 -1 4 -1 5 -3 3 -2 2 -3 0 -6M386 418l-5 3 -3 2 -6 1 -3 0 -4 1 -5 0 -6 -1M465 338l4 1 3 0 4 1 3 2 2 5 2 5 -2 3 -2 3 -4 4M397 414l-4 4 -5 4 -2 2 -3 2M288 439l4 -3 2 -3 4 -3 2 -3 2 -3 4 -2 5 -2 5 0M401 315l-3 -2 -2 -3 -3 -2 -2 -4 -3 -5M443 284l-4 -4 -3 -2 -3 -2 -3 -1 -2 -3 -3 -3 -2 -4 -2 -3M443 284l-6 1 -4 1 -5 1 -3 4 -4 4 -2 5 -1 3M311 289l2 3 1 4 1 3M311 289l-4 1 -6 1 -5 1 -4 -2 -3 -1 -3 -2 -4 0 -5 -1 -3 2M311 289l3 -3 3 -2 4 -2 4 -4 3 -4M245 459l-3 3 -4 1 -3 1 -3 1M341 399l2 -5 1 -3 2 -6 1 -3 0 -5 -1 -4 -2 -3 -3 -3M475 364l2 -4 0 -4 -2 -4 -1 -4 -3 -4 1 -5 2 -6 1 -6M475 364l-3 4 -1 4 -4 4 -4 2 -5 3 -3 4 -4 4 -3 5M316 347l3 -3 2 -2 4 -5 1 -3 0 -3 -3 -5M430 311l5 2 5 3 2 5 2 4 2 5M430 311l5 2 6 -1 4 1 4 1 6 1 4 4 2 4 0 4M430 311l3 4 2 3 5 3M288 438l0 6 0 5 -1 3 -5 1 -5 1 -4 1M288 438l4 4 4 2 5 3 3 2 5 3 5 1 5 1 5 1M288 438l-4 0 -3 0 -5 -1 -4 0 -5 -2 -6 -2M228 322l-6 -2 -4 0 -3 -1 -5 -1 -6 -1 -3 -1M228 322l5 0 5 -2 4 0 5 0 5 0 3 1M400 317l-4 5 -3 4 -2 5 0 3 -2 3 -1 3 1 5M400 317l-1 5 -1 5 0 6 0 4M400 317l-4 1 -4 2 -4 2 -4 3 -3 3M456 274l6 -1 3 2 4 4 5 3 4 0 3 -1 5 1M456 274l-4 -4 -3 -4 -3 -5 -2 -5 -2 -4M327 269l-5 -1 -4 -1 -6 1 -5 0 -5 1 -5 3 -3 2 -4 2 -5 1M327 269l0 3 4 4 2 2 3 3 5 2 3 2M239 333l1 6 -1 3 -2 2M239 333l2 5 1 3 -2 6 1 4M390 450l-3 -1 -5 -2 -3 -2 -4 -2M390 450l0 4 -1 4 1 4 -1 3 0 6 0 5 -1 4 -2 3 -2 4M340 307l2 4 3 5 0 3M351 353l3 0 4 -2 4 -2 5 -3 5 1 5 2M351 353l-1 3 -1 3 -3 4M276 350l-4 0 -6 0 -4 0M477 286l-4 0 -5 2 -4 1 -6 0M477 286l-4 -1 -3 -1 -4 -3 -3 -5 -3 -3 -4 -4 -2 -3 -1 -5 0 -5M477 286l3 3 3 2 3 3 2 5M423 381l-2 -4 -2 -4 -2 -2 -2 -4 -3 -3 -3 -2 -5 -3 -5 -2M423 381l-3 -4 -3 -3 -2 -2M264 352l-3 2 -5 2 -5 0 -5 1 -4 2 -2 2M264 352l-4 -1 -4 -1 -5 0 -5 -1 -5 -1 -5 -2 -4 -2M264 352l0 -3 -5 -2 -3 -4 -4 -4 -3 -5 -2 -4 -3 -4 -2 -4M475 449l-5 -3 -5 0 -6 0M475 449l0 -3 -2 -4 -4 -4 -2 -3M475 449l3 1 4 4 3 4 1 3 2 3 3 2 2 3M472 393l-3 -2 -5 -1 -4 -1 -5 0 -3 2 -2 2 -5 2M472 393l5 2 3 1 3 2M385 278l-2 -3 -3 -5 -3 -3 -3 -5 -3 -3 -3 -2M385 278l-4 1 -4 0 -5 -2 -5 -2 -3 1 -6 1M397 421l3 0 3 0 3 0 6 1 3 0 5 0M397 421l-2 -5 -2 -5 -2 -3 -3 -3 -3 -4 -1 -3 0 -5 3 -5 2 -4M330 439l-3 -1 -5 -1 -3 1 -4 3 -2 2 -4 2M330 439l-5 -3 -5 -3 -2 -3 -2 -3 -3 -5 -2 -2 -3 -4 1 -5M472 405l-3 3 -3 2 -4 3M472 405l4 3 4 2 5 1 5 1 3 2M412 434l-6 0 -3 0 -3 -3 -1 -4 0 -5 -1 -3M412 434l-1 -4 0 -5 2 -3 1 -4M476 413l2 3 1 5 0 3 -1 4 -1 4 -3 3M476 413l6 0 5 -2 5 0 5 1 4 1 4 4M276 447l2 -2 3 -2 5 0 5 0 4 -2M473 383l-2 -4 0 -6 -1 -5 -1 -3 -3 -4M473 383l2 -2 -1 -4 -1 -6 -2 -3 0 -6M473 383l-5 4 0 5 -2 3 -2 4 -2 4M222 346l-2 5 -2 4 0 3 -2 5 -2 3 -1 5 -2 4 -4 3 -5 4M335 274l-3 3 -3 2 -3 4 -2 3M275 381l2 5 3 2 3 4 5 3 2 5 1 5 3 3M467 341l5 -3 3 0 4 4 4 3 5 0 3 1M467 341l-1 4 -3 4 -2 4M388 378l-2 -5 -1 -4 -2 -4 -2 -5 -1 -6M451 464l-6 -1 -6 0 -6 -2 -5 1M451 464l-2 4 -1 3 -4 4 -2 5 0 4 -1 5 -2 4 0 5M451 464l1 -4 1 -5 1 -4 0 -5 0 -6 0 -3M281 363l-3 0 -4 1 -4 4 -2 2 -1 3 -1 5 -1 4M408 340l0 4 -1 4 -4 3 -2 2M408 340l-5 -2 -4 -2 -5 -1 -4 2 -3 0 -5 -2 -5 -1M408 340l4 -3 3 -2 3 -2 5 0 5 3 3 2M376 400l0 -4 -2 -5 -1 -3 -1 -4 0 -3 -1 -5 1 -5 0 -3M450 423l2 5 -1 6 0 3 2 3 2 3 2 3 2 2 2 3 3 1M304 443l-5 -1 -4 -1 -5 -2M304 443l4 3 6 2 4 1 4 1 4 2 3 2 4 5 4 3M442 363l4 3 2 6 -1 4 0 5 0 4 -2 3M442 363l-2 3 -3 1 -5 2 -4 2 -4 3 -4 2 -4 3 -5 3M419 470l1 -3 2 -4 3 -2 4 0 5 1 3 1 3 2M425 286l-5 -3 -4 -2 -4 1 -5 3M425 286l0 5 -2 6 -3 3 -3 1 -3 2 -4 2M477 335l3 4 3 2 3 1 5 3 3 0 5 1 4 3 3 3M333 419l1 6 3 4 1 4 1 3 2 3 -1 4 -1 3 0 4 0 3M333 419l0 4 -1 3 -1 3 -1 4 0 4 0 6 1 4 0 4 0 4M303 332l-3 3 -3 2 -4 3 -3 2 -6 1 -5 3 -4 2 -3 1M303 332l2 4 4 4 3 4 5 2 3 1 4 -1 3 -3M303 332l1 3 -1 5 -1 4 -1 6 0 4 1 5 1 5M282 272l-1 3 2 4 0 6 1 6 0 5M282 272l-5 -2 -4 -1 -5 -1M332 332l3 1 5 1 4 2 5 2 4 1 2 2M332 332l1 4 2 5 0 3 1 6 3 5 3 3 2 5 2 2 3 2M261 255l-3 -2 -4 -3 -4 -2 -6 0 -5 -2 -4 0 -4 -1 -5 2 -3 5M261 255l1 -4 1 -3 0 -4 1 -3 -1 -6 -3 -2M261 255l-5 -3 -4 -1 -5 -2M262 256l-1 -5 -1 -5 -1 -5 -1 -5 -1 -3 -4 -3 -3 -2 -3 -4 -3 -2M262 256l1 3 2 6 4 3 5 3 4 2 1 4 2 3M284 280l1 -4 1 -4 2 -3 0 -3 0 -6 2 -3 2 -6M284 280l-3 -1 -2 -2 -3 -5 0 -3M381 318l2 -3 2 -4 2 -3 1 -5M381 318l-4 -2 -4 -1 -6 -1 -4 1 -5 -2 -6 -1M392 333l5 2 3 1 5 3 4 2 5 1 3 1 4 0 5 -1M392 333l-2 3 -3 5 -2 4 -4 3 -3 4 1 6 0 5M311 285l-2 3 -1 5 2 4 3 4 3 3M284 319l-4 1 -4 2 -5 2 -4 2 -3 3 -3 2M284 319l5 -4 4 -2 2 -5 3 -3M284 319l-2 3 -3 5 -3 3 -2 3 -3 3 -4 3 -3 2M251 342l-5 -2 -2 -3 -3 -2M251 342l-4 3 -4 2 -3 1 -5 -1 -5 -1M380 261l-5 -1 -4 1 -5 2 -4 0 -6 0 -5 -1M380 261l1 5 1 4 0 4M327 275l-5 0 -6 -1 -3 -2M327 275l5 -2 4 -3 1 -3 0 -5 1 -4 0 -3 1 -4M327 275l3 2 3 1 4 -1 4 -1 5 1 4 -1 5 -1M261 342l-3 -2 -3 -2 -2 -4 -2 -2 -3 -4 -4 -3 -3 -2 -6 0 -6 -1M261 342l3 0 5 -2 4 -2 3 -2M261 342l2 -2 3 -4 2 -3 5 -1 4 -1 3 -2M293 311l1 4 2 5 -1 3 0 3 0 5 2 5M293 311l3 1 4 0 4 -1 2 -2 1 -4M369 308l2 4 3 4 3 4 4 4 3 5 3 5 0 6 -1 5M369 308l3 -1 3 -3 4 -4 3 -3 3 -5 1 -5M369 308l2 4 3 3 1 3 2 4 1 6 0 4M291 266l0 6 1 6 0 3 -2 4 1 4 3 5 4 3 6 0 4 1M291 266l4 -4 2 -5 1 -5M291 266l4 -2 3 -5 5 0 4 0 5 -2M271 316l-5 -2 -4 0 -5 2M286 345l-2 -4 -2 -4 -2 -4 -2 -5 -2 -5M286 345l-3 -3 -2 -3 -4 -4 -2 -5 -2 -6 1 -3 0 -3 2 -6M384 294l-2 -5 0 -4 1 -6 1 -4 -2 -5 -1 -4 -1 -3M384 294l-3 2 -6 2 -4 -1 -4 -1 -3 -2 -5 -3 -3 -4 -4 -3M302 297l3 -1 4 -1 4 2 6 1 3 1 4 4 3 3 2 5 2 4M247 290l4 3 3 5 3 3 1 4 2 4 0 3 -1 4 0 5M345 255l-3 1 -3 1 -4 -2 -3 -2 -5 -1 -3 -1 -5 -1 -4 -1M345 255l-4 0 -4 0 -4 1 -6 0 -3 2M361 284l-5 0 -6 1 -4 -1 -3 1 -6 1 -5 -2 -4 -2M242 260l-4 3 -3 2 -3 5 -2 2M242 260l2 3 0 4 0 4 -2 3 0 5 1 4 -1 5 4 4 5 2M242 260l-2 3 -5 3 -5 2 -3 1 -4 3 -2 4 -3 4M349 286l2 3 2 3 1 3 3 5M349 286l3 -2 5 0 3 2 3 3 2 3 1 6M349 286l6 0 4 1 5 -2 3 -2 4 -4 2 -3 2 -3M344 337l-5 -2 -5 -3 -5 -2 -3 -2 -4 -3 -3 -1 -4 -2 -5 -3 -5 -1M344 337l4 3 4 1 3 -1 3 -3 2 -3 0 -6M344 337l5 2 4 2 3 3M304 299l-3 -5 -4 -3 -2 -4 -1 -5 0 -5M380 309l0 4 2 3 5 4 4 3 3 2 4 1 5 1 6 0 3 2M380 309l3 3 3 1 3 4 1 3 3 5 3 4M363 271l-4 4 -3 -1 -4 -1 -5 0 -3 0M363 271l-1 4 -1 5 3 5 3 5 2 4 3 3 3 2M336 253l-2 2 -2 3 -4 3 0 4 1 3 4 3 3 3 3 3 4 3M336 253l-2 2 -4 3 -3 3 -3 1 -3 1 -3 2 -3 3M336 253l5 -1 5 -3 4 -3 2 -5M261 296l-5 -1 -5 -2 -4 -2 -4 0M261 296l-2 -5 1 -4 0 -3M368 330l2 -5 1 -3 2 -2M368 330l1 -6 -2 -4 -1 -5M274 319l1 5 1 4 0 3 -1 3 0 5 -1 3 0 4 1 6M274 319l4 0 4 1 5 1 4 0 3 2 3 4 1 3 2 4M274 319l-4 1 -5 -2 -3 -4M331 337l-4 -2 -3 -5 -2 -4 0 -4M331 337l-3 4 -4 4 -2 4 0 5 -3 4 -2 3 -2 3M331 337l-5 -1 -5 -2 -2 -3 -3 -5 -4 -4 -4 -2M279 279l-3 5 -4 4 -3 2M279 279l4 2 4 1 3 0 3 1M279 279l-2 -3 -3 -3 -3 -4 -4 -3 -3 -2M346 257l-1 4 -2 5 -4 4M346 257l-1 5 -3 3 -3 4 -1 5 -5 3M277 291l-1 -4 -1 -4 0 -4M277 291l3 2 5 0 5 0M277 291l-5 0 -5 2 -5 -1 -4 1 -3 1 -5 1M337 299l-1 -6 -2 -5 -1 -3 -3 -3 -1 -3 -2 -3M265 253l-3 -5 -2 -4 0 -3 -2 -3M265 253l-1 -6 2 -5 2 -4 3 -4 4 -4 5 -3 4 -3M288 323l-4 0 -4 -1 -4 1M288 323l-4 2 -3 5 0 3M288 323l-3 -1 -3 -2 -2 -3 -3 -3 -2 -4 -1 -3 -3 -4 -3 -5M321 314l2 -6 1 -3 1 -5 3 -3 4 -4 4 -4 5 0 5 -1M321 314l4 0 4 0 6 0 4 1 5 1 4 0 4 1 5 0 4 0M321 314l4 -4 3 -4 3 -4 3 -2 2 -2 3 -2M386 342l0 6 -2 3 -3 2 -4 3M386 342l3 3 4 3 4 2 4 4 4 3 1 4M326 264l-3 0 -6 2 -3 2M326 264l-4 4 -5 3 -3 3 -2 4 -3 5 0 5M319 256l-5 -3 -3 -2 -6 0 -3 0 -4 3 -5 2M319 256l-2 -5 -1 -4 0 -4 0 -5 0 -6 0 -3 1 -3 3 -4 2 -2M319 256l3 -3 4 -3 3 0 5 -1 5 -1 5 0 3 2M340 255l-5 -1 -6 1 -4 1 -3 3M340 255l4 -3 2 -3 0 -5 -1 -4 -3 -4 -2 -5 -3 -2 -4 -3M245 275l-1 4 -2 5 -2 4 -2 5 0 3 1 5M245 275l4 -1 5 -2 3 -4 2 -5 -1 -6M340 319l2 -5 3 -4 1 -3M340 319l3 4 2 4 1 4 2 5 -1 4 1 4 3 4 2 5M340 319l0 -4 -1 -3 -1 -3 0 -4 -1 -4 2 -3M264 320l2 -6 1 -4 -1 -5 -1 -3 -2 -4 -3 -4 -4 -4 -2 -3 -4 -3M264 320l1 5 4 4 5 1 3 -2 3 -5M264 320l3 3 3 2 5 1 5 2M346 272l-3 2 -4 1 -5 1 -4 -1 -4 -3 -2 -4M346 272l-3 -3 -5 -2 -3 -4 0 -3 -1 -3M322 262l5 0 4 0 3 1 5 2 4 2 3 3M322 262l3 -3 2 -4 1 -5M281 339l0 5 -2 4 0 6 -2 3 -1 3M281 339l-3 -3 -3 -4 -2 -3 -3 -2 -5 0 -5 -1 -5 -1 -5 -1M362 343l3 -5 0 -4 4 -4M337 311l-3 -5 -4 -2 -3 -1 -3 0 -4 0 -6 0 -4 -2M337 311l5 -2 6 -1 3 0M337 311l-5 -3 -5 -2 -5 -1 -3 0 -5 -2 -4 -2 -5 -2 -4 -3 -3 -4M308 258l2 -4 3 -3 3 -4 2 -3 1 -4 1 -5 2 -5 0 -4M308 258l-3 4 -3 4 -3 5 -2 3 -3 2 -5 1M308 258l3 -3 4 1 5 2 3 0M315 293l-3 -1 -5 2 -5 3 -3 2 -3 2 -5 -2 -5 0 -5 -2M315 293l-3 -2 -4 -2 -3 -4M247 268l0 3 -3 4 -2 5 1 6M247 268l5 -2 2 -3 4 -2 2 -3M396 282l2 5 4 3 2 4 2 2 3 3 1 5 1 5 3 5 3 3M396 282l5 2 5 2 5 3 2 3M396 282l4 -3 4 -3 2 -3 4 -3 4 -3 2 -4 0 -4 1 -4M255 343l5 0 5 -1 3 -1 3 -2 3 -3 3 -4 3 -2 2 -3 4 -1M255 343l1 3 2 3 3 5 1 5M255 343l-1 -4 -3 -3 -4 -2 -5 -2 -3 -3 -2 -2 -2 -5M252 301l1 4 0 4 -1 6 -1 5 -2 5M252 301l-2 -5 0 -3 -1 -3 -1 -4 -2 -4 -2 -3 -2 -2 -4 -3 -2 -2M364 318l3 -2 3 -1 2 -3M364 318l-3 -3 -5 -3 -5 -2 -3 -3 -3 -2 -2 -3 -3 -4 -1 -5M364 318l4 0 4 0 6 1 4 1 3 0 4 -1 4 0 5 1M335 303l-1 4 0 5 2 3 2 4 5 2 3 2 5 -1 5 1 5 -1M251 313l-4 1 -5 1 -5 2 -4 1 -4 0 -4 -1 -3 -2 -4 -1 -5 -1M251 313l1 4 3 5 5 3 3 2 3 2M383 280l3 -3 2 -2 1 -3M246 330l-3 0 -3 0 -4 0 -4 2 -3 3M246 330l3 3 5 3 5 2 0 5 -3 5 -3 5 -4 3 -4 3M265 274l-4 1 -3 1 -3 3 -3 2 -5 3M265 274l5 0 5 0 4 0M304 339l0 5 -2 5 0 4 -1 4 0 4 1 6M304 339l2 4 1 5 1 3 1 5 0 4 -2 4 0 3 -2 5M304 339l-5 -2 -4 -2 -5 -3 -5 -1 -2 -2 -2 -3 -3 -2M311 339l-3 4 -4 1 -4 1 -5 3M311 339l-5 -3 -5 -2 -3 -1 -5 -1 -3 -2 -4 -2 -3 -4M259 261l5 -3 4 -1 4 -2 2 -2 2 -4M245 314l3 -2 3 -3 2 -3 0 -3 -2 -3 -3 -5M245 314l-5 0 -4 1 -5 2 -5 3 -2 3 -3 2 -2 3M295 327l1 4 1 5 4 5 1 3 1 4 -1 4 0 3 2 5 2 4M295 327l2 3 5 1 3 2 4 1 4 3 4 0 5 1 3 1M324 287l1 3 2 3 1 4 3 3 4 1 2 4M283 331l-3 3 -4 3 -4 1 -4 1 -3 -1 -5 2M340 333l3 1 6 0 4 -2 2 -5 1 -3 2 -3 3 -2 4 -2 4 -2M340 333l4 -1 4 0 4 0 4 2 2 3 4 3 3 3M284 273l-4 1 -2 2 -2 2 0 4 0 3 4 3 3 2M284 273l-4 3 -4 1 -5 2 -3 5 -1 6M370 251l-2 -3 -4 -2 -5 -1 -5 2 -1 3 -2 5 -2 5M370 251l-4 3 -3 2 -4 1 -6 2 -4 1 -4 -5 -2 -3 -2 -5M264 319l1 -5 3 -4 2 -3 5 -2 3 -1 5 -1 4 -1 4 -1M264 319l-3 -4 -4 -4 -4 -4 -1 -3 -1 -4 -3 -1M285 309l2 5 1 4 2 3 2 3 2 2 2 5 2 3M285 309l2 -5 0 -5 -1 -3 0 -4 1 -3 0 -4 -1 -4 -1 -6M361 295l1 6 -1 4 -1 6M361 295l-3 3 -4 2 -4 2 -1 5M361 295l4 3 4 3 4 1 4 3 4 5 4 4M272 257l-5 -1 -5 1 -3 0 -5 0 -5 -1 -4 -2M315 301l3 3 2 5 1 4 0 4 1 5 2 4 5 2 3 1M315 301l-1 6 -1 3 -1 5 -1 6 0 5 1 3 2 4 2 2M349 306l0 4 1 4 1 5 2 5M349 306l-1 3 -1 4 -1 3 -2 4M264 251l6 0 5 0 4 1 3 -1 5 -2 4 0 3 0M264 251l0 -4 2 -3 2 -2 4 0 4 0 4 0 5 -1M384 263l3 2 3 3 2 4 1 5 1 4 3 4M384 263l-3 0 -6 1 -3 1M384 263l3 -3 1 -5 1 -5 2 -5M258 267l1 -4 -1 -6 0 -4 4 -4 3 -4 2 -4 1 -3 2 -4M262 313l5 2 3 2 3 3 5 3 3 2 3 3 2 4M262 313l-4 -3 -5 -2 -4 -2 -5 0 -4 -1 -3 -2M262 313l-5 -2 -3 -2 -4 -1 -4 0 -3 0 -4 3 -6 -1 -3 -2 -5 -2M294 263l5 3 2 3 5 3 3 2M294 263l0 -6 -2 -5 -1 -4 -3 -3 -3 -2 -4 -3 -4 -3 -2 -2 -2 -4M255 264l-1 -4 -2 -5 -1 -4M260 324l-1 -5 1 -5 1 -6 1 -4 -1 -4 1 -3 1 -4 1 -5M260 324l3 1 6 -1 6 -1 4 -2M260 324l-5 -1 -5 1 -4 2M373 277l4 2 2 2 2 4 1 3 2 3 2 4 1 5M373 277l3 -1 4 -2 3 -1 4 -4 4 -2 3 1" fill="none" stroke="#eab3bf" stroke-width="0.65" opacity="0.85"/><polygon points="214.9,250.4 274.0,250.4 272.3,258.2 269.0,266.7 265.5,272.7 261.3,278.6 257.0,282.0 252.8,285.4 248.0,288.5 242.0,291.5 234.0,295.5 225.5,301.0 219.0,305.5 214.9,309.4" fill="#aad3df"/><polygon points="252.0,281.0 260.0,279.5 268.0,280.5 264.0,282.5 256.0,283.5" fill="#aad3df"/><polygon points="244.0,292.0 254.0,292.5 266.0,294.5 260.0,297.0 248.0,296.0" fill="#aad3df"/><polygon points="255.0,287.0 264.0,287.5 269.0,289.5 261.0,290.5" fill="#aad3df"/><polygon points="287.7,250.4 298.7,250.4 295.3,254.8 291.0,258.2 288.5,257.4" fill="#aad3df"/><polygon points="384.0,438.0 392.0,439.5 400.0,443.0 407.0,447.5 404.0,449.5 396.0,446.5 388.0,442.0" fill="#aad3df"/><polygon points="610.0,466.0 616.0,463.0 622.0,467.0 618.0,471.0 611.0,471.0" fill="#aad3df"/><polyline points="268.5,250.4 267.2,254.8 257,265.9 248.5,275.2 241.7,285.4 232,292 222,299 214.9,304" fill="none" stroke="#a7a0c4" stroke-width="0.8"/><polyline points="631.5,250.0 637.0,275.0 627.6,288.0 620.0,307.5 612.3,322.8 606.0,346.0" fill="none" stroke="#c9bfd0" stroke-width="0.7"/><polyline points="673.6,269.0 681.0,288.0 660.0,307.5 664.0,326.6 692.8,336.2 702.0,345.0" fill="none" stroke="#c9bfd0" stroke-width="0.7"/><polyline points="708.0,288.0 712.0,322.8 700.4,345.8 690.0,372.0" fill="none" stroke="#c9bfd0" stroke-width="0.7"/><polyline points="580.0,262.0 600.0,275.0 610.0,300.0 595.0,320.0" fill="none" stroke="#c9bfd0" stroke-width="0.7"/><polyline points="330.0,250.0 345.0,270.0 338.0,290.0 352.0,312.0 370.0,322.0 378.0,340.0" fill="none" stroke="#c9bfd0" stroke-width="0.7"/><polyline points="430.0,250.0 425.0,272.0 440.0,290.0 430.0,310.0 445.0,325.0 462.0,335.0" fill="none" stroke="#c9bfd0" stroke-width="0.7"/><polyline points="470.0,250.0 482.0,275.0 498.0,300.0 512.0,318.0" fill="none" stroke="#c9bfd0" stroke-width="0.7"/><polyline points="378.0,340.0 392.0,350.0 405.0,345.0 420.0,348.0 440.0,336.0 459.0,338.0" fill="none" stroke="#c9bfd0" stroke-width="0.7"/><polyline points="360.0,390.0 380.0,400.0 400.0,395.0 420.0,405.0 432.0,420.0 430.0,440.0" fill="none" stroke="#c9bfd0" stroke-width="0.7"/><polyline points="250.0,372.0 268.0,395.0 300.0,420.0 318.0,448.0 330.0,470.0" fill="none" stroke="#c9bfd0" stroke-width="0.7"/><polyline points="790.0,290.0 800.0,320.0 795.0,345.0 810.0,360.0 820.0,380.0 815.0,400.0 820.0,415.0" fill="none" stroke="#c9bfd0" stroke-width="0.7"/><polyline points="853.0,280.0 850.0,320.0 845.0,350.0 858.0,380.0 850.0,410.0" fill="none" stroke="#c9bfd0" stroke-width="0.7"/><polyline points="560.0,350.0 575.0,362.0 598.0,372.0 612.0,380.0" fill="none" stroke="#c9bfd0" stroke-width="0.7"/><polyline points="520.0,360.0 540.0,380.0 560.0,390.0 580.0,400.0" fill="none" stroke="#c9bfd0" stroke-width="0.7"/><polyline points="740.0,400.0 752.0,410.0 760.0,430.0 770.0,455.0 765.0,472.0" fill="none" stroke="#c9bfd0" stroke-width="0.7"/><polyline points="600.0,440.0 630.0,452.0 660.0,448.0 690.0,455.0 700.0,472.0" fill="none" stroke="#c9bfd0" stroke-width="0.7"/><polyline points="327.0,250.0 321.3,261.5 318.4,273.0 311.7,280.7 314.0,287.0 317.4,294.0 319.4,303.6 307.9,305.5 306.0,313.2 306.0,319.0" fill="none" stroke="#dcd5e2" stroke-width="2.2" opacity="0.8" stroke-linejoin="round"/><polyline points="244.0,296.0 252.0,295.5 267.0,297.5 281.0,296.5 289.0,298.5 295.0,301.0 304.0,304.0 307.9,305.5" fill="none" stroke="#dcd5e2" stroke-width="2.2" opacity="0.8" stroke-linejoin="round"/><polyline points="306.0,319.0 317.4,324.7 319.4,332.4 317.4,340.0 317.4,349.6 321.3,365.0 315.5,367.2" fill="none" stroke="#dcd5e2" stroke-width="2.2" opacity="0.8" stroke-linejoin="round"/><polyline points="317.4,340.0 307.9,349.6 298.3,357.3" fill="none" stroke="#dcd5e2" stroke-width="2.2" opacity="0.8" stroke-linejoin="round"/><polyline points="221.7,309.4 225.5,315.1 233.2,326.6 244.7,332.4 260.0,334.3 265.7,340.0 265.7,351.5 279.0,345.8 281.0,357.7 290.6,363.4 298.3,367.2 307.9,369.2 315.5,367.2 327.0,374.9 332.8,382.6 344.3,384.5 359.6,388.3 365.3,394.1" fill="none" stroke="#dcd5e2" stroke-width="2.2" opacity="0.8" stroke-linejoin="round"/><polyline points="365.3,394.1 363.4,399.8 359.6,407.5 355.8,417.0 352.0,430.5 350.0,440.0" fill="none" stroke="#dcd5e2" stroke-width="2.2" opacity="0.8" stroke-linejoin="round"/><polyline points="350.0,440.0 340.4,445.8 332.8,457.3 325.0,468.8 322.0,472.0" fill="none" stroke="#dcd5e2" stroke-width="2.2" opacity="0.8" stroke-linejoin="round"/><polyline points="350.0,440.0 363.4,440.0 378.7,438.1 394.0,436.2 405.5,445.8" fill="none" stroke="#dcd5e2" stroke-width="2.2" opacity="0.8" stroke-linejoin="round"/><polyline points="405.5,445.8 410.0,452.0 414.0,460.0 420.0,466.0 430.0,472.0" fill="none" stroke="#dcd5e2" stroke-width="2.2" opacity="0.8" stroke-linejoin="round"/><polyline points="405.5,445.8 417.0,447.7 430.4,449.6 441.9,449.6 455.3,445.8 466.8,440.0 478.3,440.0 486.0,438.1 487.9,432.4 484.0,426.6 486.0,422.8 497.4,417.0 501.3,407.5 512.8,405.6" fill="none" stroke="#dcd5e2" stroke-width="2.2" opacity="0.8" stroke-linejoin="round"/><polyline points="468.7,338.1 472.5,345.0 474.5,352.0 476.4,361.5 482.1,373.0 489.8,382.6 501.3,390.2 509.0,399.8 512.8,405.6" fill="none" stroke="#dcd5e2" stroke-width="2.2" opacity="0.8" stroke-linejoin="round"/><polyline points="468.7,338.1 474.5,336.2 486.0,330.5 501.3,324.7 516.6,320.9 520.4,311.3 528.1,311.3 537.7,301.7" fill="none" stroke="#dcd5e2" stroke-width="2.2" opacity="0.8" stroke-linejoin="round"/><polyline points="530.0,250.0 528.1,261.5 531.0,274.9 528.1,284.5 533.8,294.0 537.7,301.7" fill="none" stroke="#dcd5e2" stroke-width="2.2" opacity="0.8" stroke-linejoin="round"/><polyline points="537.7,301.7 551.0,300.0 561.0,307.0 569.0,321.0 574.0,334.3 585.5,338.1 597.0,342.0 606.6,347.7 618.0,351.5 625.7,355.4 621.9,365.0 634.0,364.0 644.0,367.0 653.0,374.0 659.2,382.5 668.2,378.0 684.8,375.0 698.3,374.3 710.4,376.5 722.4,384.0 730.0,387.0 736.0,390.0" fill="none" stroke="#dcd5e2" stroke-width="2.2" opacity="0.8" stroke-linejoin="round"/><polyline points="512.8,405.6 520.0,410.0 528.1,415.1 534.0,421.0 539.6,422.8 548.0,418.0 556.8,415.1 566.0,413.0 574.0,415.1 581.0,412.0 587.0,409.0 589.0,416.0" fill="none" stroke="#dcd5e2" stroke-width="2.2" opacity="0.8" stroke-linejoin="round"/><polyline points="587.0,409.0 596.0,397.0 608.0,388.0 618.0,385.0 622.0,378.0 621.9,365.0" fill="none" stroke="#dcd5e2" stroke-width="2.2" opacity="0.8" stroke-linejoin="round"/><polyline points="589.0,416.0 590.4,425.3 592.0,434.3 587.3,443.4 585.0,455.0 590.0,472.0" fill="none" stroke="#dcd5e2" stroke-width="2.2" opacity="0.8" stroke-linejoin="round"/><polyline points="591.8,423.8 605.4,434.3 615.8,438.9 627.9,435.8 633.6,424.0 636.6,423.2 650.0,424.7 662.2,420.2 672.7,417.2 680.2,409.6 687.8,406.6 696.8,408.1 704.3,411.2 710.4,415.7 717.9,411.2" fill="none" stroke="#dcd5e2" stroke-width="2.2" opacity="0.8" stroke-linejoin="round"/><polyline points="736.0,390.0 728.4,388.6 719.4,405.1 717.9,411.2" fill="none" stroke="#dcd5e2" stroke-width="2.2" opacity="0.8" stroke-linejoin="round"/><polyline points="717.9,411.2 725.4,420.2 734.5,426.2" fill="none" stroke="#dcd5e2" stroke-width="2.2" opacity="0.8" stroke-linejoin="round"/><polyline points="725.4,420.2 725.4,435.3 717.9,444.3 713.4,456.3 708.9,468.4 708.0,472.0" fill="none" stroke="#dcd5e2" stroke-width="2.2" opacity="0.8" stroke-linejoin="round"/><polyline points="746.3,250.0 744.4,263.4 754.0,271.0 755.0,286.0 758.0,297.0 764.0,312.0 768.0,319.0 766.0,330.0 754.0,342.0 742.5,359.2 733.0,370.7 735.0,385.0 736.0,390.0" fill="none" stroke="#dcd5e2" stroke-width="2.2" opacity="0.8" stroke-linejoin="round"/><polyline points="756.0,288.0 772.0,278.0 795.0,274.0 808.0,275.0 829.0,279.0 846.0,282.0 847.0,288.0 860.0,289.0 869.0,285.0 878.1,290.0" fill="none" stroke="#dcd5e2" stroke-width="2.2" opacity="0.8" stroke-linejoin="round"/><polyline points="700.0,408.7 719.0,414.5 734.5,425.0 746.0,427.0 763.0,430.8 780.5,431.7 790.0,437.5 799.6,431.7 815.0,428.8 824.5,422.0 834.0,415.4 845.6,413.5 857.0,412.6 868.6,417.4 878.1,424.0" fill="none" stroke="#dcd5e2" stroke-width="2.2" opacity="0.8" stroke-linejoin="round"/><polyline points="834.0,415.4 841.8,422.0 847.5,433.6 853.3,445.0 859.0,456.6 864.8,464.3 868.0,472.0" fill="none" stroke="#dcd5e2" stroke-width="2.2" opacity="0.8" stroke-linejoin="round"/><polyline points="327.0,250.0 321.3,261.5 318.4,273.0 311.7,280.7 314.0,287.0 317.4,294.0 319.4,303.6 307.9,305.5 306.0,313.2 306.0,319.0" fill="none" stroke="#a096ab" stroke-width="1.2" stroke-linejoin="round"/><polyline points="244.0,296.0 252.0,295.5 267.0,297.5 281.0,296.5 289.0,298.5 295.0,301.0 304.0,304.0 307.9,305.5" fill="none" stroke="#a096ab" stroke-width="1.2" stroke-linejoin="round"/><polyline points="306.0,319.0 317.4,324.7 319.4,332.4 317.4,340.0 317.4,349.6 321.3,365.0 315.5,367.2" fill="none" stroke="#a096ab" stroke-width="1.2" stroke-linejoin="round"/><polyline points="317.4,340.0 307.9,349.6 298.3,357.3" fill="none" stroke="#a096ab" stroke-width="1.2" stroke-linejoin="round"/><polyline points="221.7,309.4 225.5,315.1 233.2,326.6 244.7,332.4 260.0,334.3 265.7,340.0 265.7,351.5 279.0,345.8 281.0,357.7 290.6,363.4 298.3,367.2 307.9,369.2 315.5,367.2 327.0,374.9 332.8,382.6 344.3,384.5 359.6,388.3 365.3,394.1" fill="none" stroke="#a096ab" stroke-width="1.2" stroke-linejoin="round"/><polyline points="365.3,394.1 363.4,399.8 359.6,407.5 355.8,417.0 352.0,430.5 350.0,440.0" fill="none" stroke="#a096ab" stroke-width="1.2" stroke-linejoin="round"/><polyline points="350.0,440.0 340.4,445.8 332.8,457.3 325.0,468.8 322.0,472.0" fill="none" stroke="#a096ab" stroke-width="1.2" stroke-linejoin="round"/><polyline points="350.0,440.0 363.4,440.0 378.7,438.1 394.0,436.2 405.5,445.8" fill="none" stroke="#a096ab" stroke-width="1.2" stroke-linejoin="round"/><polyline points="405.5,445.8 410.0,452.0 414.0,460.0 420.0,466.0 430.0,472.0" fill="none" stroke="#a096ab" stroke-width="1.2" stroke-linejoin="round"/><polyline points="405.5,445.8 417.0,447.7 430.4,449.6 441.9,449.6 455.3,445.8 466.8,440.0 478.3,440.0 486.0,438.1 487.9,432.4 484.0,426.6 486.0,422.8 497.4,417.0 501.3,407.5 512.8,405.6" fill="none" stroke="#a096ab" stroke-width="1.2" stroke-linejoin="round"/><polyline points="468.7,338.1 472.5,345.0 474.5,352.0 476.4,361.5 482.1,373.0 489.8,382.6 501.3,390.2 509.0,399.8 512.8,405.6" fill="none" stroke="#a096ab" stroke-width="1.2" stroke-linejoin="round"/><polyline points="468.7,338.1 474.5,336.2 486.0,330.5 501.3,324.7 516.6,320.9 520.4,311.3 528.1,311.3 537.7,301.7" fill="none" stroke="#a096ab" stroke-width="1.2" stroke-linejoin="round"/><polyline points="530.0,250.0 528.1,261.5 531.0,274.9 528.1,284.5 533.8,294.0 537.7,301.7" fill="none" stroke="#a096ab" stroke-width="1.2" stroke-linejoin="round"/><polyline points="537.7,301.7 551.0,300.0 561.0,307.0 569.0,321.0 574.0,334.3 585.5,338.1 597.0,342.0 606.6,347.7 618.0,351.5 625.7,355.4 621.9,365.0 634.0,364.0 644.0,367.0 653.0,374.0 659.2,382.5 668.2,378.0 684.8,375.0 698.3,374.3 710.4,376.5 722.4,384.0 730.0,387.0 736.0,390.0" fill="none" stroke="#a096ab" stroke-width="1.2" stroke-linejoin="round"/><polyline points="512.8,405.6 520.0,410.0 528.1,415.1 534.0,421.0 539.6,422.8 548.0,418.0 556.8,415.1 566.0,413.0 574.0,415.1 581.0,412.0 587.0,409.0 589.0,416.0" fill="none" stroke="#a096ab" stroke-width="1.2" stroke-linejoin="round"/><polyline points="587.0,409.0 596.0,397.0 608.0,388.0 618.0,385.0 622.0,378.0 621.9,365.0" fill="none" stroke="#a096ab" stroke-width="1.2" stroke-linejoin="round"/><polyline points="589.0,416.0 590.4,425.3 592.0,434.3 587.3,443.4 585.0,455.0 590.0,472.0" fill="none" stroke="#a096ab" stroke-width="1.2" stroke-linejoin="round"/><polyline points="591.8,423.8 605.4,434.3 615.8,438.9 627.9,435.8 633.6,424.0 636.6,423.2 650.0,424.7 662.2,420.2 672.7,417.2 680.2,409.6 687.8,406.6 696.8,408.1 704.3,411.2 710.4,415.7 717.9,411.2" fill="none" stroke="#a096ab" stroke-width="1.2" stroke-linejoin="round"/><polyline points="736.0,390.0 728.4,388.6 719.4,405.1 717.9,411.2" fill="none" stroke="#a096ab" stroke-width="1.2" stroke-linejoin="round"/><polyline points="717.9,411.2 725.4,420.2 734.5,426.2" fill="none" stroke="#a096ab" stroke-width="1.2" stroke-linejoin="round"/><polyline points="725.4,420.2 725.4,435.3 717.9,444.3 713.4,456.3 708.9,468.4 708.0,472.0" fill="none" stroke="#a096ab" stroke-width="1.2" stroke-linejoin="round"/><polyline points="746.3,250.0 744.4,263.4 754.0,271.0 755.0,286.0 758.0,297.0 764.0,312.0 768.0,319.0 766.0,330.0 754.0,342.0 742.5,359.2 733.0,370.7 735.0,385.0 736.0,390.0" fill="none" stroke="#a096ab" stroke-width="1.2" stroke-linejoin="round"/><polyline points="756.0,288.0 772.0,278.0 795.0,274.0 808.0,275.0 829.0,279.0 846.0,282.0 847.0,288.0 860.0,289.0 869.0,285.0 878.1,290.0" fill="none" stroke="#a096ab" stroke-width="1.2" stroke-linejoin="round"/><polyline points="700.0,408.7 719.0,414.5 734.5,425.0 746.0,427.0 763.0,430.8 780.5,431.7 790.0,437.5 799.6,431.7 815.0,428.8 824.5,422.0 834.0,415.4 845.6,413.5 857.0,412.6 868.6,417.4 878.1,424.0" fill="none" stroke="#a096ab" stroke-width="1.2" stroke-linejoin="round"/><polyline points="834.0,415.4 841.8,422.0 847.5,433.6 853.3,445.0 859.0,456.6 864.8,464.3 868.0,472.0" fill="none" stroke="#a096ab" stroke-width="1.2" stroke-linejoin="round"/><g font-family="Liberation Sans, sans-serif" stroke="rgba(255,255,255,0.55)" stroke-width="1.4" paint-order="stroke"><text x="297.0" y="254.8" font-size="6.0" fill="#4e4e4e" textLength="28.0" lengthAdjust="spacingAndGlyphs">Haarlem</text><text x="283.6" y="265.4" font-size="7.6" fill="#8f6f9b" textLength="34.4" lengthAdjust="spacingAndGlyphs">Nederland</text><text x="349.6" y="259.4" font-size="6.0" fill="#4e4e4e" textLength="28.1" lengthAdjust="spacingAndGlyphs">Osnabrück</text><text x="254.7" y="277.5" font-size="7.4" fill="#3d3d3d" textLength="30.2" lengthAdjust="spacingAndGlyphs">Den Haag</text><text x="299.9" y="279.2" font-size="6.0" fill="#4e4e4e" textLength="19.9" lengthAdjust="spacingAndGlyphs">Arnhem</text><text x="329.2" y="276.2" font-size="6.0" fill="#4e4e4e" textLength="21.3" lengthAdjust="spacingAndGlyphs">Münster</text><text x="365.0" y="278.4" font-size="6.0" fill="#4e4e4e" textLength="21.0" lengthAdjust="spacingAndGlyphs">Bielefeld</text><text x="238.4" y="290.7" font-size="6.0" fill="#4e4e4e" textLength="28.9" lengthAdjust="spacingAndGlyphs">Middelburg</text><text x="285.4" y="293.4" font-size="6.0" fill="#4e4e4e" textLength="27.2" lengthAdjust="spacingAndGlyphs">Eindhoven</text><text x="338.4" y="294.1" font-size="5.6" fill="#9d80a9" textLength="24.8" lengthAdjust="spacingAndGlyphs" font-style="italic">Nordrhein-</text><text x="339.7" y="300.8" font-size="5.6" fill="#9d80a9" textLength="23.5" lengthAdjust="spacingAndGlyphs" font-style="italic">Westfalen</text><text x="233.0" y="302.5" font-size="6.0" fill="#4e4e4e" textLength="19.0" lengthAdjust="spacingAndGlyphs">Brugge</text><text x="252.9" y="310.8" font-size="5.6" fill="#9d80a9" textLength="27.1" lengthAdjust="spacingAndGlyphs" font-style="italic">Vlaanderen</text><text x="314.7" y="312.0" font-size="7.4" fill="#3d3d3d" textLength="34.0" lengthAdjust="spacingAndGlyphs">Düsseldorf</text><text x="354.7" y="315.9" font-size="6.0" fill="#4e4e4e" textLength="17.0" lengthAdjust="spacingAndGlyphs">Siegen</text><text x="304.4" y="320.0" font-size="6.0" fill="#4e4e4e" textLength="19.0" lengthAdjust="spacingAndGlyphs">Aachen</text><text x="333.0" y="321.2" font-size="6.0" fill="#4e4e4e" textLength="14.0" lengthAdjust="spacingAndGlyphs">Bonn</text><text x="232.0" y="325.0" font-size="7.4" fill="#3d3d3d" textLength="11.8" lengthAdjust="spacingAndGlyphs">Lille</text><text x="271.0" y="326.5" font-size="7.6" fill="#8f6f9b" textLength="24.4" lengthAdjust="spacingAndGlyphs">België /</text><text x="418.9" y="253.6" font-size="6.0" fill="#4e4e4e" textLength="27.1" lengthAdjust="spacingAndGlyphs">Wolfsburg</text><text x="391.2" y="265.4" font-size="7.4" fill="#3d3d3d" textLength="30.0" lengthAdjust="spacingAndGlyphs">Hannover</text><text x="478.6" y="262.7" font-size="6.0" fill="#4e4e4e" textLength="22.6" lengthAdjust="spacingAndGlyphs">Potsdam</text><text x="528.2" y="262.2" font-size="5.6" fill="#9d80a9" textLength="33.8" lengthAdjust="spacingAndGlyphs" font-style="italic">województwo</text><text x="535.4" y="267.8" font-size="5.6" fill="#9d80a9" textLength="19.9" lengthAdjust="spacingAndGlyphs" font-style="italic">lubuskie</text><text x="440.6" y="271.0" font-size="5.6" fill="#9d80a9" textLength="20.8" lengthAdjust="spacingAndGlyphs" font-style="italic">Sachsen-</text><text x="443.3" y="277.9" font-size="5.6" fill="#9d80a9" textLength="16.3" lengthAdjust="spacingAndGlyphs" font-style="italic">Anhalt</text><text x="541.7" y="281.6" font-size="6.0" fill="#4e4e4e" textLength="18.9" lengthAdjust="spacingAndGlyphs">Zielona</text><text x="545.0" y="288.0" font-size="6.0" fill="#4e4e4e" textLength="12.6" lengthAdjust="spacingAndGlyphs">Góra</text><text x="511.6" y="289.3" font-size="6.0" fill="#4e4e4e" textLength="20.4" lengthAdjust="spacingAndGlyphs">Cottbus</text><text x="511.1" y="295.6" font-size="6.0" fill="#4e4e4e" textLength="24.8" lengthAdjust="spacingAndGlyphs">Chóśebuz</text><text x="391.8" y="298.3" font-size="6.0" fill="#4e4e4e" textLength="16.2" lengthAdjust="spacingAndGlyphs">Kassel</text><text x="461.4" y="297.0" font-size="7.4" fill="#3d3d3d" textLength="22.0" lengthAdjust="spacingAndGlyphs">Leipzig</text><text x="406.8" y="308.4" font-size="7.6" fill="#8f6f9b" textLength="41.6" lengthAdjust="spacingAndGlyphs">Deutschland</text><text x="433.9" y="318.0" font-size="5.6" fill="#9d80a9" textLength="24.2" lengthAdjust="spacingAndGlyphs" font-style="italic">Thüringen</text><text x="474.0" y="326.0" font-size="6.0" fill="#4e4e4e" textLength="24.4" lengthAdjust="spacingAndGlyphs">Chemnitz</text><text x="496.0" y="316.5" font-size="5.6" fill="#9d80a9" textLength="16.0" lengthAdjust="spacingAndGlyphs" font-style="italic">Sachsen</text><text x="497.0" y="339.5" font-size="5.6" fill="#9d80a9" textLength="31.0" lengthAdjust="spacingAndGlyphs" font-style="italic">Severozápad</text><text x="580.3" y="255.6" font-size="5.6" fill="#9d80a9" textLength="32.5" lengthAdjust="spacingAndGlyphs" font-style="italic">województwo</text><text x="580.3" y="262.3" font-size="5.6" fill="#9d80a9" textLength="31.7" lengthAdjust="spacingAndGlyphs" font-style="italic">wielkopolskie</text><text x="650.8" y="255.8" font-size="6.0" fill="#4e4e4e" textLength="12.6" lengthAdjust="spacingAndGlyphs">Płock</text><text x="673.8" y="271.1" font-size="7.4" fill="#3d3d3d" textLength="31.2" lengthAdjust="spacingAndGlyphs">Warszawa</text><text x="633.6" y="274.4" font-size="7.6" fill="#8f6f9b" textLength="21.7" lengthAdjust="spacingAndGlyphs">Polska</text><text x="609.2" y="280.2" font-size="6.0" fill="#4e4e4e" textLength="14.5" lengthAdjust="spacingAndGlyphs">Kalisz</text><text x="632.7" y="287.3" font-size="5.6" fill="#9d80a9" textLength="32.6" lengthAdjust="spacingAndGlyphs" font-style="italic">województwo</text><text x="640.8" y="294.0" font-size="5.6" fill="#9d80a9" textLength="17.2" lengthAdjust="spacingAndGlyphs" font-style="italic">łódzkie</text><text x="684.6" y="303.4" font-size="6.0" fill="#4e4e4e" textLength="18.1" lengthAdjust="spacingAndGlyphs">Radom</text><text x="556.8" y="314.4" font-size="5.6" fill="#9d80a9" textLength="32.5" lengthAdjust="spacingAndGlyphs" font-style="italic">województwo</text><text x="557.0" y="320.4" font-size="5.6" fill="#9d80a9" textLength="32.3" lengthAdjust="spacingAndGlyphs" font-style="italic">dolnośląskie</text><text x="625.1" y="318.6" font-size="6.0" fill="#4e4e4e" textLength="33.9" lengthAdjust="spacingAndGlyphs">Częstochowa</text><text x="668.0" y="321.6" font-size="5.6" fill="#9d80a9" textLength="33.4" lengthAdjust="spacingAndGlyphs" font-style="italic">województwo</text><text x="668.0" y="328.0" font-size="5.6" fill="#9d80a9" textLength="33.4" lengthAdjust="spacingAndGlyphs" font-style="italic">świętokrzyskie</text><text x="785.0" y="252.9" font-size="5.6" fill="#9d80a9" textLength="23.6" lengthAdjust="spacingAndGlyphs" font-style="italic">Брэсцкая</text><text x="785.0" y="259.2" font-size="5.6" fill="#9d80a9" textLength="23.6" lengthAdjust="spacingAndGlyphs" font-style="italic">вобласць</text><text x="713.3" y="272.1" font-size="6.0" fill="#4e4e4e" textLength="17.5" lengthAdjust="spacingAndGlyphs">Siedlce</text><text x="748.9" y="276.7" font-size="7.4" fill="#3d3d3d" textLength="16.8" lengthAdjust="spacingAndGlyphs">Брэст</text><text x="811.0" y="274.2" font-size="6.0" fill="#4e4e4e" textLength="13.8" lengthAdjust="spacingAndGlyphs">Пінск</text><text x="718.0" y="301.2" font-size="5.6" fill="#9d80a9" textLength="32.7" lengthAdjust="spacingAndGlyphs" font-style="italic">województwo</text><text x="724.0" y="307.7" font-size="5.6" fill="#9d80a9" textLength="21.0" lengthAdjust="spacingAndGlyphs" font-style="italic">lubelskie</text><text x="776.0" y="305.9" font-size="5.6" fill="#9d80a9" textLength="27.0" lengthAdjust="spacingAndGlyphs" font-style="italic">Волинська</text><text x="778.0" y="312.6" font-size="5.6" fill="#9d80a9" textLength="23.0" lengthAdjust="spacingAndGlyphs" font-style="italic">область</text><text x="818.0" y="312.0" font-size="5.6" fill="#9d80a9" textLength="27.6" lengthAdjust="spacingAndGlyphs" font-style="italic">Рівненська</text><text x="822.0" y="318.9" font-size="5.6" fill="#9d80a9" textLength="20.0" lengthAdjust="spacingAndGlyphs" font-style="italic">область</text><text x="856.0" y="326.0" font-size="5.6" fill="#9d80a9" textLength="34.0" lengthAdjust="spacingAndGlyphs" font-style="italic">Житомирська</text><text x="862.0" y="332.5" font-size="5.6" fill="#9d80a9" textLength="22.0" lengthAdjust="spacingAndGlyphs" font-style="italic">область</text><text x="788.7" y="331.1" font-size="7.4" fill="#3d3d3d" textLength="18.9" lengthAdjust="spacingAndGlyphs">Луцьк</text><text x="812.7" y="335.8" font-size="7.4" fill="#3d3d3d" textLength="17.6" lengthAdjust="spacingAndGlyphs">Рівне</text><text x="867.0" y="350.3" font-size="7.4" fill="#3d3d3d" textLength="29.0" lengthAdjust="spacingAndGlyphs">Житомир</text><text x="266.5" y="335.3" font-size="7.6" fill="#8f6f9b" textLength="33.9" lengthAdjust="spacingAndGlyphs">Belgique /</text><text x="271.0" y="343.1" font-size="7.6" fill="#8f6f9b" textLength="24.7" lengthAdjust="spacingAndGlyphs">Belgien</text><text x="244.4" y="336.6" font-size="6.0" fill="#4e4e4e" textLength="13.9" lengthAdjust="spacingAndGlyphs">Mons</text><text x="342.0" y="336.6" font-size="6.0" fill="#4e4e4e" textLength="20.3" lengthAdjust="spacingAndGlyphs">Koblenz</text><text x="221.2" y="352.3" font-size="5.6" fill="#9d80a9" textLength="23.5" lengthAdjust="spacingAndGlyphs" font-style="italic">Hauts-de-</text><text x="224.8" y="358.6" font-size="5.6" fill="#9d80a9" textLength="16.3" lengthAdjust="spacingAndGlyphs" font-style="italic">France</text><text x="360.0" y="355.5" font-size="7.4" fill="#3d3d3d" textLength="39.9" lengthAdjust="spacingAndGlyphs">Frankfurt am</text><text x="372.0" y="364.2" font-size="7.4" fill="#3d3d3d" textLength="15.2" lengthAdjust="spacingAndGlyphs">Main</text><text x="295.7" y="362.6" font-size="7.6" fill="#8f6f9b" textLength="37.6" lengthAdjust="spacingAndGlyphs">Letzebuerg</text><text x="360.0" y="378.2" font-size="6.0" fill="#4e4e4e" textLength="28.0" lengthAdjust="spacingAndGlyphs">Mannheim</text><text x="254.7" y="387.4" font-size="6.0" fill="#4e4e4e" textLength="15.3" lengthAdjust="spacingAndGlyphs">Reims</text><text x="320.7" y="389.0" font-size="6.0" fill="#4e4e4e" textLength="32.5" lengthAdjust="spacingAndGlyphs">Saarbrücken</text><text x="214.0" y="394.2" font-size="7.4" fill="#3d3d3d" textLength="14.0" lengthAdjust="spacingAndGlyphs">Paris</text><text x="360.0" y="396.6" font-size="6.0" fill="#4e4e4e" textLength="25.4" lengthAdjust="spacingAndGlyphs">Karlsruhe</text><text x="295.0" y="400.2" font-size="5.6" fill="#9d80a9" textLength="23.9" lengthAdjust="spacingAndGlyphs" font-style="italic">Grand Est</text><text x="382.9" y="333.0" font-size="5.6" fill="#9d80a9" textLength="15.1" lengthAdjust="spacingAndGlyphs" font-style="italic">Hessen</text><text x="413.5" y="363.4" font-size="6.0" fill="#4e4e4e" textLength="25.3" lengthAdjust="spacingAndGlyphs">Würzburg</text><text x="424.8" y="381.9" font-size="7.4" fill="#3d3d3d" textLength="30.2" lengthAdjust="spacingAndGlyphs">Nürnberg</text><text x="454.1" y="395.4" font-size="5.6" fill="#9d80a9" textLength="16.7" lengthAdjust="spacingAndGlyphs" font-style="italic">Bayern</text><text x="420.1" y="402.2" font-size="6.0" fill="#4e4e4e" textLength="27.7" lengthAdjust="spacingAndGlyphs">Ingolstadt</text><text x="642.7" y="345.2" font-size="7.4" fill="#3d3d3d" textLength="27.5" lengthAdjust="spacingAndGlyphs">Katowice</text><text x="561.0" y="353.4" font-size="6.0" fill="#4e4e4e" textLength="25.2" lengthAdjust="spacingAndGlyphs">Pardubice</text><text x="545.0" y="363.9" font-size="7.6" fill="#8f6f9b" textLength="17.2" lengthAdjust="spacingAndGlyphs">Česko</text><text x="611.5" y="356.5" font-size="6.0" fill="#4e4e4e" textLength="20.5" lengthAdjust="spacingAndGlyphs">Ostrava</text><text x="654.4" y="357.7" font-size="5.6" fill="#9d80a9" textLength="32.6" lengthAdjust="spacingAndGlyphs" font-style="italic">województwo</text><text x="657.0" y="364.1" font-size="5.6" fill="#9d80a9" textLength="28.0" lengthAdjust="spacingAndGlyphs" font-style="italic">małopolskie</text><text x="702.0" y="355.0" font-size="5.6" fill="#9d80a9" textLength="34.2" lengthAdjust="spacingAndGlyphs" font-style="italic">województwo</text><text x="703.0" y="361.4" font-size="5.6" fill="#9d80a9" textLength="33.2" lengthAdjust="spacingAndGlyphs" font-style="italic">podkarpackie</text><text x="682.4" y="385.8" font-size="5.6" fill="#9d80a9" textLength="23.6" lengthAdjust="spacingAndGlyphs" font-style="italic">Prešovský</text><text x="689.0" y="392.1" font-size="5.6" fill="#9d80a9" textLength="9.0" lengthAdjust="spacingAndGlyphs" font-style="italic">kraj</text><text x="577.5" y="368.2" font-size="5.6" fill="#9d80a9" textLength="34.5" lengthAdjust="spacingAndGlyphs" font-style="italic">Střední Morava</text><text x="543.0" y="344.6" font-size="5.6" fill="#9d80a9" textLength="29.0" lengthAdjust="spacingAndGlyphs" font-style="italic">Severovýchod</text><text x="556.0" y="385.0" font-size="5.6" fill="#9d80a9" textLength="25.0" lengthAdjust="spacingAndGlyphs" font-style="italic">Jihovýchod</text><text x="497.0" y="368.8" font-size="6.0" fill="#4e4e4e" textLength="13.0" lengthAdjust="spacingAndGlyphs">Plzeň</text><text x="500.0" y="381.0" font-size="5.6" fill="#9d80a9" textLength="25.0" lengthAdjust="spacingAndGlyphs" font-style="italic">Jihozápad</text><text x="750.7" y="363.2" font-size="5.6" fill="#9d80a9" textLength="24.4" lengthAdjust="spacingAndGlyphs" font-style="italic">Львівська</text><text x="752.0" y="370.0" font-size="5.6" fill="#9d80a9" textLength="22.0" lengthAdjust="spacingAndGlyphs" font-style="italic">область</text><text x="823.0" y="369.5" font-size="5.6" fill="#9d80a9" textLength="33.5" lengthAdjust="spacingAndGlyphs" font-style="italic">Хмельницька</text><text x="829.0" y="375.8" font-size="5.6" fill="#9d80a9" textLength="22.0" lengthAdjust="spacingAndGlyphs" font-style="italic">область</text><text x="865.5" y="390.3" font-size="5.6" fill="#9d80a9" textLength="27.5" lengthAdjust="spacingAndGlyphs" font-style="italic">Вінницька</text><text x="867.0" y="396.6" font-size="5.6" fill="#9d80a9" textLength="22.0" lengthAdjust="spacingAndGlyphs" font-style="italic">область</text><text x="813.0" y="395.6" font-size="6.0" fill="#4e4e4e" textLength="34.4" lengthAdjust="spacingAndGlyphs">Кам’янець-</text><text x="813.0" y="401.3" font-size="6.0" fill="#4e4e4e" textLength="34.4" lengthAdjust="spacingAndGlyphs">Подільський</text><text x="711.0" y="403.7" font-size="6.0" fill="#4e4e4e" textLength="23.4" lengthAdjust="spacingAndGlyphs">Ужгород</text><text x="758.0" y="403.9" font-size="5.6" fill="#9d80a9" textLength="47.8" lengthAdjust="spacingAndGlyphs" font-style="italic">Івано-Франківська</text><text x="771.0" y="410.6" font-size="5.6" fill="#9d80a9" textLength="22.0" lengthAdjust="spacingAndGlyphs" font-style="italic">область</text><text x="365.0" y="405.7" font-size="5.6" fill="#9d80a9" textLength="49.4" lengthAdjust="spacingAndGlyphs" font-style="italic">Baden-Württemberg</text><text x="347.8" y="420.7" font-size="6.0" fill="#4e4e4e" textLength="21.7" lengthAdjust="spacingAndGlyphs">Freiburg</text><text x="343.3" y="427.0" font-size="6.0" fill="#4e4e4e" textLength="30.7" lengthAdjust="spacingAndGlyphs">im Breisgau</text><text x="345.6" y="443.9" font-size="6.0" fill="#4e4e4e" textLength="13.1" lengthAdjust="spacingAndGlyphs">Basel</text><text x="365.5" y="449.5" font-size="7.4" fill="#3d3d3d" textLength="20.5" lengthAdjust="spacingAndGlyphs">Zürich</text><text x="271.0" y="451.2" font-size="5.6" fill="#9d80a9" textLength="27.0" lengthAdjust="spacingAndGlyphs" font-style="italic">Bourgogne-</text><text x="275.0" y="458.1" font-size="5.6" fill="#9d80a9" textLength="20.7" lengthAdjust="spacingAndGlyphs" font-style="italic">Franche-</text><text x="277.7" y="464.8" font-size="5.6" fill="#9d80a9" textLength="15.5" lengthAdjust="spacingAndGlyphs" font-style="italic">Comté</text><text x="314.4" y="460.1" font-size="6.0" fill="#4e4e4e" textLength="25.3" lengthAdjust="spacingAndGlyphs">Besançon</text><text x="359.4" y="467.2" font-size="7.6" fill="#8f6f9b" textLength="28.9" lengthAdjust="spacingAndGlyphs">Schweiz/</text><text x="423.0" y="413.8" font-size="6.0" fill="#4e4e4e" textLength="24.8" lengthAdjust="spacingAndGlyphs">Augsburg</text><text x="407.0" y="420.7" font-size="6.0" fill="#4e4e4e" textLength="11.0" lengthAdjust="spacingAndGlyphs">Ulm</text><text x="437.9" y="432.1" font-size="7.4" fill="#3d3d3d" textLength="28.9" lengthAdjust="spacingAndGlyphs">München</text><text x="485.8" y="426.8" font-size="5.6" fill="#9d80a9" textLength="36.2" lengthAdjust="spacingAndGlyphs" font-style="italic">Oberösterreich</text><text x="477.6" y="443.9" font-size="6.0" fill="#4e4e4e" textLength="23.2" lengthAdjust="spacingAndGlyphs">Salzburg</text><text x="515.0" y="443.8" font-size="7.6" fill="#8f6f9b" textLength="34.7" lengthAdjust="spacingAndGlyphs">Österreich</text><text x="437.0" y="458.8" font-size="5.6" fill="#9d80a9" textLength="10.0" lengthAdjust="spacingAndGlyphs" font-style="italic">Tirol</text><text x="524.7" y="460.7" font-size="5.6" fill="#9d80a9" textLength="27.3" lengthAdjust="spacingAndGlyphs" font-style="italic">Steiermark</text><text x="517.0" y="399.7" font-size="6.0" fill="#4e4e4e" textLength="14.0" lengthAdjust="spacingAndGlyphs">České</text><text x="510.0" y="406.2" font-size="6.0" fill="#4e4e4e" textLength="28.0" lengthAdjust="spacingAndGlyphs">Budějovice</text><text x="567.0" y="418.2" font-size="6.0" fill="#4e4e4e" textLength="13.0" lengthAdjust="spacingAndGlyphs">Brno</text><text x="634.0" y="406.7" font-size="7.6" fill="#8f6f9b" textLength="37.6" lengthAdjust="spacingAndGlyphs">Slovensko</text><text x="688.0" y="409.0" font-size="6.0" fill="#4e4e4e" textLength="16.0" lengthAdjust="spacingAndGlyphs">Košice</text><text x="594.7" y="426.3" font-size="7.4" fill="#3d3d3d" textLength="30.8" lengthAdjust="spacingAndGlyphs">Bratislava</text><text x="675.0" y="423.4" font-size="6.0" fill="#4e4e4e" textLength="19.0" lengthAdjust="spacingAndGlyphs">Miskolc</text><text x="603.8" y="439.2" font-size="6.0" fill="#4e4e4e" textLength="7.2" lengthAdjust="spacingAndGlyphs">Győr</text><text x="626.4" y="445.1" font-size="7.4" fill="#3d3d3d" textLength="28.9" lengthAdjust="spacingAndGlyphs">Budapest</text><text x="693.3" y="445.2" font-size="6.0" fill="#4e4e4e" textLength="21.7" lengthAdjust="spacingAndGlyphs">Debrecen</text><text x="563.0" y="456.0" font-size="6.0" fill="#4e4e4e" textLength="33.0" lengthAdjust="spacingAndGlyphs">Szombathely</text><text x="678.0" y="456.3" font-size="5.6" fill="#9d80a9" textLength="20.7" lengthAdjust="spacingAndGlyphs" font-style="italic">Alföld és</text><text x="681.0" y="462.5" font-size="5.6" fill="#9d80a9" textLength="13.0" lengthAdjust="spacingAndGlyphs" font-style="italic">Észak</text><text x="619.0" y="463.2" font-size="7.6" fill="#8f6f9b" textLength="47.2" lengthAdjust="spacingAndGlyphs">Magyarország</text><text x="592.0" y="471.5" font-size="5.6" fill="#9d80a9" textLength="21.7" lengthAdjust="spacingAndGlyphs" font-style="italic">Dunántúl</text><text x="794.0" y="420.5" font-size="5.6" fill="#9d80a9" textLength="31.7" lengthAdjust="spacingAndGlyphs" font-style="italic">Чернівецька</text><text x="800.0" y="426.8" font-size="5.6" fill="#9d80a9" textLength="22.0" lengthAdjust="spacingAndGlyphs" font-style="italic">область</text><text x="723.6" y="435.2" font-size="6.0" fill="#4e4e4e" textLength="25.8" lengthAdjust="spacingAndGlyphs">Satu Mare</text><text x="820.3" y="436.6" font-size="6.0" fill="#4e4e4e" textLength="22.6" lengthAdjust="spacingAndGlyphs">Botoșani</text><text x="741.6" y="448.2" font-size="6.0" fill="#4e4e4e" textLength="25.4" lengthAdjust="spacingAndGlyphs">Baia Mare</text><text x="858.0" y="445.2" font-size="6.0" fill="#4e4e4e" textLength="12.0" lengthAdjust="spacingAndGlyphs">Bălți</text><text x="800.4" y="449.0" font-size="5.6" fill="#9d80a9" textLength="20.8" lengthAdjust="spacingAndGlyphs" font-style="italic">Suceava</text><text x="734.4" y="457.8" font-size="6.0" fill="#4e4e4e" textLength="13.6" lengthAdjust="spacingAndGlyphs">Zalău</text><text x="710.0" y="471.0" font-size="6.0" fill="#4e4e4e" textLength="12.7" lengthAdjust="spacingAndGlyphs">Oradea</text></g><polygon points="503.7,309.6 497.8,319.4 509.6,319.4" fill="#2fb344" stroke="#fff" stroke-width="2.8" stroke-linejoin="round" paint-order="stroke"/><polygon points="503.7,314.0 501.3,317.5 506.1,317.5" fill="#fff"/><polygon points="462.6,322.0 456.7,331.8 468.5,331.8" fill="#2fb344" stroke="#fff" stroke-width="2.8" stroke-linejoin="round" paint-order="stroke"/><polygon points="462.6,326.4 460.2,329.9 465.0,329.9" fill="#fff"/><polygon points="472.8,338.9 466.9,348.7 478.7,348.7" fill="#2fb344" stroke="#fff" stroke-width="2.8" stroke-linejoin="round" paint-order="stroke"/><polygon points="472.8,343.3 470.4,346.8 475.2,346.8" fill="#fff"/><polygon points="502.8,332.2 496.9,342.0 508.7,342.0" fill="#2fb344" stroke="#fff" stroke-width="2.8" stroke-linejoin="round" paint-order="stroke"/><polygon points="502.8,336.6 500.4,340.1 505.2,340.1" fill="#fff"/><polygon points="548.9,345.7 543.0,355.5 554.8,355.5" fill="#2fb344" stroke="#fff" stroke-width="2.8" stroke-linejoin="round" paint-order="stroke"/><polygon points="548.9,350.1 546.5,353.6 551.3,353.6" fill="#fff"/><polygon points="490.2,360.4 484.3,370.2 496.1,370.2" fill="#2fb344" stroke="#fff" stroke-width="2.8" stroke-linejoin="round" paint-order="stroke"/><polygon points="490.2,364.8 487.8,368.3 492.6,368.3" fill="#fff"/><polygon points="508.2,368.3 502.3,378.1 514.1,378.1" fill="#2fb344" stroke="#fff" stroke-width="2.8" stroke-linejoin="round" paint-order="stroke"/><polygon points="508.2,372.7 505.8,376.2 510.6,376.2" fill="#fff"/><polygon points="531.5,364.2 525.6,374.0 537.4,374.0" fill="#2fb344" stroke="#fff" stroke-width="2.8" stroke-linejoin="round" paint-order="stroke"/><polygon points="531.5,368.6 529.1,372.1 533.9,372.1" fill="#fff"/><polygon points="553.0,370.6 547.1,380.4 558.9,380.4" fill="#2fb344" stroke="#fff" stroke-width="2.8" stroke-linejoin="round" paint-order="stroke"/><polygon points="553.0,375.0 550.6,378.5 555.4,378.5" fill="#fff"/><polygon points="463.7,369.4 457.8,379.2 469.6,379.2" fill="#2fb344" stroke="#fff" stroke-width="2.8" stroke-linejoin="round" paint-order="stroke"/><polygon points="463.7,373.8 461.3,377.3 466.1,377.3" fill="#fff"/><polygon points="492.0,389.1 486.1,398.9 497.9,398.9" fill="#2fb344" stroke="#fff" stroke-width="2.8" stroke-linejoin="round" paint-order="stroke"/><polygon points="492.0,393.5 489.6,397.0 494.4,397.0" fill="#fff"/><polygon points="520.9,395.4 515.0,405.2 526.8,405.2" fill="#2fb344" stroke="#fff" stroke-width="2.8" stroke-linejoin="round" paint-order="stroke"/><polygon points="520.9,399.8 518.5,403.3 523.3,403.3" fill="#fff"/><polygon points="543.5,386.8 537.6,396.6 549.4,396.6" fill="#2fb344" stroke="#fff" stroke-width="2.8" stroke-linejoin="round" paint-order="stroke"/><polygon points="543.5,391.2 541.1,394.7 545.9,394.7" fill="#fff"/><polygon points="541.7,412.4 535.8,422.2 547.6,422.2" fill="#2fb344" stroke="#fff" stroke-width="2.8" stroke-linejoin="round" paint-order="stroke"/><polygon points="541.7,416.8 539.3,420.3 544.1,420.3" fill="#fff"/><polygon points="573.9,309.9 568.0,319.7 579.8,319.7" fill="#2fb344" stroke="#fff" stroke-width="2.8" stroke-linejoin="round" paint-order="stroke"/><polygon points="573.9,314.3 571.5,317.8 576.3,317.8" fill="#fff"/><polygon points="606.7,325.7 600.8,335.5 612.6,335.5" fill="#2fb344" stroke="#fff" stroke-width="2.8" stroke-linejoin="round" paint-order="stroke"/><polygon points="606.7,330.1 604.3,333.6 609.1,333.6" fill="#fff"/><polygon points="571.6,337.0 565.7,346.8 577.5,346.8" fill="#2fb344" stroke="#fff" stroke-width="2.8" stroke-linejoin="round" paint-order="stroke"/><polygon points="571.6,341.4 569.2,344.9 574.0,344.9" fill="#fff"/><polygon points="587.9,352.8 582.0,362.6 593.8,362.6" fill="#2fb344" stroke="#fff" stroke-width="2.8" stroke-linejoin="round" paint-order="stroke"/><polygon points="587.9,357.2 585.5,360.7 590.3,360.7" fill="#fff"/><polygon points="631.3,346.0 625.4,355.8 637.2,355.8" fill="#2fb344" stroke="#fff" stroke-width="2.8" stroke-linejoin="round" paint-order="stroke"/><polygon points="631.3,350.4 628.9,353.9 633.7,353.9" fill="#fff"/><polygon points="579.5,373.1 573.6,382.9 585.4,382.9" fill="#2fb344" stroke="#fff" stroke-width="2.8" stroke-linejoin="round" paint-order="stroke"/><polygon points="579.5,377.5 577.1,381.0 581.9,381.0" fill="#fff"/><polygon points="660.5,364.6 654.6,374.4 666.4,374.4" fill="#2fb344" stroke="#fff" stroke-width="2.8" stroke-linejoin="round" paint-order="stroke"/><polygon points="660.5,369.0 658.1,372.5 662.9,372.5" fill="#fff"/><polygon points="639.4,373.1 633.5,382.9 645.3,382.9" fill="#2fb344" stroke="#fff" stroke-width="2.8" stroke-linejoin="round" paint-order="stroke"/><polygon points="639.4,377.5 637.0,381.0 641.8,381.0" fill="#fff"/><polygon points="571.2,389.0 565.3,398.8 577.1,398.8" fill="#2fb344" stroke="#fff" stroke-width="2.8" stroke-linejoin="round" paint-order="stroke"/><polygon points="571.2,393.4 568.8,396.9 573.6,396.9" fill="#fff"/><polygon points="622.9,391.2 617.0,401.0 628.8,401.0" fill="#2fb344" stroke="#fff" stroke-width="2.8" stroke-linejoin="round" paint-order="stroke"/><polygon points="622.9,395.6 620.5,399.1 625.3,399.1" fill="#fff"/><polygon points="659.3,389.0 653.4,398.8 665.2,398.8" fill="#2fb344" stroke="#fff" stroke-width="2.8" stroke-linejoin="round" paint-order="stroke"/><polygon points="659.3,393.4 656.9,396.9 661.7,396.9" fill="#fff"/><polygon points="678.3,388.3 672.4,398.1 684.2,398.1" fill="#2fb344" stroke="#fff" stroke-width="2.8" stroke-linejoin="round" paint-order="stroke"/><polygon points="678.3,392.7 675.9,396.2 680.7,396.2" fill="#fff"/><polygon points="599.9,402.5 594.0,412.3 605.8,412.3" fill="#2fb344" stroke="#fff" stroke-width="2.8" stroke-linejoin="round" paint-order="stroke"/><polygon points="599.9,406.9 597.5,410.4 602.3,410.4" fill="#fff"/><polygon points="641.7,401.4 635.8,411.2 647.6,411.2" fill="#2fb344" stroke="#fff" stroke-width="2.8" stroke-linejoin="round" paint-order="stroke"/><polygon points="641.7,405.8 639.3,409.3 644.1,409.3" fill="#fff"/><polygon points="569.4,404.8 563.5,414.6 575.3,414.6" fill="#2fb344" stroke="#fff" stroke-width="2.8" stroke-linejoin="round" paint-order="stroke"/><polygon points="569.4,409.2 567.0,412.7 571.8,412.7" fill="#fff"/><polygon points="677.9,409.3 672.0,419.1 683.8,419.1" fill="#2fb344" stroke="#fff" stroke-width="2.8" stroke-linejoin="round" paint-order="stroke"/><polygon points="677.9,413.7 675.5,417.2 680.3,417.2" fill="#fff"/><polygon points="663.2,416.1 657.3,425.9 669.1,425.9" fill="#2fb344" stroke="#fff" stroke-width="2.8" stroke-linejoin="round" paint-order="stroke"/><polygon points="663.2,420.5 660.8,424.0 665.6,424.0" fill="#fff"/><polygon points="616.8,416.1 610.9,425.9 622.7,425.9" fill="#2fb344" stroke="#fff" stroke-width="2.8" stroke-linejoin="round" paint-order="stroke"/><polygon points="616.8,420.5 614.4,424.0 619.2,424.0" fill="#fff"/><polygon points="576.2,421.7 570.3,431.5 582.1,431.5" fill="#2fb344" stroke="#fff" stroke-width="2.8" stroke-linejoin="round" paint-order="stroke"/><polygon points="576.2,426.1 573.8,429.6 578.6,429.6" fill="#fff"/><polygon points="641.7,424.0 635.8,433.8 647.6,433.8" fill="#2fb344" stroke="#fff" stroke-width="2.8" stroke-linejoin="round" paint-order="stroke"/><polygon points="641.7,428.4 639.3,431.9 644.1,431.9" fill="#fff"/><polygon points="597.6,427.4 591.7,437.2 603.5,437.2" fill="#2fb344" stroke="#fff" stroke-width="2.8" stroke-linejoin="round" paint-order="stroke"/><polygon points="597.6,431.8 595.2,435.3 600.0,435.3" fill="#fff"/><polygon points="620.2,435.3 614.3,445.1 626.1,445.1" fill="#2fb344" stroke="#fff" stroke-width="2.8" stroke-linejoin="round" paint-order="stroke"/><polygon points="620.2,439.7 617.8,443.2 622.6,443.2" fill="#fff"/><polygon points="642.1,438.7 636.2,448.5 648.0,448.5" fill="#2fb344" stroke="#fff" stroke-width="2.8" stroke-linejoin="round" paint-order="stroke"/><polygon points="642.1,443.1 639.7,446.6 644.5,446.6" fill="#fff"/><polygon points="539.9,305.5 534.0,315.3 545.8,315.3" fill="#ec3f48" stroke="#fff" stroke-width="2.8" stroke-linejoin="round" paint-order="stroke"/><polygon points="539.9,309.9 537.5,313.4 542.3,313.4" fill="#fff"/><polygon points="478.9,376.2 473.0,386.0 484.8,386.0" fill="#ec3f48" stroke="#fff" stroke-width="2.8" stroke-linejoin="round" paint-order="stroke"/><polygon points="478.9,380.6 476.5,384.1 481.3,384.1" fill="#fff"/><circle cx="524.8" cy="347" r="13.6" fill="rgba(255,255,255,0.6)"/><circle cx="524.8" cy="347" r="11.6" fill="#fff" stroke="#2fb344" stroke-width="3.2"/><text x="524.8" y="349.8" font-size="8" fill="#222" text-anchor="middle" font-family="Liberation Sans, sans-serif">3</text><circle cx="614.4" cy="371.7" r="13.6" fill="rgba(255,255,255,0.6)"/><circle cx="614.4" cy="371.7" r="11.6" fill="#fff" stroke="#2fb344" stroke-width="3.2"/><text x="614.4" y="374.5" font-size="8" fill="#222" text-anchor="middle" font-family="Liberation Sans, sans-serif">3</text><rect x="221.3" y="256.5" width="16.7" height="33.7" rx="2" fill="#fff" stroke="rgba(0,0,0,0.3)" stroke-width="1.2"/><line x1="221.8" y1="273.3" x2="237.5" y2="273.3" stroke="#ccc" stroke-width="0.6"/><path d="M226 266.4 H233.4 M229.7 262.7 V270.1" stroke="#222" stroke-width="1.4"/><path d="M226.2 283.1 H233.2" stroke="#222" stroke-width="1.4"/><rect x="218" y="452.2" width="33.9" height="8.2" fill="rgba(255,255,255,0.7)"/><path d="M218.5 452.2 V460.4 H251.4 V452.2" fill="none" stroke="#777" stroke-width="0.9"/><rect x="218" y="460.4" width="27.6" height="8.1" fill="rgba(255,255,255,0.7)"/><path d="M218.5 468.5 V460.4 H245.1 V468.5" fill="none" stroke="#777" stroke-width="0.9"/><text x="221.3" y="458.4" font-size="5.4" fill="#333" font-family="Liberation Sans, sans-serif" textLength="19" lengthAdjust="spacingAndGlyphs">100 km</text><text x="221.3" y="466.5" font-size="5.4" fill="#333" font-family="Liberation Sans, sans-serif" textLength="14" lengthAdjust="spacingAndGlyphs">50 mi</text><rect x="768.3" y="464.6" width="110" height="7" fill="rgba(255,255,255,0.8)"/><text x="773.5" y="470.2" font-size="5.2" font-family="Liberation Sans, sans-serif" textLength="103" lengthAdjust="spacingAndGlyphs"><tspan fill="#2a82cb">Leaflet</tspan><tspan fill="#333"> | © </tspan><tspan fill="#2a82cb">OpenStreetMap</tspan><tspan fill="#333"> contributors</tspan></text></g></svg>
<div class="b" style="left:815.3px;top:502.5px;width:62.90000000000009px;height:19.200000000000045px;background:#3a3a3a;border-radius:2px;"></div>
<svg class="b" style="left:827.5px;top:508px" width="9" height="9" viewBox="0 0 16 16"><path d="M13.5 6 A6 6 0 0 0 2.6 5" fill="none" stroke="#f0f0f0" stroke-width="2"/><path d="M14.5 1 L14.5 7 L8.5 7 Z" fill="#f0f0f0"/><path d="M2.5 10 A6 6 0 0 0 13.4 11" fill="none" stroke="#f0f0f0" stroke-width="2"/><path d="M1.5 15 L1.5 9 L7.5 9 Z" fill="#f0f0f0"/></svg>
<div class="b" style="left:215px;top:539.6px;width:663.2px;height:19.799999999999955px;border:1px solid #5c5f61;border-radius:2px;box-sizing:border-box;"></div>
<div class="b" style="left:856.4px;top:540.4px;width:1.2000000000000455px;height:18.200000000000045px;background:#5c5f61;"></div>
<svg class="b" style="left:863px;top:545px" width="9" height="9" viewBox="0 0 16 16"><circle cx="6.5" cy="6.5" r="4.8" fill="none" stroke="#f0f0f0" stroke-width="2.4"/><path d="M10 10 L15 15" stroke="#f0f0f0" stroke-width="2.8" stroke-linecap="round"/></svg>
<svg class="b" style="left:303.5px;top:589.5px" width="6" height="3" viewBox="0 0 6 3"><path d="M0 3 L3 0 L6 3 Z" fill="#777"/></svg>
<div class="b" style="left:215px;top:600px;width:663px;height:2px;background:#0d0d0d;"></div>
<div class="b" style="left:851.3px;top:605.7px;width:19.300000000000068px;height:19.5px;background:#3a3a3a;border-radius:2.5px;"></div>
<svg class="b" style="left:857.5px;top:611.3000000000001px" width="7" height="8" viewBox="0 0 12 14"><path d="M6 14 L1.6 8.2 A5.4 5.4 0 1 1 10.4 8.2 Z" fill="#f4f4f4"/><circle cx="6" cy="5.4" r="2" fill="#3a3a3a"/></svg>
<div class="b" style="left:222.6px;top:612.5px;width:5.599999999999994px;height:5.599999999999909px;background:#2fc64a;border-radius:50%;"></div>
<svg class="b" style="left:278.8px;top:611.9px" width="9.4" height="6.4" viewBox="0 0 18 12"><rect width="18" height="6" fill="#fff"/><rect y="6" width="18" height="6" fill="#d7141a"/><path d="M0 0 L8 6 L0 12 Z" fill="#11457e"/></svg>
<div class="b" style="left:631px;top:609.6999999999999px;width:41.700000000000045px;height:11.399999999999977px;border:1px solid #6a6a6a;border-radius:6px;box-sizing:border-box;"></div>
<div class="b" style="left:851.3px;top:633.2px;width:19.300000000000068px;height:19.5px;background:#3a3a3a;border-radius:2.5px;"></div>
<svg class="b" style="left:857.5px;top:638.8000000000001px" width="7" height="8" viewBox="0 0 12 14"><path d="M6 14 L1.6 8.2 A5.4 5.4 0 1 1 10.4 8.2 Z" fill="#f4f4f4"/><circle cx="6" cy="5.4" r="2" fill="#3a3a3a"/></svg>
<div class="b" style="left:222.6px;top:639.7px;width:5.599999999999994px;height:5.599999999999909px;background:#2fc64a;border-radius:50%;"></div>
<svg class="b" style="left:278.8px;top:639.1px" width="9.4" height="6.4" viewBox="0 0 18 12"><rect width="18" height="6" fill="#fff"/><rect y="6" width="18" height="6" fill="#d7141a"/><path d="M0 0 L8 6 L0 12 Z" fill="#11457e"/></svg>
<div class="b" style="left:631px;top:636.9px;width:41.700000000000045px;height:11.399999999999977px;border:1px solid #6a6a6a;border-radius:6px;box-sizing:border-box;"></div>
<div class="b" style="left:851.3px;top:660.3px;width:19.300000000000068px;height:19.5px;background:#3a3a3a;border-radius:2.5px;"></div>
<svg class="b" style="left:857.5px;top:665.9px" width="7" height="8" viewBox="0 0 12 14"><path d="M6 14 L1.6 8.2 A5.4 5.4 0 1 1 10.4 8.2 Z" fill="#f4f4f4"/><circle cx="6" cy="5.4" r="2" fill="#3a3a3a"/></svg>
<div style="position:absolute;left:0;top:0;width:940px;height:664px;will-change:transform;"><div class="t" id="email" style="left:23.94px;top:3.96px;font-size:7.443px;color:#d6d6d6;font-weight:normal;transform:translateY(1.03px) scaleX(0.9100);transform-origin:0 0;">john.doe@navmatix.com</div>
<div class="t" id="acme" style="left:137.03px;top:3.98px;font-size:7.413px;color:#e8e8e8;font-weight:bold;transform:translateY(1.20px) scaleX(0.8390);transform-origin:0 0;">Acme</div>
<div class="t" id="gt" style="left:162.47px;top:3.03px;font-size:7.368px;color:#8a8a8a;font-weight:normal;transform:translateY(1.44px) scaleX(0.8544);transform-origin:0 0;">&gt;</div>
<div class="t" id="bcnet" style="left:173.98px;top:3.98px;font-size:7.413px;color:#e8e8e8;font-weight:bold;transform:translateY(1.20px) scaleX(0.8421);transform-origin:0 0;">Network</div>
<div class="t" id="bcref" style="left:213.98px;top:3.85px;font-size:7.558px;color:#e8e8e8;font-weight:bold;transform:translateY(-0.60px) scaleX(0.8364);transform-origin:0 0;">Reference stations</div>
<div class="t" id="glopos" style="left:92.24px;top:36.44px;font-size:25.103px;color:#ffffff;font-weight:normal;transform:translateY(0.94px) scaleX(0.9236);transform-origin:0 0;-webkit-text-stroke:0.25px #fff;">glopos</div>
<div class="t" id="m_Home" style="left:114.00px;top:95.85px;font-size:8.721px;color:#a9a9a9;font-weight:bold;transform:translateY(-0.40px) scaleX(0.8880);transform-origin:0 0;">Home</div>
<div class="t" id="m_Network" style="left:106.04px;top:118.75px;font-size:8.721px;color:#3d95f0;font-weight:bold;transform:translateY(0.00px) scaleX(0.8585);transform-origin:0 0;">Network</div>
<div class="t" id="m_Plans" style="left:116.02px;top:142.45px;font-size:8.721px;color:#a9a9a9;font-weight:bold;transform:translateY(0.20px) scaleX(0.8366);transform-origin:0 0;">Plans</div>
<div class="t" id="m_Devices" style="left:108.03px;top:165.75px;font-size:8.721px;color:#a9a9a9;font-weight:bold;transform:translateY(0.00px) scaleX(0.8366);transform-origin:0 0;">Devices</div>
<div class="t" id="m_Sessions" style="left:103.78px;top:188.75px;font-size:8.721px;color:#a9a9a9;font-weight:bold;transform:translateY(0.00px) scaleX(0.8423);transform-origin:0 0;">Sessions</div>
<div class="t" id="m_Sub-solutions" style="left:86.02px;top:225.95px;font-size:8.721px;color:#a9a9a9;font-weight:bold;transform:translateY(0.20px) scaleX(0.8541);transform-origin:0 0;">Sub-solutions</div>
<div class="t" id="m_Resellers" style="left:103.04px;top:249.35px;font-size:8.721px;color:#a9a9a9;font-weight:bold;transform:translateY(0.60px) scaleX(0.8438);transform-origin:0 0;">Resellers</div>
<div class="t" id="m_Clients" style="left:111.00px;top:272.35px;font-size:8.721px;color:#a9a9a9;font-weight:bold;transform:translateY(0.60px) scaleX(0.8339);transform-origin:0 0;">Clients</div>
<div class="t" id="title" style="left:214.42px;top:33.93px;font-size:16.003px;color:#7a7a7a;font-weight:bold;transform:translateY(0.20px) scaleX(0.9586);transform-origin:0 0;">Network</div>
<div class="t" id="tab1" style="left:265.00px;top:78.27px;font-size:10.174px;color:#3d95f0;font-weight:bold;transform:translateY(1.40px) scaleX(0.8563);transform-origin:0 0;">Correction sources</div>
<div class="t" id="tab2" style="left:456.98px;top:78.27px;font-size:10.174px;color:#a9a9a9;font-weight:bold;transform:translateY(1.40px) scaleX(0.8633);transform-origin:0 0;">Corrections streams</div>
<div class="t" id="tab3" style="left:655.00px;top:78.27px;font-size:10.174px;color:#a9a9a9;font-weight:bold;transform:translateY(1.40px) scaleX(0.8600);transform-origin:0 0;">Services</div>
<div class="t" id="tab4" style="left:802.50px;top:78.27px;font-size:10.174px;color:#a9a9a9;font-weight:bold;transform:translateY(1.40px) scaleX(0.8585);transform-origin:0 0;">Zones</div>
<div class="t" id="sub1" style="left:222.68px;top:137.18px;font-size:8.576px;color:#3d95f0;font-weight:bold;transform:translateY(0.60px) scaleX(0.8565);transform-origin:0 0;">Reference stations</div>
<div class="t" id="sub2" style="left:317.05px;top:137.18px;font-size:8.576px;color:#a9a9a9;font-weight:bold;transform:translateY(0.60px) scaleX(0.8493);transform-origin:0 0;">Engines</div>
<div class="t" id="addbtn" style="left:239.00px;top:189.75px;font-size:8.721px;color:#0e0e0e;font-weight:bold;transform:translateY(0.00px) scaleX(0.8445);transform-origin:0 0;">Add reference station</div>
<div class="t" id="chip1" style="left:227.00px;top:224.68px;font-size:7.413px;color:#f2f2f2;font-weight:bold;transform:translateY(0.40px) scaleX(0.8382);transform-origin:0 0;">Physical (RS)</div>
<div class="t" id="chip2" style="left:292.02px;top:224.68px;font-size:7.413px;color:#3bb8e2;font-weight:bold;transform:translateY(0.40px) scaleX(0.8636);transform-origin:0 0;">Simulated (SRS)</div>
<div class="t" id="sl0" style="left:215.17px;top:488.85px;font-size:8.721px;color:#a9a9a9;font-weight:bold;transform:translateY(-0.40px) scaleX(0.8231);transform-origin:0 0;">Total</div>
<div class="t" id="sv0" style="left:215.63px;top:499.33px;font-size:12.645px;color:#e6e6e6;font-weight:normal;transform:translateY(1.20px) scaleX(0.7709);transform-origin:0 0;">91</div>
<div class="t" id="sl1" style="left:279.00px;top:488.85px;font-size:8.721px;color:#3cbc4b;font-weight:bold;transform:translateY(-0.40px) scaleX(0.8596);transform-origin:0 0;">Healthy</div>
<div class="t" id="sv1" style="left:279.00px;top:499.33px;font-size:12.645px;color:#e6e6e6;font-weight:normal;transform:translateY(1.20px) scaleX(0.9172);transform-origin:0 0;">88%</div>
<div class="t" id="sl2" style="left:353.04px;top:488.85px;font-size:8.721px;color:#f28a41;font-weight:bold;transform:translateY(-0.40px) scaleX(0.8493);transform-origin:0 0;">Partially healthy</div>
<div class="t" id="sv2" style="left:353.01px;top:499.33px;font-size:12.645px;color:#e6e6e6;font-weight:normal;transform:translateY(1.20px) scaleX(0.9011);transform-origin:0 0;">0%</div>
<div class="t" id="sl3" style="left:456.02px;top:488.85px;font-size:8.721px;color:#ea4a52;font-weight:bold;transform:translateY(-0.40px) scaleX(0.8661);transform-origin:0 0;">Unhealthy</div>
<div class="t" id="sv3" style="left:455.02px;top:499.33px;font-size:12.645px;color:#e6e6e6;font-weight:normal;transform:translateY(1.20px) scaleX(0.9749);transform-origin:0 0;">11%</div>
<div class="t" id="sl4" style="left:538.67px;top:488.85px;font-size:8.721px;color:#a9a9a9;font-weight:bold;transform:translateY(-0.40px) scaleX(0.8542);transform-origin:0 0;">Not computed</div>
<div class="t" id="sv4" style="left:538.49px;top:499.33px;font-size:12.645px;color:#e6e6e6;font-weight:normal;transform:translateY(1.20px) scaleX(0.9187);transform-origin:0 0;">0%</div>
<div class="t" id="refresh" style="left:840.02px;top:506.71px;font-size:8.866px;color:#f0f0f0;font-weight:bold;transform:translateY(-0.20px) scaleX(0.7758);transform-origin:0 0;">Refresh</div>
<div class="t" id="search" style="left:224.01px;top:543.96px;font-size:8.285px;color:#4c4c4c;font-weight:normal;transform:translateY(1.20px) scaleX(0.9353);transform-origin:0 0;">Search...</div>
<div class="t" id="nine" style="left:847.89px;top:566.82px;font-size:7.267px;color:#e8e8e8;font-weight:bold;transform:translateY(0.20px) scaleX(0.9947);transform-origin:0 0;">9</div>
<div class="t" id="records" style="left:855.01px;top:567.65px;font-size:6.395px;color:#c6c6c6;font-weight:normal;transform:translateY(0.00px) scaleX(0.9715);transform-origin:0 0;">Records</div>
<div class="t" id="thname" style="left:279.00px;top:585.65px;font-size:8.721px;color:#b4b4b4;font-weight:bold;transform:translateY(-0.60px) scaleX(0.9047);transform-origin:0 0;">Name</div>
<div class="t" id="thnum" style="left:426.96px;top:585.65px;font-size:8.721px;color:#b4b4b4;font-weight:bold;transform:translateY(-0.60px) scaleX(0.8812);transform-origin:0 0;">Num. of streams</div>
<div class="t" id="thtype" style="left:629.89px;top:585.65px;font-size:8.721px;color:#b4b4b4;font-weight:bold;transform:translateY(-0.60px) scaleX(0.8400);transform-origin:0 0;">Type</div>
<div class="t" id="r1name" style="left:291.39px;top:609.61px;font-size:8.866px;color:#e0e0e0;font-weight:normal;transform:translateY(0.20px) scaleX(0.8235);transform-origin:0 0;">CZE001</div>
<div class="t" id="r2name" style="left:291.41px;top:636.91px;font-size:8.866px;color:#e0e0e0;font-weight:normal;transform:translateY(0.00px) scaleX(0.8418);transform-origin:0 0;">CZE002</div>
<div class="t" id="r1num" style="left:427.02px;top:609.61px;font-size:8.866px;color:#e0e0e0;font-weight:normal;transform:translateY(0.20px) scaleX(0.7324);transform-origin:0 0;">1</div>
<div class="t" id="r2num" style="left:427.02px;top:636.91px;font-size:8.866px;color:#e0e0e0;font-weight:normal;transform:translateY(0.00px) scaleX(0.7324);transform-origin:0 0;">1</div>
<div class="t" id="r1type" style="left:640.01px;top:610.72px;font-size:7.267px;color:#cfcfcf;font-weight:normal;transform:translateY(0.60px) scaleX(0.8889);transform-origin:0 0;">Physical</div>
<div class="t" id="r2type" style="left:640.01px;top:638.02px;font-size:7.267px;color:#cfcfcf;font-weight:normal;transform:translateY(0.40px) scaleX(0.8889);transform-origin:0 0;">Physical</div></div>
</body></html>
